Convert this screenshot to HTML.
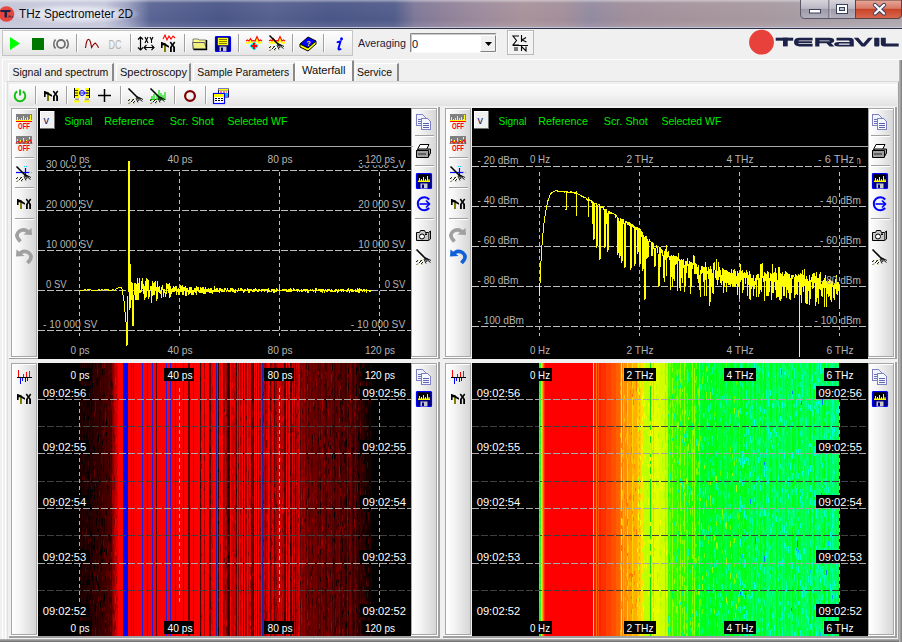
<!DOCTYPE html><html><head><meta charset="utf-8"><style>
*{margin:0;padding:0;box-sizing:border-box}
body{width:902px;height:642px;overflow:hidden;background:#f0f0f0;font-family:"Liberation Sans",sans-serif;position:relative}
.a{position:absolute}
.tcol{background:linear-gradient(90deg,#ffffff 0%,#f4f4f4 35%,#d6d6d6 100%);border:1px solid #a6a6a6;box-shadow:inset 1px 1px 0 #fff}
svg text{font-family:"Liberation Sans",sans-serif}
</style></head><body>
<div class="a" style="left:0;top:0;width:902px;height:27px;background:linear-gradient(90deg,#c4c6d8 0px,#c8cadc 60px,#c4c6da 105px,#9aa0c0 128px,#5a6494 150px,#4a5688 220px,#56608f 270px,#4a5688 330px,#525c8a 395px,#7e7898 415px,#8e8098 445px,#9c8a9c 480px,#a8929a 525px,#a28e9a 565px,#928aa0 590px,#a08e9a 630px,#a6949c 700px,#a6989e 760px,#a89ea6 820px,#aca6ae 902px)"></div><div class="a" style="left:0;top:0;width:902px;height:27px;background:linear-gradient(180deg,rgba(255,255,255,0.45) 0px,rgba(255,255,255,0.05) 3px,rgba(255,255,255,0) 20px,rgba(255,255,255,0.1) 27px)"></div><div class="a" style="left:10px;top:4px;width:130px;height:20px;border-radius:10px;background:radial-gradient(ellipse at center,rgba(230,232,242,0.85) 40%,rgba(230,232,242,0) 72%)"></div>
<div class="a" style="left:0;top:27px;width:902px;height:1px;background:#c4c6dc"></div>
<div class="a" style="left:0;top:28px;width:902px;height:1px;background:#2c3042"></div>
<div class="a" style="left:2px;top:59px;width:1px;height:583px;background:#ffffff"></div>
<div class="a" style="left:2px;top:30px;width:351px;height:26px;border:1px solid #c4c4c4;background:linear-gradient(#fdfdfd,#f4f4f4 50%,#e4e4e4)"></div>
<div class="a" style="left:8px;top:63px;width:106px;height:18px;background:linear-gradient(#f2f2f2,#ebebeb);border-left:1px solid #fff;border-top:1px solid #fff;border-right:2px solid #8a8a8a"></div>
<div class="a" style="left:116px;top:63px;width:75px;height:18px;background:linear-gradient(#f2f2f2,#ebebeb);border-left:1px solid #fff;border-top:1px solid #fff;border-right:2px solid #8a8a8a"></div>
<div class="a" style="left:193px;top:63px;width:102px;height:18px;background:linear-gradient(#f2f2f2,#ebebeb);border-left:1px solid #fff;border-top:1px solid #fff;border-right:2px solid #8a8a8a"></div>
<div class="a" style="left:355px;top:63px;width:44px;height:18px;background:linear-gradient(#f2f2f2,#ebebeb);border-left:1px solid #fff;border-top:1px solid #fff;border-right:2px solid #8a8a8a"></div>
<div class="a" style="left:295px;top:60px;width:59px;height:23px;background:linear-gradient(#fdfdfd,#f6f6f6);border-left:1px solid #fff;border-top:1px solid #e8e8e8;border-right:2px solid #8a8a8a"></div>
<div class="a" style="left:5px;top:81px;width:895px;height:561px;border-left:1px solid #fff;border-top:1px solid #d8d8d8;border-right:2px solid #a0a0a0;background:#f0f0f0"></div>
<div class="a" style="left:7px;top:82px;width:891px;height:560px;background:#f0f0f0;border-left:1px solid #e0e0e0"></div>
<div class="a" style="left:9px;top:84px;width:888px;height:22px;background:linear-gradient(#fcfcfc,#f3f3f3 50%,#e2e2e2)"></div>
<div class="a" style="left:9px;top:107px;width:431px;height:252px;background:#f0f0f0;border-right:2px solid #a0a0a0;border-bottom:1px solid #a0a0a0;box-shadow:inset -1px -1px 0 #fff"></div>
<div class="a" style="left:443px;top:107px;width:454px;height:252px;background:#f0f0f0;border-right:2px solid #a0a0a0;border-bottom:1px solid #a0a0a0;box-shadow:inset -1px -1px 0 #fff"></div>
<div class="a" style="left:9px;top:362px;width:431px;height:276px;background:#f0f0f0;border-right:2px solid #a0a0a0;border-bottom:2px solid #a0a0a0;box-shadow:inset -1px -1px 0 #fff"></div>
<div class="a" style="left:443px;top:362px;width:454px;height:276px;background:#f0f0f0;border-right:2px solid #a0a0a0;border-bottom:2px solid #a0a0a0;box-shadow:inset -1px -1px 0 #fff"></div>
<div class="a tcol" style="left:11px;top:108px;width:26px;height:249px"></div>
<div class="a" style="left:38px;top:108px;width:373px;height:251px;background:#000"></div>
<div class="a tcol" style="left:411px;top:108px;width:26px;height:249px"></div>
<div class="a tcol" style="left:445px;top:108px;width:26px;height:249px"></div>
<div class="a" style="left:472px;top:108px;width:396px;height:251px;background:#000"></div>
<div class="a tcol" style="left:868px;top:108px;width:26px;height:249px"></div>
<div class="a tcol" style="left:11px;top:363px;width:26px;height:272px"></div>
<div class="a" style="left:38px;top:363px;width:373px;height:273px;background:#000"></div>
<div class="a tcol" style="left:411px;top:363px;width:26px;height:272px"></div>
<div class="a tcol" style="left:445px;top:363px;width:26px;height:272px"></div>
<div class="a" style="left:472px;top:363px;width:396px;height:273px;background:#000"></div>
<div class="a tcol" style="left:868px;top:363px;width:26px;height:272px"></div>
<div class="a" style="left:0;top:639px;width:902px;height:3px;background:linear-gradient(#b8b8b8,#6a6a6a)"></div>
<div class="a" style="left:899px;top:60px;width:3px;height:582px;background:linear-gradient(90deg,#c0c0c0,#7a7a7a)"></div>
<div class="a" style="left:2px;top:59px;width:900px;height:1px;background:#fcfcfc"></div>
<svg class="a" style="left:0;top:0" width="902" height="642" viewBox="0 0 902 642">
<text x="12.4" y="76" font-size="11" fill="#101010" text-anchor="start" font-weight="normal" textLength="96" lengthAdjust="spacingAndGlyphs" >Signal and spectrum</text>
<text x="120" y="76" font-size="11" fill="#101010" text-anchor="start" font-weight="normal" textLength="67" lengthAdjust="spacingAndGlyphs" >Spectroscopy</text>
<text x="197.3" y="76" font-size="11" fill="#101010" text-anchor="start" font-weight="normal" textLength="92" lengthAdjust="spacingAndGlyphs" >Sample Parameters</text>
<text x="301.9" y="74" font-size="11" fill="#101010" text-anchor="start" font-weight="normal" textLength="43.6" lengthAdjust="spacingAndGlyphs" >Waterfall</text>
<text x="357" y="76" font-size="11" fill="#101010" text-anchor="start" font-weight="normal" textLength="35" lengthAdjust="spacingAndGlyphs" >Service</text>
<text x="19" y="18" font-size="12" fill="#0a0a14" text-anchor="start" font-weight="normal" textLength="114" lengthAdjust="spacingAndGlyphs" >THz Spectrometer 2D</text>
<text x="358" y="47" font-size="11" fill="#1c1c3c" text-anchor="start" font-weight="normal" textLength="48" lengthAdjust="spacingAndGlyphs" >Averaging</text>
<rect x="38" y="146" width="375" height="1" fill="#a8a8a8"/><rect x="40" y="111" width="15" height="18" fill="#f0f0f0" stroke="#ffffff" stroke-width="0"/><rect x="40" y="111" width="15" height="1" fill="#fff"/><rect x="40" y="111" width="1" height="18" fill="#fff"/><rect x="40" y="128" width="15" height="1" fill="#707070"/><rect x="54" y="111" width="1" height="18" fill="#707070"/><text x="43.5" y="124" font-size="11" fill="#202060" text-anchor="start" font-weight="normal" >v</text><text x="64.5" y="125" font-size="11" fill="#00ec00" text-anchor="start" font-weight="normal" textLength="28" lengthAdjust="spacingAndGlyphs" >Signal</text><text x="104.3" y="125" font-size="11" fill="#00ec00" text-anchor="start" font-weight="normal" textLength="49.6" lengthAdjust="spacingAndGlyphs" >Reference</text><text x="169.7" y="125" font-size="11" fill="#00ec00" text-anchor="start" font-weight="normal" textLength="44" lengthAdjust="spacingAndGlyphs" >Scr. Shot</text><text x="227.4" y="125" font-size="11" fill="#00ec00" text-anchor="start" font-weight="normal" textLength="60" lengthAdjust="spacingAndGlyphs" >Selected WF</text>
<rect x="472" y="146" width="396" height="1" fill="#a8a8a8"/><rect x="474" y="111" width="15" height="18" fill="#f0f0f0" stroke="#ffffff" stroke-width="0"/><rect x="474" y="111" width="15" height="1" fill="#fff"/><rect x="474" y="111" width="1" height="18" fill="#fff"/><rect x="474" y="128" width="15" height="1" fill="#707070"/><rect x="488" y="111" width="1" height="18" fill="#707070"/><text x="477.5" y="124" font-size="11" fill="#202060" text-anchor="start" font-weight="normal" >v</text><text x="498.5" y="125" font-size="11" fill="#00ec00" text-anchor="start" font-weight="normal" textLength="28" lengthAdjust="spacingAndGlyphs" >Signal</text><text x="538.3" y="125" font-size="11" fill="#00ec00" text-anchor="start" font-weight="normal" textLength="49.6" lengthAdjust="spacingAndGlyphs" >Reference</text><text x="603.7" y="125" font-size="11" fill="#00ec00" text-anchor="start" font-weight="normal" textLength="44" lengthAdjust="spacingAndGlyphs" >Scr. Shot</text><text x="661.4" y="125" font-size="11" fill="#00ec00" text-anchor="start" font-weight="normal" textLength="60" lengthAdjust="spacingAndGlyphs" >Selected WF</text>
<line x1="38" y1="170.5" x2="411" y2="170.5" stroke="#bdbdbd" stroke-width="1" stroke-dasharray="7 2" stroke-dashoffset="0"/>
<line x1="38" y1="210.5" x2="411" y2="210.5" stroke="#bdbdbd" stroke-width="1" stroke-dasharray="7 2" stroke-dashoffset="0"/>
<line x1="38" y1="250.5" x2="411" y2="250.5" stroke="#bdbdbd" stroke-width="1" stroke-dasharray="7 2" stroke-dashoffset="0"/>
<line x1="38" y1="290.5" x2="411" y2="290.5" stroke="#bdbdbd" stroke-width="1" stroke-dasharray="7 2" stroke-dashoffset="0"/>
<line x1="38" y1="330.5" x2="411" y2="330.5" stroke="#bdbdbd" stroke-width="1" stroke-dasharray="7 2" stroke-dashoffset="0"/>
<line x1="79.5" y1="172" x2="79.5" y2="336" stroke="#bdbdbd" stroke-width="1" stroke-dasharray="4 3" stroke-dashoffset="0"/>
<line x1="179.5" y1="172" x2="179.5" y2="336" stroke="#bdbdbd" stroke-width="1" stroke-dasharray="4 3" stroke-dashoffset="0"/>
<line x1="279.5" y1="172" x2="279.5" y2="336" stroke="#bdbdbd" stroke-width="1" stroke-dasharray="4 3" stroke-dashoffset="0"/>
<line x1="379.5" y1="172" x2="379.5" y2="336" stroke="#bdbdbd" stroke-width="1" stroke-dasharray="4 3" stroke-dashoffset="0"/>
<line x1="472" y1="166.5" x2="866" y2="166.5" stroke="#bdbdbd" stroke-width="1" stroke-dasharray="7 2" stroke-dashoffset="0"/>
<line x1="472" y1="206.5" x2="866" y2="206.5" stroke="#bdbdbd" stroke-width="1" stroke-dasharray="7 2" stroke-dashoffset="0"/>
<line x1="472" y1="246.5" x2="866" y2="246.5" stroke="#bdbdbd" stroke-width="1" stroke-dasharray="7 2" stroke-dashoffset="0"/>
<line x1="472" y1="286.5" x2="866" y2="286.5" stroke="#bdbdbd" stroke-width="1" stroke-dasharray="7 2" stroke-dashoffset="0"/>
<line x1="472" y1="326.5" x2="866" y2="326.5" stroke="#bdbdbd" stroke-width="1" stroke-dasharray="7 2" stroke-dashoffset="0"/>
<line x1="539.5" y1="172" x2="539.5" y2="336" stroke="#bdbdbd" stroke-width="1" stroke-dasharray="4 3" stroke-dashoffset="0"/>
<line x1="639.5" y1="172" x2="639.5" y2="336" stroke="#bdbdbd" stroke-width="1" stroke-dasharray="4 3" stroke-dashoffset="0"/>
<line x1="739.5" y1="172" x2="739.5" y2="336" stroke="#bdbdbd" stroke-width="1" stroke-dasharray="4 3" stroke-dashoffset="0"/>
<line x1="839.5" y1="172" x2="839.5" y2="336" stroke="#bdbdbd" stroke-width="1" stroke-dasharray="4 3" stroke-dashoffset="0"/>
<text x="46" y="168" font-size="11" fill="#b4b4b4" text-anchor="start" font-weight="normal" textLength="47" lengthAdjust="spacingAndGlyphs" >30 000 SV</text>
<text x="405.3" y="168" font-size="11" fill="#b4b4b4" text-anchor="end" font-weight="normal" textLength="47" lengthAdjust="spacingAndGlyphs" >30 000 SV</text>
<text x="477.5" y="164" font-size="11" fill="#b4b4b4" text-anchor="start" font-weight="normal" textLength="41" lengthAdjust="spacingAndGlyphs" >- 20 dBm</text>
<text x="861" y="164" font-size="11" fill="#b4b4b4" text-anchor="end" font-weight="normal" textLength="41" lengthAdjust="spacingAndGlyphs" >- 20 dBm</text>
<rect x="68" y="152" width="25" height="13" fill="#000"/><text x="80" y="163" font-size="11" fill="#b4b4b4" text-anchor="middle" font-weight="normal" textLength="19" lengthAdjust="spacingAndGlyphs" >0 ps</text>
<text x="80" y="354" font-size="11" fill="#b4b4b4" text-anchor="middle" font-weight="normal" textLength="19" lengthAdjust="spacingAndGlyphs" >0 ps</text>
<rect x="164" y="152" width="31" height="13" fill="#000"/><text x="180" y="163" font-size="11" fill="#b4b4b4" text-anchor="middle" font-weight="normal" textLength="25" lengthAdjust="spacingAndGlyphs" >40 ps</text>
<text x="180" y="354" font-size="11" fill="#b4b4b4" text-anchor="middle" font-weight="normal" textLength="25" lengthAdjust="spacingAndGlyphs" >40 ps</text>
<rect x="264" y="152" width="31" height="13" fill="#000"/><text x="280" y="163" font-size="11" fill="#b4b4b4" text-anchor="middle" font-weight="normal" textLength="25" lengthAdjust="spacingAndGlyphs" >80 ps</text>
<text x="280" y="354" font-size="11" fill="#b4b4b4" text-anchor="middle" font-weight="normal" textLength="25" lengthAdjust="spacingAndGlyphs" >80 ps</text>
<rect x="362" y="152" width="36" height="13" fill="#000"/><text x="380" y="163" font-size="11" fill="#b4b4b4" text-anchor="middle" font-weight="normal" textLength="30" lengthAdjust="spacingAndGlyphs" >120 ps</text>
<text x="380" y="354" font-size="11" fill="#b4b4b4" text-anchor="middle" font-weight="normal" textLength="30" lengthAdjust="spacingAndGlyphs" >120 ps</text>
<rect x="527" y="152" width="26" height="13" fill="#000"/><text x="540" y="163" font-size="11" fill="#b4b4b4" text-anchor="middle" font-weight="normal" textLength="20" lengthAdjust="spacingAndGlyphs" >0 Hz</text>
<text x="540" y="354" font-size="11" fill="#b4b4b4" text-anchor="middle" font-weight="normal" textLength="20" lengthAdjust="spacingAndGlyphs" >0 Hz</text>
<rect x="624" y="152" width="33" height="13" fill="#000"/><text x="640" y="163" font-size="11" fill="#b4b4b4" text-anchor="middle" font-weight="normal" textLength="27" lengthAdjust="spacingAndGlyphs" >2 THz</text>
<text x="640" y="354" font-size="11" fill="#b4b4b4" text-anchor="middle" font-weight="normal" textLength="27" lengthAdjust="spacingAndGlyphs" >2 THz</text>
<rect x="724" y="152" width="33" height="13" fill="#000"/><text x="740" y="163" font-size="11" fill="#b4b4b4" text-anchor="middle" font-weight="normal" textLength="27" lengthAdjust="spacingAndGlyphs" >4 THz</text>
<text x="740" y="354" font-size="11" fill="#b4b4b4" text-anchor="middle" font-weight="normal" textLength="27" lengthAdjust="spacingAndGlyphs" >4 THz</text>
<rect x="815" y="152" width="42" height="13" fill="#000"/><text x="836" y="163" font-size="11" fill="#b4b4b4" text-anchor="middle" font-weight="normal" textLength="36" lengthAdjust="spacingAndGlyphs" >- 6 THz</text>
<text x="840" y="354" font-size="11" fill="#b4b4b4" text-anchor="middle" font-weight="normal" textLength="27" lengthAdjust="spacingAndGlyphs" >6 THz</text>
<polyline fill="none" stroke="#ffff00" stroke-width="1" shape-rendering="crispEdges" points="80.00,290.0 81.00,290.0 82.00,290.5 83.00,290.0 84.00,290.0 85.00,289.5 86.00,290.0 87.00,290.0 88.00,289.5 89.00,290.0 90.00,289.5 91.00,290.0 92.00,290.0 93.00,290.0 94.00,290.5 95.00,290.5 96.00,290.0 97.00,290.0 98.00,290.0 99.00,289.5 100.00,290.5 101.00,290.0 102.00,289.5 103.00,290.0 104.00,290.0 105.00,289.5 106.00,290.0 107.00,289.5 108.00,289.5 109.00,290.5 110.00,290.0 111.00,290.0 112.00,290.0 113.00,289.5 114.00,290.0 115.00,290.0 116.00,289.0 118.00,288.0 120.00,287.0 121.00,287.5 122.00,289.0 123.00,295.0 124.00,301.0 125.00,312.0 126.00,322.0 127.00,345.5 128.00,300.0 128.50,161.0 129.50,161.0 130.00,310.0 130.50,264.0 131.00,300.0 132.00,282.0 133.00,326.0 134.00,295.0 135.00,282.7 135.33,288.5 135.67,296.9 136.00,300.1 136.33,295.2 136.67,285.3 137.00,285.8 137.33,277.6 137.67,293.3 138.00,300.4 138.33,294.7 138.67,292.9 139.00,283.3 139.33,278.2 139.67,279.4 140.00,292.8 140.33,292.6 140.67,290.0 141.00,292.5 141.33,286.2 141.67,291.1 142.00,280.7 142.33,288.7 142.67,277.7 143.00,283.9 143.33,287.0 143.67,294.0 144.00,287.6 144.33,286.2 144.67,299.8 145.00,287.0 145.33,295.3 145.67,280.7 146.00,298.1 146.33,287.8 146.67,286.9 147.00,278.0 147.33,290.7 147.67,279.8 148.00,279.1 148.33,298.8 148.67,280.7 149.00,292.2 149.33,296.4 149.67,296.4 150.00,290.2 150.33,286.0 150.67,288.3 151.00,285.9 151.33,286.5 151.67,302.9 152.00,291.0 152.33,281.4 152.67,281.6 153.00,295.5 153.33,283.5 153.67,288.9 154.00,295.3 154.33,289.1 154.67,282.4 155.00,287.4 155.33,281.4 155.67,290.9 156.00,289.0 156.33,301.2 156.67,286.6 157.00,295.4 157.33,299.1 157.67,281.4 158.00,287.6 158.33,289.0 158.67,292.4 159.00,287.6 159.33,287.1 159.67,291.3 160.00,292.7 160.33,291.6 160.67,294.0 161.00,291.4 161.33,298.1 161.67,287.1 162.00,290.0 162.33,287.7 162.67,285.4 163.00,288.7 163.33,293.4 163.67,296.9 164.00,290.6 164.33,291.2 164.67,289.3 165.00,292.3 165.33,296.1 165.67,296.3 166.00,293.9 166.33,290.5 166.67,282.7 167.00,284.3 167.33,289.4 167.67,287.8 168.00,288.2 168.33,292.3 168.67,283.7 169.00,293.2 169.33,284.1 169.67,283.3 170.00,297.8 170.33,285.9 170.67,290.7 171.00,288.4 171.33,294.2 171.67,292.0 172.00,291.6 172.33,287.9 172.67,291.4 173.00,291.5 173.33,291.0 173.67,287.4 174.00,286.5 174.33,291.1 174.67,291.1 175.00,286.7 175.33,290.9 175.67,286.5 176.00,286.8 176.33,295.0 176.67,286.2 177.00,291.3 177.33,291.0 177.67,292.1 178.00,288.9 178.33,290.4 178.67,294.7 179.00,288.5 179.33,294.9 179.67,289.1 180.00,291.6 180.33,290.9 180.67,285.4 181.00,292.1 181.33,289.5 181.67,286.3 182.00,291.6 182.33,285.4 182.67,285.9 183.00,295.4 183.33,288.9 183.67,291.6 184.00,286.8 184.33,287.8 184.67,291.2 185.00,289.2 185.33,285.6 185.67,295.7 186.00,287.2 186.33,294.7 186.67,295.2 187.00,292.0 187.33,288.4 187.67,288.5 188.00,290.0 188.33,290.0 188.67,295.4 189.00,292.9 189.33,287.4 189.67,293.4 190.00,293.5 190.33,288.0 190.67,287.4 191.00,292.2 191.33,286.6 191.67,291.7 192.00,295.2 192.33,290.3 192.67,291.0 193.00,292.1 193.33,294.7 193.67,290.8 194.00,290.6 194.33,289.4 194.67,290.4 195.00,289.3 195.33,288.8 195.67,291.7 196.00,293.1 196.33,294.7 196.67,290.3 197.00,286.5 197.33,290.6 197.67,290.3 198.00,290.1 198.33,290.7 198.67,286.9 199.00,290.4 199.33,291.3 199.67,292.4 200.00,290.7 200.33,291.7 200.67,286.9 201.00,292.8 201.33,290.4 201.67,288.0 202.00,290.5 202.33,287.2 202.67,287.5 203.00,292.7 203.33,293.6 203.67,287.0 204.00,292.0 204.33,292.7 204.67,290.7 205.00,288.6 205.33,293.5 205.67,287.3 206.00,289.2 206.33,290.4 206.67,292.2 207.00,289.4 207.33,292.3 207.67,290.7 208.00,292.1 208.33,288.6 208.67,290.0 209.00,289.6 209.33,288.7 209.67,291.4 210.00,292.6 210.33,292.8 210.67,291.6 211.00,288.0 211.33,288.5 211.67,290.8 212.00,293.4 212.33,293.2 212.67,290.7 213.00,290.1 213.33,292.1 213.67,291.0 214.00,291.8 214.33,290.0 214.67,288.2 215.00,289.2 215.33,291.1 215.67,290.9 216.00,290.2 216.33,291.6 216.67,289.7 217.00,288.3 217.33,292.1 217.67,290.2 218.00,291.5 218.33,290.5 218.67,290.9 219.00,290.7 219.33,292.5 219.67,290.0 220.00,288.5 220.33,289.9 220.67,290.1 221.00,290.8 221.33,289.2 221.67,291.4 222.00,291.1 222.33,291.1 222.67,288.7 223.00,291.8 223.33,291.8 223.67,291.9 224.00,290.7 224.33,290.2 224.67,290.9 225.00,288.3 225.33,289.9 225.67,288.0 226.00,289.9 226.33,291.9 226.67,292.0 227.00,290.8 227.33,289.9 227.67,288.1 228.00,290.3 228.33,291.6 228.67,291.8 229.00,290.0 229.33,290.3 229.67,292.1 230.00,290.0 230.33,292.4 230.67,289.8 231.00,288.5 231.33,288.7 231.67,289.6 232.00,290.2 232.33,289.6 232.67,291.9 233.00,290.9 233.33,289.5 233.67,291.7 234.00,291.6 234.33,290.5 234.67,292.7 235.00,290.0 235.33,289.7 235.67,291.4 236.00,290.7 236.33,290.2 236.67,290.0 237.00,289.9 237.33,290.9 237.67,290.4 238.00,291.2 238.33,288.6 238.67,288.4 239.00,289.7 239.33,290.4 239.67,290.6 240.00,290.9 240.33,288.5 240.67,291.4 241.00,288.6 241.33,289.2 241.67,289.2 242.00,288.7 242.33,289.9 242.67,289.9 243.00,291.0 243.33,290.9 243.67,291.8 244.00,291.4 244.33,290.5 244.67,291.9 245.00,290.5 245.33,291.4 245.67,289.0 246.00,290.9 246.33,290.7 246.67,290.9 247.00,290.7 247.33,289.4 247.67,290.5 248.00,290.4 248.33,292.5 248.67,289.0 249.00,292.4 249.33,292.0 249.67,292.5 250.00,288.9 250.33,290.5 250.67,289.0 251.00,289.0 251.33,290.6 251.67,289.4 252.00,289.6 252.33,291.9 252.67,291.0 253.00,290.7 253.33,289.3 253.67,290.7 254.00,290.0 254.33,290.6 254.67,291.2 255.00,289.4 255.33,289.2 255.67,290.4 256.00,290.5 256.33,289.9 256.67,290.6 257.00,290.2 257.33,292.0 257.67,290.0 258.00,291.4 258.33,290.5 258.67,291.4 259.00,289.4 259.33,289.4 259.67,289.1 260.00,290.7 260.33,290.7 260.67,290.4 261.00,291.0 261.33,290.3 261.67,291.0 262.00,288.9 262.33,289.0 262.67,289.1 263.00,290.8 263.33,289.2 263.67,289.2 264.00,288.9 264.33,290.4 264.67,292.2 265.00,290.2 265.33,289.9 265.67,290.1 266.00,289.3 266.33,289.8 266.67,289.3 267.00,289.5 267.33,290.6 267.67,291.7 268.00,290.8 268.33,289.3 268.67,290.4 269.00,291.8 269.33,290.6 269.67,291.6 270.00,291.6 270.33,291.7 270.67,291.5 271.00,292.2 271.33,291.4 271.67,291.5 272.00,289.5 272.33,291.0 272.67,289.6 273.00,290.9 273.33,291.7 273.67,290.8 274.00,289.2 274.33,290.2 274.67,291.4 275.00,290.8 275.33,291.2 275.67,291.3 276.00,290.5 276.33,291.0 276.67,289.0 277.00,289.1 277.33,290.6 277.67,290.7 278.00,290.0 278.33,290.6 278.67,290.6 279.00,289.7 279.33,291.0 279.67,289.3 280.00,290.2 280.33,290.8 280.67,290.4 281.00,290.6 281.33,290.4 281.67,290.6 282.00,290.2 282.33,290.1 282.67,290.2 283.00,289.6 283.33,290.6 283.67,290.5 284.00,289.6 284.33,290.2 284.67,289.4 285.00,290.0 285.33,289.5 285.67,289.6 286.00,289.4 286.33,290.7 286.67,289.6 287.00,291.6 287.33,290.8 287.67,290.4 288.00,290.3 288.33,291.1 288.67,290.0 289.00,290.3 289.33,290.3 289.67,291.6 290.00,289.5 290.33,289.1 290.67,290.8 291.00,292.0 291.33,290.2 291.67,289.9 292.00,289.6 292.33,290.8 292.67,290.4 293.00,290.8 293.33,290.2 293.67,289.1 294.00,290.5 294.33,289.8 294.67,289.9 295.00,290.4 295.33,290.6 295.67,290.7 296.00,290.0 296.33,289.7 296.67,290.2 297.00,289.3 297.33,291.2 297.67,290.5 298.00,289.4 298.33,290.4 298.67,289.7 299.00,290.3 299.33,291.3 299.67,290.4 300.00,290.2 300.33,290.5 300.67,290.9 301.00,290.2 301.33,290.6 301.67,290.0 302.00,291.5 302.33,291.5 302.67,290.1 303.00,291.4 303.33,290.6 303.67,290.1 304.00,289.3 304.33,290.0 304.67,290.7 305.00,290.5 305.33,291.1 305.67,290.2 306.00,290.8 306.33,289.6 306.67,289.6 307.00,290.9 307.33,290.4 307.67,291.4 308.00,290.3 308.33,290.4 308.67,291.4 309.00,289.8 309.33,290.4 309.67,290.6 310.00,290.6 310.33,290.5 310.67,289.9 311.00,290.4 311.33,290.8 311.67,290.8 312.00,289.8 312.33,290.4 312.67,289.7 313.00,290.0 313.33,291.8 313.67,291.3 314.00,290.8 314.33,290.0 314.67,290.2 315.00,290.5 315.33,289.8 315.67,291.3 316.00,290.5 316.33,289.5 316.67,290.6 317.00,290.9 317.33,290.2 317.67,290.1 318.00,291.1 318.33,290.7 318.67,290.0 319.00,290.6 319.33,290.7 319.67,290.4 320.00,289.3 320.33,291.6 320.67,289.3 321.00,290.8 321.33,289.5 321.67,290.4 322.00,291.5 322.33,291.8 322.67,289.9 323.00,289.5 323.33,289.3 323.67,290.6 324.00,290.7 324.33,291.4 324.67,289.9 325.00,291.1 325.33,290.8 325.67,290.1 326.00,290.6 326.33,290.5 326.67,291.8 327.00,290.1 327.33,290.9 327.67,289.8 328.00,289.5 328.33,289.3 328.67,290.7 329.00,290.5 329.33,289.8 329.67,289.4 330.00,290.8 330.33,291.5 330.67,291.0 331.00,290.0 331.33,290.5 331.67,289.3 332.00,290.8 332.33,291.1 332.67,290.9 333.00,291.0 333.33,291.0 333.67,291.3 334.00,291.3 334.33,291.2 334.67,290.7 335.00,290.1 335.33,291.6 335.67,290.2 336.00,289.6 336.33,289.6 336.67,289.6 337.00,290.8 337.33,291.4 337.67,290.0 338.00,291.6 338.33,289.7 338.67,289.5 339.00,291.0 339.33,290.4 339.67,290.3 340.00,290.4 340.33,290.5 340.67,290.7 341.00,289.3 341.33,290.6 341.67,289.7 342.00,289.4 342.33,290.5 342.67,290.1 343.00,290.4 343.33,290.9 343.67,289.4 344.00,290.7 344.33,290.4 344.67,290.4 345.00,290.4 345.33,290.8 345.67,290.2 346.00,289.9 346.33,291.2 346.67,290.6 347.00,290.3 347.33,291.6 347.67,290.1 348.00,290.3 348.33,289.4 348.67,290.3 349.00,290.7 349.33,291.7 349.67,290.8 350.00,291.2 350.33,289.7 350.67,291.2 351.00,289.4 351.33,291.7 351.67,291.0 352.00,289.5 352.33,290.7 352.67,291.1 353.00,291.6 353.33,289.8 353.67,291.6 354.00,290.0 354.33,290.2 354.67,290.0 355.00,289.8 355.33,290.5 355.67,289.7 356.00,291.5 356.33,290.7 356.67,291.3 357.00,290.9 357.33,291.1 357.67,289.5 358.00,290.1 358.33,289.8 358.67,291.2 359.00,290.5 359.33,289.8 359.67,291.5 360.00,290.6 360.33,290.8 360.67,290.6 361.00,289.5 361.33,290.9 361.67,290.5 362.00,290.1 362.33,291.4 362.67,290.4 363.00,290.0 363.33,291.3 363.67,289.9 364.00,290.1 364.33,290.1 364.67,289.8 365.00,291.5 365.33,290.2 365.67,290.3 366.00,290.6 366.33,289.5 366.67,291.5 367.00,290.6 367.33,290.3 367.67,290.6 368.00,290.1 368.33,290.1 368.67,290.0 369.00,290.6 369.33,291.1 369.67,290.3 370.00,290.1 370.33,290.2 370.67,290.9 371.00,290.4 371.33,290.4 371.67,289.8"/>
<polyline fill="none" stroke="#ffff00" stroke-width="1" shape-rendering="crispEdges" points="539.50,296.0 540.50,270.7 541.50,251.5 542.50,238.5 543.50,227.8 544.50,219.2 545.50,212.5 546.50,207.5 547.50,202.5 548.50,198.8 549.50,196.5 550.50,194.2 551.50,192.8 552.50,192.2 553.50,191.8 554.50,191.2 555.50,190.8 556.50,190.7 557.00,190.7 557.50,191.1 558.00,190.9 558.50,191.4 559.00,191.0 559.50,191.2 560.00,191.5 560.50,191.1 561.00,191.2 561.50,191.4 562.00,191.2 562.50,191.6 563.00,191.5 563.50,191.3 564.00,191.4 564.50,192.2 565.00,191.5 565.50,191.4 566.00,191.3 566.00,210.0 566.50,192.1 567.00,191.5 567.50,192.0 568.00,193.0 568.50,192.6 569.00,192.2 569.50,192.4 570.00,191.9 570.50,191.8 571.00,192.4 571.50,191.8 572.00,192.0 572.50,192.3 573.00,192.6 573.50,192.1 574.00,192.1 574.50,192.9 575.00,192.5 575.50,193.0 576.00,192.5 576.00,216.0 576.50,194.1 577.00,193.2 577.50,193.5 578.00,194.0 578.50,194.3 579.00,194.8 579.50,194.4 580.00,195.0 580.50,195.3 581.00,196.0 581.50,196.0 582.00,195.7 582.50,196.6 583.00,196.4 583.50,197.4 584.00,196.8 584.50,197.3 585.00,197.8 585.50,197.7 586.00,198.0 586.50,199.1 587.00,198.7 587.50,199.8 588.00,198.9 588.00,217.0 588.50,199.8 589.00,199.9 589.50,199.7 590.00,200.6 590.50,200.6 591.00,200.8 591.50,201.0 592.00,202.4 592.50,201.7 593.00,224.2 593.50,202.5 594.00,240.0 594.50,204.7 595.00,202.7 595.50,203.4 596.00,203.0 596.50,205.6 597.00,248.0 597.50,206.3 598.00,205.3 598.50,204.7 599.00,204.8 599.50,205.0 600.00,260.0 600.50,206.9 601.00,206.2 601.50,207.2 602.00,208.0 602.50,206.9 603.00,207.0 603.50,208.2 604.00,209.5 604.50,210.7 605.00,248.2 605.50,210.5 606.00,209.4 606.50,212.2 607.00,223.8 607.50,212.9 608.00,252.0 608.50,212.0 609.00,210.7 609.50,212.6 610.00,213.5 610.50,212.4 611.00,212.2 611.50,212.8 612.00,214.1 612.50,213.6 613.00,213.0 613.50,213.2 614.00,214.3 614.50,214.8 615.00,214.4 615.50,216.9 616.00,216.4 616.50,215.8 617.00,217.4 617.50,218.4 618.00,255.0 618.50,218.3 619.00,220.5 619.50,231.7 620.00,257.5 620.50,219.0 621.00,219.1 621.50,222.1 622.00,263.0 622.50,219.7 623.00,219.2 623.50,221.8 624.00,223.9 624.50,223.7 625.00,268.0 625.50,220.8 626.00,223.3 626.50,221.9 627.00,223.0 627.50,222.6 628.00,225.1 628.50,223.6 629.00,222.5 629.50,224.7 630.00,223.3 630.50,223.6 631.00,270.0 631.50,225.9 632.00,224.4 632.50,226.1 633.00,225.3 633.50,227.4 634.00,227.0 634.50,225.8 635.00,266.0 635.50,226.9 636.00,230.0 636.50,229.8 637.00,227.5 637.50,230.0 638.00,253.7 638.50,228.4 639.00,228.8 639.50,228.9 640.00,265.0 640.50,230.2 641.00,231.0 641.50,231.0 642.00,237.2 642.50,232.4 643.00,270.5 643.50,235.0 644.00,237.0 644.50,238.4 645.00,300.0 645.50,241.7 646.00,235.9 646.50,238.7 647.00,259.1 647.50,238.7 648.00,257.9 648.50,242.5 649.00,240.7 649.50,239.7 650.00,241.6 650.50,241.8 651.00,241.8 651.50,244.4 652.00,256.3 652.50,241.7 653.00,248.9 653.50,242.9 654.00,247.9 654.50,249.3 655.00,266.8 655.50,250.7 656.00,248.4 656.50,246.4 657.00,247.5 657.50,249.1 658.00,253.3 658.50,276.1 659.00,287.4 659.50,252.5 660.00,247.0 660.34,249.5 660.68,266.9 661.02,249.2 661.36,252.8 661.70,249.7 662.04,250.8 662.38,250.5 662.72,251.4 663.06,256.9 663.40,254.9 663.74,262.3 664.08,281.7 664.42,253.2 664.76,251.4 665.10,260.0 665.44,251.7 665.78,250.5 666.12,247.8 666.46,275.7 666.80,244.8 667.14,258.4 667.48,253.6 667.82,252.5 668.16,252.2 668.50,254.2 668.84,254.0 669.18,259.9 669.52,255.6 669.86,257.2 670.20,258.0 670.54,255.7 670.88,290.0 671.22,256.6 671.56,257.4 671.90,255.2 672.24,258.3 672.58,261.2 672.92,287.4 673.26,259.6 673.60,254.7 673.94,258.0 674.28,256.0 674.62,281.1 674.96,257.9 675.30,258.4 675.64,264.9 675.98,255.8 676.32,256.5 676.66,257.9 677.00,263.6 677.34,257.4 677.68,290.8 678.02,260.0 678.36,261.2 678.70,253.5 679.04,259.5 679.38,260.8 679.72,259.5 680.06,291.0 680.40,266.2 680.74,264.5 681.08,259.1 681.42,264.5 681.76,266.5 682.10,282.5 682.44,271.3 682.78,259.9 683.12,267.9 683.46,259.0 683.80,260.8 684.14,267.4 684.48,280.1 684.82,291.5 685.16,282.4 685.50,260.6 685.84,270.7 686.18,260.9 686.52,273.0 686.86,263.4 687.20,260.7 687.54,258.4 687.88,264.5 688.22,267.7 688.56,278.1 688.90,265.0 689.24,261.2 689.58,264.5 689.92,271.0 690.26,294.2 690.60,268.9 690.94,262.5 691.28,262.4 691.62,286.5 691.96,266.2 692.30,269.0 692.64,266.7 692.98,262.6 693.32,263.7 693.66,265.1 694.00,255.5 694.34,265.3 694.68,268.1 695.02,273.7 695.36,269.9 695.70,263.5 696.04,265.0 696.38,264.0 696.72,274.3 697.06,266.6 697.40,269.5 697.74,269.5 698.08,281.2 698.42,278.8 698.76,265.1 699.10,289.1 699.44,280.6 699.78,275.5 700.12,296.7 700.46,270.8 700.80,276.8 701.14,266.0 701.48,266.6 701.82,274.4 702.16,272.5 702.50,266.3 702.84,270.9 703.18,269.2 703.52,268.5 703.86,270.6 704.20,295.9 704.54,266.6 704.88,268.7 705.22,267.2 705.56,262.4 705.90,279.8 706.24,266.7 706.58,296.4 706.92,270.8 707.26,272.9 707.60,272.0 707.94,274.0 708.28,272.1 708.62,278.5 708.96,268.7 709.30,269.3 709.64,279.6 709.98,305.9 710.32,271.0 710.66,266.5 711.00,268.2 711.34,287.0 711.68,272.4 712.02,286.9 712.36,273.4 712.70,276.5 713.04,294.3 713.38,276.1 713.72,272.4 714.06,262.1 714.40,267.2 714.74,267.4 715.08,270.6 715.42,270.4 715.76,272.3 716.10,280.2 716.44,259.3 716.78,269.4 717.12,272.4 717.46,278.8 717.80,285.3 718.14,276.7 718.48,275.9 718.82,262.0 719.16,271.8 719.50,276.0 719.84,276.2 720.18,269.8 720.52,282.7 720.86,274.2 721.20,275.9 721.54,284.7 721.88,278.8 722.22,269.2 722.56,280.6 722.90,267.9 723.24,270.5 723.58,272.6 723.92,292.5 724.26,273.5 724.60,270.4 724.94,276.5 725.28,269.7 725.62,271.5 725.96,280.5 726.30,291.3 726.64,291.4 726.98,269.9 727.32,282.5 727.66,277.5 728.00,273.7 728.34,282.8 728.68,285.4 729.02,271.6 729.36,277.5 729.70,277.9 730.04,285.9 730.38,273.2 730.72,274.6 731.06,284.1 731.40,275.6 731.74,269.4 732.08,274.4 732.42,276.4 732.76,286.9 733.10,269.7 733.44,278.4 733.78,286.3 734.12,280.5 734.46,286.8 734.80,269.5 735.14,287.2 735.48,272.0 735.82,271.3 736.16,283.6 736.50,275.6 736.84,283.8 737.18,271.4 737.52,294.5 737.86,275.1 738.20,272.9 738.54,281.8 738.88,286.6 739.22,271.6 739.56,298.1 739.90,273.5 740.24,274.1 740.58,264.5 740.92,281.8 741.26,276.3 741.60,275.5 741.94,271.2 742.28,270.5 742.62,270.3 742.96,292.9 743.30,273.3 743.64,280.6 743.98,276.1 744.32,276.7 744.66,272.4 745.00,272.2 745.34,284.0 745.68,276.8 746.02,278.4 746.36,270.4 746.70,276.3 747.04,271.7 747.38,296.4 747.72,280.2 748.06,276.8 748.40,279.8 748.74,284.7 749.08,272.2 749.42,271.2 749.76,298.7 750.10,299.1 750.44,274.8 750.78,273.9 751.12,289.2 751.46,279.5 751.80,277.7 752.14,279.7 752.48,278.9 752.82,279.3 753.16,290.5 753.50,275.3 753.84,296.0 754.18,282.6 754.52,281.3 754.86,289.4 755.20,280.5 755.54,281.6 755.88,278.4 756.22,280.0 756.56,296.6 756.90,275.1 757.24,278.1 757.58,278.8 757.92,273.7 758.26,274.7 758.60,277.8 758.94,297.2 759.28,280.9 759.62,278.1 759.96,279.9 760.30,290.1 760.64,272.5 760.98,263.7 761.32,271.9 761.66,292.3 762.00,279.5 762.34,263.5 762.68,274.9 763.02,277.1 763.36,276.2 763.70,276.3 764.04,282.0 764.38,272.4 764.72,300.5 765.06,278.1 765.40,272.9 765.74,274.5 766.08,275.5 766.42,274.0 766.76,295.5 767.10,296.3 767.44,276.2 767.78,271.6 768.12,272.0 768.46,295.7 768.80,277.7 769.14,278.5 769.48,281.5 769.82,292.3 770.16,273.0 770.50,274.6 770.84,274.9 771.18,273.8 771.52,293.4 771.86,299.9 772.20,269.8 772.54,263.9 772.88,292.8 773.22,273.5 773.56,293.2 773.90,279.1 774.24,271.8 774.58,277.1 774.92,282.1 775.26,282.2 775.60,268.3 775.94,290.4 776.28,272.6 776.62,274.6 776.96,297.8 777.30,292.2 777.64,291.8 777.98,280.2 778.32,279.1 778.66,297.4 779.00,266.6 779.34,277.5 779.68,274.7 780.02,300.7 780.36,275.4 780.70,273.0 781.04,298.9 781.38,278.2 781.72,289.5 782.06,272.1 782.40,280.3 782.74,272.4 783.08,289.8 783.42,296.4 783.76,283.8 784.10,273.7 784.44,278.2 784.78,296.0 785.12,275.6 785.46,287.2 785.80,272.5 786.14,273.0 786.48,272.6 786.82,297.9 787.16,283.2 787.50,272.7 787.84,279.8 788.18,273.9 788.52,280.6 788.86,292.9 789.20,274.3 789.54,299.4 789.88,276.8 790.22,280.2 790.56,278.5 790.90,300.4 791.24,279.0 791.58,275.0 791.92,276.1 792.26,277.4 792.60,278.9 792.94,275.5 793.28,276.1 793.62,276.3 793.96,275.6 794.30,286.1 794.64,282.3 794.98,297.5 795.32,273.7 795.66,279.4 796.00,274.0 796.34,285.9 796.68,277.5 797.02,294.9 797.36,282.6 797.70,280.9 798.04,275.6 798.38,281.8 798.72,275.2 799.06,275.4 799.25,357.0 799.40,292.9 799.50,290.0 799.74,279.3 800.08,274.7 800.42,273.6 800.76,276.1 801.10,301.8 801.44,303.1 801.78,275.2 802.12,274.2 802.46,270.0 802.80,276.9 803.14,291.8 803.48,282.0 803.82,283.1 804.16,269.5 804.50,277.4 804.84,268.9 805.18,302.7 805.52,279.9 805.86,278.8 806.20,304.2 806.54,276.2 806.88,292.7 807.22,303.5 807.56,281.4 807.90,278.9 808.24,290.8 808.58,281.8 808.92,282.1 809.26,305.0 809.60,276.7 809.94,275.4 810.28,299.2 810.62,284.7 810.96,282.3 811.30,279.6 811.64,277.0 811.98,280.4 812.32,273.9 812.66,281.5 813.00,289.0 813.34,279.3 813.68,282.0 814.02,272.8 814.36,276.9 814.70,280.8 815.04,283.0 815.38,296.6 815.72,306.4 816.06,271.6 816.40,283.8 816.74,301.9 817.08,279.0 817.42,297.7 817.76,278.5 818.10,303.7 818.44,278.0 818.78,292.4 819.12,288.0 819.46,273.8 819.80,277.8 820.14,289.7 820.48,271.7 820.82,285.5 821.16,284.8 821.50,285.2 821.84,295.2 822.18,296.9 822.52,283.1 822.86,281.5 823.20,281.1 823.54,280.0 823.88,287.5 824.22,280.7 824.56,307.3 824.90,279.1 825.24,275.2 825.58,287.8 825.92,280.5 826.26,281.7 826.60,307.3 826.94,283.5 827.28,282.2 827.62,294.0 827.96,282.4 828.30,280.8 828.64,297.3 828.98,295.6 829.32,294.8 829.66,286.6 830.00,279.9 830.34,290.1 830.68,299.1 831.02,299.1 831.36,280.6 831.70,301.9 832.04,281.4 832.38,283.8 832.72,287.4 833.06,284.7 833.40,292.0 833.74,289.0 834.08,299.7 834.42,283.2 834.76,286.5 835.10,281.5 835.44,289.4 835.78,282.0 836.12,277.6 836.46,275.4 836.80,290.9 837.14,295.3 837.48,291.3 837.82,283.0 838.16,281.8 838.50,290.6 838.84,284.6 839.18,286.5 839.52,290.8 839.86,308.9"/>
<text x="46" y="208" font-size="11" fill="#b4b4b4" text-anchor="start" font-weight="normal" textLength="47" lengthAdjust="spacingAndGlyphs" >20 000 SV</text>
<text x="405.3" y="208" font-size="11" fill="#b4b4b4" text-anchor="end" font-weight="normal" textLength="47" lengthAdjust="spacingAndGlyphs" >20 000 SV</text>
<text x="46" y="248" font-size="11" fill="#b4b4b4" text-anchor="start" font-weight="normal" textLength="47" lengthAdjust="spacingAndGlyphs" >10 000 SV</text>
<text x="405.3" y="248" font-size="11" fill="#b4b4b4" text-anchor="end" font-weight="normal" textLength="47" lengthAdjust="spacingAndGlyphs" >10 000 SV</text>
<text x="46" y="288" font-size="11" fill="#b4b4b4" text-anchor="start" font-weight="normal" textLength="20.6" lengthAdjust="spacingAndGlyphs" >0 SV</text>
<text x="405.3" y="288" font-size="11" fill="#b4b4b4" text-anchor="end" font-weight="normal" textLength="20.6" lengthAdjust="spacingAndGlyphs" >0 SV</text>
<text x="42.9" y="328" font-size="11" fill="#b4b4b4" text-anchor="start" font-weight="normal" textLength="54.5" lengthAdjust="spacingAndGlyphs" >- 10 000 SV</text>
<text x="405.3" y="328" font-size="11" fill="#b4b4b4" text-anchor="end" font-weight="normal" textLength="54.5" lengthAdjust="spacingAndGlyphs" >- 10 000 SV</text>
<text x="477.5" y="204" font-size="11" fill="#b4b4b4" text-anchor="start" font-weight="normal" textLength="41" lengthAdjust="spacingAndGlyphs" >- 40 dBm</text>
<text x="861" y="204" font-size="11" fill="#b4b4b4" text-anchor="end" font-weight="normal" textLength="41" lengthAdjust="spacingAndGlyphs" >- 40 dBm</text>
<text x="477.5" y="244" font-size="11" fill="#b4b4b4" text-anchor="start" font-weight="normal" textLength="41" lengthAdjust="spacingAndGlyphs" >- 60 dBm</text>
<text x="861" y="244" font-size="11" fill="#b4b4b4" text-anchor="end" font-weight="normal" textLength="41" lengthAdjust="spacingAndGlyphs" >- 60 dBm</text>
<text x="477.5" y="284" font-size="11" fill="#b4b4b4" text-anchor="start" font-weight="normal" textLength="41" lengthAdjust="spacingAndGlyphs" >- 80 dBm</text>
<text x="861" y="284" font-size="11" fill="#b4b4b4" text-anchor="end" font-weight="normal" textLength="41" lengthAdjust="spacingAndGlyphs" >- 80 dBm</text>
<text x="477.5" y="324" font-size="11" fill="#b4b4b4" text-anchor="start" font-weight="normal" textLength="46.5" lengthAdjust="spacingAndGlyphs" >- 100 dBm</text>
<text x="861" y="324" font-size="11" fill="#b4b4b4" text-anchor="end" font-weight="normal" textLength="46.5" lengthAdjust="spacingAndGlyphs" >- 100 dBm</text>
<path fill="#200000" d="M80 363h1v273h-1zM82 363h1v273h-1zM84 363h3v273h-3zM88 363h1v273h-1zM90 363h3v273h-3zM359 363h1v273h-1zM361 363h1v273h-1zM364 363h2v273h-2z"/><path fill="#100000" d="M81 363h1v273h-1zM83 363h1v273h-1zM87 363h1v273h-1zM89 363h1v273h-1zM366 363h6v273h-6z"/><path fill="#300000" d="M93 363h9v273h-9zM103 363h1v273h-1zM228 363h2v273h-2zM243 363h1v273h-1zM251 363h1v273h-1zM253 363h1v273h-1zM257 363h1v273h-1zM295 363h1v273h-1zM345 363h1v273h-1zM353 363h1v273h-1zM358 363h1v273h-1zM362 363h2v273h-2z"/><path fill="#400000" d="M102 363h1v273h-1zM104 363h4v273h-4zM109 363h1v273h-1zM111 363h1v273h-1zM200 363h1v273h-1zM218 363h1v273h-1zM285 363h1v273h-1zM287 363h1v273h-1zM293 363h1v273h-1zM325 363h2v273h-2zM334 363h1v273h-1zM340 363h2v273h-2zM346 363h1v273h-1zM348 363h1v273h-1zM352 363h1v273h-1zM356 363h2v273h-2zM360 363h1v273h-1z"/><path fill="#500000" d="M108 363h1v273h-1zM110 363h1v273h-1zM209 363h1v273h-1zM236 363h1v273h-1zM317 363h2v273h-2zM320 363h1v273h-1zM323 363h1v273h-1zM332 363h1v273h-1zM335 363h1v273h-1zM337 363h1v273h-1zM342 363h3v273h-3zM354 363h1v273h-1z"/><path fill="#800000" d="M112 363h1v273h-1zM302 363h1v273h-1zM307 363h1v273h-1z"/><path fill="#900000" d="M113 363h1v273h-1zM301 363h1v273h-1zM304 363h1v273h-1z"/><path fill="#b00000" d="M114 363h1v273h-1zM204 363h1v273h-1zM231 363h1v273h-1zM235 363h1v273h-1zM260 363h1v273h-1zM263 363h1v273h-1zM267 363h1v273h-1zM271 363h1v273h-1zM282 363h2v273h-2zM296 363h1v273h-1z"/><path fill="#c00000" d="M115 363h1v273h-1zM225 363h1v273h-1zM232 363h2v273h-2zM240 363h1v273h-1zM264 363h1v273h-1zM266 363h1v273h-1zM277 363h1v273h-1zM280 363h1v273h-1zM294 363h1v273h-1z"/><path fill="#d00000" d="M116 363h1v273h-1zM234 363h1v273h-1zM241 363h1v273h-1zM248 363h1v273h-1zM273 363h1v273h-1zM278 363h2v273h-2zM281 363h1v273h-1zM298 363h2v273h-2z"/><path fill="#e00000" d="M117 363h1v273h-1zM201 363h1v273h-1zM211 363h2v273h-2zM220 363h1v273h-1zM249 363h2v273h-2zM269 363h1v273h-1zM272 363h1v273h-1zM288 363h1v273h-1zM292 363h1v273h-1z"/><path fill="#ff0000" d="M118 363h5v273h-5zM128 363h3v273h-3zM132 363h1v273h-1zM134 363h8v273h-8zM143 363h4v273h-4zM148 363h4v273h-4zM153 363h3v273h-3zM157 363h9v273h-9zM167 363h3v273h-3zM171 363h4v273h-4zM176 363h7v273h-7zM184 363h4v273h-4zM190 363h3v273h-3zM194 363h6v273h-6zM202 363h2v273h-2zM205 363h4v273h-4zM213 363h3v273h-3zM217 363h1v273h-1zM219 363h1v273h-1zM221 363h2v273h-2zM230 363h1v273h-1zM237 363h1v273h-1zM239 363h1v273h-1zM242 363h1v273h-1zM244 363h1v273h-1zM247 363h1v273h-1zM254 363h1v273h-1zM256 363h1v273h-1zM258 363h1v273h-1zM261 363h1v273h-1zM268 363h1v273h-1zM286 363h1v273h-1zM289 363h1v273h-1zM545 363h48v273h-48z"/><path fill="#0000ff" d="M123 363h5v273h-5z"/><path fill="#2020e0" d="M131 363h1v273h-1zM133 363h1v273h-1zM142 363h1v273h-1zM147 363h1v273h-1zM152 363h1v273h-1zM166 363h1v273h-1zM170 363h1v273h-1zM175 363h1v273h-1zM183 363h1v273h-1zM193 363h1v273h-1z"/><path fill="#600000" d="M156 363h1v273h-1zM188 363h2v273h-2zM210 363h1v273h-1zM223 363h1v273h-1zM227 363h1v273h-1zM252 363h1v273h-1zM265 363h1v273h-1zM274 363h1v273h-1zM284 363h1v273h-1zM290 363h2v273h-2zM300 363h1v273h-1zM305 363h2v273h-2zM308 363h2v273h-2zM311 363h2v273h-2zM315 363h1v273h-1zM319 363h1v273h-1zM324 363h1v273h-1zM327 363h1v273h-1zM329 363h2v273h-2zM333 363h1v273h-1zM336 363h1v273h-1zM338 363h1v273h-1zM349 363h1v273h-1zM351 363h1v273h-1zM355 363h1v273h-1z"/><path fill="#2020a0" d="M216 363h1v273h-1zM262 363h1v273h-1z"/><path fill="#a00000" d="M224 363h1v273h-1zM226 363h1v273h-1zM238 363h1v273h-1zM246 363h1v273h-1zM255 363h1v273h-1zM275 363h2v273h-2zM297 363h1v273h-1z"/><path fill="#700000" d="M245 363h1v273h-1zM259 363h1v273h-1zM270 363h1v273h-1zM303 363h1v273h-1zM310 363h1v273h-1zM313 363h2v273h-2zM316 363h1v273h-1zM321 363h2v273h-2zM328 363h1v273h-1zM331 363h1v273h-1zM339 363h1v273h-1zM347 363h1v273h-1zM350 363h1v273h-1z"/><path fill="#10e8b0" d="M539 363h1v273h-1z"/><path fill="#20ff20" d="M540 363h1v273h-1z"/><path fill="#f0ff00" d="M541 363h1v273h-1zM652 363h1v273h-1z"/><path fill="#ffb000" d="M542 363h1v273h-1zM633 363h4v273h-4z"/><path fill="#ff6000" d="M543 363h1v273h-1zM616 363h4v273h-4z"/><path fill="#ff2800" d="M544 363h1v273h-1z"/><path fill="#ffd800" d="M593 363h1v273h-1z"/><path fill="#ff2000" d="M594 363h2v273h-2zM597 363h1v273h-1zM599 363h2v273h-2z"/><path fill="#ff7000" d="M596 363h1v273h-1z"/><path fill="#ff5000" d="M598 363h1v273h-1zM611 363h5v273h-5z"/><path fill="#ff3000" d="M601 363h5v273h-5z"/><path fill="#ff4000" d="M606 363h5v273h-5z"/><path fill="#ff8000" d="M620 363h1v273h-1zM622 363h1v273h-1z"/><path fill="#c8ff20" d="M621 363h1v273h-1z"/><path fill="#80f000" d="M623 363h1v273h-1z"/><path fill="#ff9000" d="M624 363h3v273h-3z"/><path fill="#ffd000" d="M627 363h1v273h-1zM632 363h1v273h-1zM638 363h3v273h-3z"/><path fill="#ffa000" d="M628 363h4v273h-4z"/><path fill="#ffc000" d="M637 363h1v273h-1z"/><path fill="#ffe000" d="M641 363h3v273h-3z"/><path fill="#c0ff00" d="M644 363h6v273h-6zM666 363h2v273h-2z"/><path fill="#10e010" d="M650 363h1v273h-1z"/><path fill="#90ff00" d="M651 363h1v273h-1zM653 363h1v273h-1zM665 363h1v273h-1zM669 363h1v273h-1zM672 363h1v273h-1zM677 363h1v273h-1zM680 363h1v273h-1zM684 363h1v273h-1zM687 363h1v273h-1zM692 363h1v273h-1zM694 363h1v273h-1zM699 363h1v273h-1z"/><path fill="#e0ff00" d="M654 363h5v273h-5z"/><path fill="#d0ff00" d="M659 363h6v273h-6z"/><path fill="#40ff00" d="M668 363h1v273h-1zM670 363h1v273h-1z"/><path fill="#30ff00" d="M671 363h1v273h-1zM673 363h4v273h-4zM678 363h1v273h-1z"/><path fill="#20ff00" d="M679 363h1v273h-1z"/><path fill="#20ff10" d="M681 363h3v273h-3zM685 363h2v273h-2z"/><path fill="#10ff10" d="M688 363h4v273h-4zM693 363h1v273h-1zM695 363h1v273h-1z"/><path fill="#00ff10" d="M696 363h3v273h-3zM701 363h1v273h-1zM704 363h2v273h-2zM709 363h2v273h-2zM712 363h2v273h-2zM722 363h2v273h-2zM727 363h1v273h-1zM730 363h3v273h-3zM738 363h1v273h-1zM741 363h1v273h-1zM744 363h2v273h-2zM754 363h2v273h-2zM763 363h3v273h-3zM770 363h2v273h-2zM776 363h1v273h-1zM779 363h1v273h-1zM785 363h1v273h-1zM792 363h1v273h-1zM798 363h1v273h-1zM809 363h2v273h-2zM814 363h1v273h-1zM819 363h1v273h-1zM824 363h1v273h-1zM835 363h1v273h-1z"/><path fill="#00ff30" d="M700 363h1v273h-1zM706 363h1v273h-1zM708 363h1v273h-1zM714 363h1v273h-1zM718 363h3v273h-3zM724 363h2v273h-2zM735 363h1v273h-1zM737 363h1v273h-1zM739 363h1v273h-1zM748 363h1v273h-1zM750 363h2v273h-2zM753 363h1v273h-1zM757 363h2v273h-2zM786 363h1v273h-1zM794 363h1v273h-1zM807 363h1v273h-1zM822 363h1v273h-1zM831 363h1v273h-1zM838 363h1v273h-1z"/><path fill="#00ff20" d="M702 363h2v273h-2zM707 363h1v273h-1zM711 363h1v273h-1zM715 363h1v273h-1zM728 363h1v273h-1zM740 363h1v273h-1zM742 363h1v273h-1zM746 363h1v273h-1zM760 363h2v273h-2zM780 363h1v273h-1zM783 363h1v273h-1zM787 363h1v273h-1zM789 363h1v273h-1zM793 363h1v273h-1zM795 363h1v273h-1zM813 363h1v273h-1zM828 363h1v273h-1z"/><path fill="#00ff00" d="M716 363h1v273h-1z"/><path fill="#00ff40" d="M717 363h1v273h-1zM721 363h1v273h-1zM729 363h1v273h-1zM736 363h1v273h-1zM743 363h1v273h-1zM747 363h1v273h-1zM772 363h1v273h-1zM777 363h1v273h-1zM788 363h1v273h-1zM797 363h1v273h-1zM799 363h2v273h-2zM804 363h1v273h-1zM823 363h1v273h-1zM829 363h1v273h-1z"/><path fill="#00ff50" d="M726 363h1v273h-1zM733 363h2v273h-2zM749 363h1v273h-1zM762 363h1v273h-1zM767 363h1v273h-1zM769 363h1v273h-1zM773 363h1v273h-1zM781 363h1v273h-1zM790 363h1v273h-1zM802 363h2v273h-2zM808 363h1v273h-1zM827 363h1v273h-1z"/><path fill="#00ff60" d="M752 363h1v273h-1zM756 363h1v273h-1zM759 363h1v273h-1zM766 363h1v273h-1zM774 363h2v273h-2zM778 363h1v273h-1zM784 363h1v273h-1zM796 363h1v273h-1zM801 363h1v273h-1zM811 363h1v273h-1zM817 363h1v273h-1zM820 363h1v273h-1zM825 363h1v273h-1zM834 363h1v273h-1zM836 363h1v273h-1z"/><path fill="#00ff70" d="M768 363h1v273h-1zM782 363h1v273h-1zM805 363h2v273h-2zM812 363h1v273h-1zM816 363h1v273h-1zM818 363h1v273h-1zM821 363h1v273h-1zM830 363h1v273h-1zM833 363h1v273h-1z"/><path fill="#00ff80" d="M791 363h1v273h-1zM815 363h1v273h-1zM837 363h1v273h-1z"/><path fill="#00ff90" d="M826 363h1v273h-1z"/><path fill="#00ffa0" d="M832 363h1v273h-1z"/><path fill="#300000" d="M80 369h1v3h-1zM81 379h1v6h-1zM81 403h1v4h-1zM81 438h1v4h-1zM81 464h1v6h-1zM81 538h1v6h-1zM81 544h1v4h-1zM81 579h1v5h-1zM81 597h1v5h-1zM82 380h1v8h-1zM82 414h1v4h-1zM82 432h1v3h-1zM82 439h1v5h-1zM82 514h1v6h-1zM82 572h1v3h-1zM83 407h1v4h-1zM83 455h1v8h-1zM83 527h1v3h-1zM84 367h1v3h-1zM84 596h1v4h-1zM85 590h1v5h-1zM86 564h1v3h-1zM86 571h1v5h-1zM86 625h1v6h-1zM87 479h1v5h-1zM87 484h1v5h-1zM87 496h1v3h-1zM87 516h1v8h-1zM87 535h1v4h-1zM87 569h1v3h-1zM87 588h1v5h-1zM88 434h1v4h-1zM88 585h1v5h-1zM89 440h1v4h-1zM89 511h1v5h-1zM89 586h1v8h-1zM90 521h1v5h-1zM90 547h1v6h-1zM90 574h1v6h-1zM90 604h1v4h-1zM90 628h1v3h-1zM91 449h1v3h-1zM91 497h1v8h-1zM91 510h1v3h-1zM91 581h1v6h-1zM92 413h1v5h-1zM92 564h1v8h-1zM92 606h1v6h-1zM93 550h1v3h-1zM94 369h1v8h-1zM94 523h1v4h-1zM95 434h1v8h-1zM95 504h1v5h-1zM95 509h1v5h-1zM95 594h1v3h-1zM96 526h1v8h-1zM97 386h1v3h-1zM97 389h1v8h-1zM97 521h1v3h-1zM99 381h1v4h-1zM99 393h1v5h-1zM99 398h1v4h-1zM99 522h1v6h-1zM99 536h1v4h-1zM100 400h1v5h-1zM100 461h1v3h-1zM100 488h1v8h-1zM101 482h1v8h-1zM101 516h1v8h-1zM101 543h1v3h-1zM102 395h1v3h-1zM102 404h1v3h-1zM102 422h1v4h-1zM102 486h1v3h-1zM102 534h1v4h-1zM102 563h1v3h-1zM102 589h1v5h-1zM102 594h1v3h-1zM102 600h1v8h-1zM103 413h1v5h-1zM103 493h1v3h-1zM103 513h1v6h-1zM104 368h1v6h-1zM104 403h1v8h-1zM104 531h1v5h-1zM104 601h1v6h-1zM104 635h1v1h-1zM105 507h1v8h-1zM105 525h1v5h-1zM106 439h1v3h-1zM106 592h1v3h-1zM107 368h1v4h-1zM107 468h1v6h-1zM107 506h1v4h-1zM108 456h1v3h-1zM108 476h1v5h-1zM108 486h1v8h-1zM108 535h1v4h-1zM108 539h1v3h-1zM108 577h1v3h-1zM109 481h1v8h-1zM109 599h1v4h-1zM110 381h1v6h-1zM110 395h1v6h-1zM110 536h1v8h-1zM110 597h1v6h-1zM111 455h1v6h-1zM111 549h1v3h-1zM111 564h1v6h-1zM111 570h1v3h-1zM111 602h1v5h-1zM111 621h1v8h-1zM200 385h1v8h-1zM200 393h1v6h-1zM200 455h1v6h-1zM200 474h1v6h-1zM200 502h1v4h-1zM200 597h1v3h-1zM209 443h1v8h-1zM209 519h1v8h-1zM210 405h1v5h-1zM210 429h1v3h-1zM210 446h1v6h-1zM210 473h1v6h-1zM210 490h1v5h-1zM210 499h1v5h-1zM210 577h1v3h-1zM210 601h1v8h-1zM218 412h1v8h-1zM218 420h1v6h-1zM218 431h1v3h-1zM223 490h1v3h-1zM223 609h1v4h-1zM223 626h1v3h-1zM227 363h1v3h-1zM227 389h1v8h-1zM227 493h1v4h-1zM227 514h1v5h-1zM227 579h1v6h-1zM228 363h1v3h-1zM228 422h1v8h-1zM228 450h1v3h-1zM228 604h1v5h-1zM228 631h1v5h-1zM229 435h1v5h-1zM229 542h1v4h-1zM229 546h1v4h-1zM229 550h1v4h-1zM236 363h1v6h-1zM236 402h1v8h-1zM236 549h1v8h-1zM245 427h1v4h-1zM245 451h1v8h-1zM251 390h1v4h-1zM251 504h1v8h-1zM251 567h1v4h-1zM251 580h1v3h-1zM251 627h1v4h-1zM252 400h1v3h-1zM253 554h1v3h-1zM253 573h1v5h-1zM257 372h1v5h-1zM257 434h1v3h-1zM257 437h1v5h-1zM257 536h1v3h-1zM257 562h1v5h-1zM259 431h1v5h-1zM259 475h1v8h-1zM259 540h1v6h-1zM259 552h1v5h-1zM265 409h1v6h-1zM265 465h1v4h-1zM265 490h1v8h-1zM265 509h1v5h-1zM265 584h1v5h-1zM265 602h1v6h-1zM270 377h1v8h-1zM270 537h1v3h-1zM270 552h1v8h-1zM274 396h1v8h-1zM274 484h1v3h-1zM274 493h1v4h-1zM274 510h1v4h-1zM284 363h1v6h-1zM284 612h1v8h-1zM285 456h1v6h-1zM285 567h1v5h-1zM285 606h1v3h-1zM287 363h1v3h-1zM287 370h1v6h-1zM287 610h1v8h-1zM287 626h1v8h-1zM290 363h1v3h-1zM290 387h1v4h-1zM290 471h1v5h-1zM290 548h1v8h-1zM290 577h1v4h-1zM291 381h1v5h-1zM291 389h1v3h-1zM291 448h1v6h-1zM291 625h1v6h-1zM293 559h1v4h-1zM293 613h1v5h-1zM295 445h1v3h-1zM295 560h1v8h-1zM295 585h1v3h-1zM300 426h1v3h-1zM300 440h1v5h-1zM300 524h1v8h-1zM300 581h1v6h-1zM300 603h1v5h-1zM305 437h1v6h-1zM305 561h1v4h-1zM305 611h1v6h-1zM306 363h1v6h-1zM306 500h1v5h-1zM306 547h1v4h-1zM306 594h1v4h-1zM308 366h1v5h-1zM308 408h1v6h-1zM308 422h1v5h-1zM308 457h1v3h-1zM308 488h1v6h-1zM308 494h1v4h-1zM308 589h1v5h-1zM309 514h1v6h-1zM309 626h1v3h-1zM311 391h1v5h-1zM311 448h1v3h-1zM311 459h1v8h-1zM311 568h1v8h-1zM312 439h1v5h-1zM312 482h1v3h-1zM312 545h1v5h-1zM312 550h1v4h-1zM312 566h1v4h-1zM312 598h1v8h-1zM313 635h1v1h-1zM314 404h1v3h-1zM314 407h1v3h-1zM315 514h1v5h-1zM315 630h1v4h-1zM317 496h1v3h-1zM318 408h1v3h-1zM318 442h1v3h-1zM318 484h1v3h-1zM318 588h1v4h-1zM319 447h1v6h-1zM319 559h1v6h-1zM319 629h1v3h-1zM320 434h1v6h-1zM320 478h1v5h-1zM321 404h1v5h-1zM321 474h1v3h-1zM321 607h1v3h-1zM323 408h1v8h-1zM323 531h1v4h-1zM323 567h1v8h-1zM323 632h1v4h-1zM324 384h1v3h-1zM324 410h1v3h-1zM324 444h1v6h-1zM324 616h1v3h-1zM325 520h1v3h-1zM326 515h1v8h-1zM326 523h1v3h-1zM327 491h1v6h-1zM327 578h1v5h-1zM327 583h1v5h-1zM328 441h1v6h-1zM328 458h1v6h-1zM328 469h1v5h-1zM328 524h1v4h-1zM329 395h1v8h-1zM329 438h1v4h-1zM329 502h1v6h-1zM329 514h1v4h-1zM329 564h1v3h-1zM330 426h1v8h-1zM330 434h1v3h-1zM330 569h1v8h-1zM331 390h1v4h-1zM332 388h1v8h-1zM332 537h1v8h-1zM332 582h1v8h-1zM332 595h1v8h-1zM333 425h1v8h-1zM333 538h1v3h-1zM333 562h1v8h-1zM333 570h1v3h-1zM334 390h1v6h-1zM334 396h1v3h-1zM334 422h1v4h-1zM334 438h1v5h-1zM334 452h1v3h-1zM334 550h1v4h-1zM334 607h1v4h-1zM336 407h1v6h-1zM336 432h1v6h-1zM337 377h1v3h-1zM337 413h1v5h-1zM337 488h1v5h-1zM337 573h1v5h-1zM337 617h1v6h-1zM338 375h1v5h-1zM338 395h1v3h-1zM338 480h1v4h-1zM338 524h1v3h-1zM339 440h1v8h-1zM340 375h1v4h-1zM340 390h1v3h-1zM340 442h1v8h-1zM340 633h1v3h-1zM341 475h1v3h-1zM341 504h1v8h-1zM341 607h1v3h-1zM342 410h1v4h-1zM342 440h1v3h-1zM342 521h1v6h-1zM342 622h1v3h-1zM343 450h1v5h-1zM343 466h1v5h-1zM343 517h1v4h-1zM343 609h1v4h-1zM344 441h1v6h-1zM344 451h1v8h-1zM344 500h1v5h-1zM344 555h1v8h-1zM344 563h1v6h-1zM344 602h1v5h-1zM345 374h1v4h-1zM345 418h1v4h-1zM345 468h1v6h-1zM345 495h1v6h-1zM345 506h1v8h-1zM345 524h1v6h-1zM346 380h1v8h-1zM348 485h1v8h-1zM348 497h1v4h-1zM348 634h1v2h-1zM349 492h1v5h-1zM349 510h1v8h-1zM349 572h1v3h-1zM350 506h1v3h-1zM350 571h1v4h-1zM351 386h1v4h-1zM351 423h1v6h-1zM351 447h1v8h-1zM352 363h1v5h-1zM352 405h1v4h-1zM352 475h1v6h-1zM352 590h1v5h-1zM352 595h1v4h-1zM353 369h1v8h-1zM353 471h1v8h-1zM353 615h1v4h-1zM354 453h1v5h-1zM354 469h1v3h-1zM354 531h1v4h-1zM354 621h1v8h-1zM355 477h1v3h-1zM355 600h1v3h-1zM356 420h1v5h-1zM356 485h1v5h-1zM356 490h1v3h-1zM356 539h1v6h-1zM357 610h1v5h-1zM358 411h1v6h-1zM358 495h1v4h-1zM358 518h1v8h-1zM359 423h1v5h-1zM359 508h1v3h-1zM359 539h1v6h-1zM360 527h1v3h-1zM361 539h1v3h-1zM361 550h1v6h-1zM363 468h1v5h-1zM363 533h1v5h-1zM363 544h1v4h-1zM364 464h1v6h-1zM364 470h1v8h-1zM364 512h1v6h-1zM364 518h1v4h-1zM364 534h1v8h-1zM365 506h1v8h-1zM365 584h1v3h-1zM365 593h1v5h-1zM365 622h1v8h-1zM365 634h1v2h-1zM366 481h1v5h-1zM366 524h1v6h-1zM367 511h1v6h-1zM367 634h1v2h-1zM368 391h1v4h-1zM368 400h1v4h-1zM368 493h1v8h-1zM368 520h1v5h-1zM368 579h1v4h-1zM368 613h1v3h-1zM368 616h1v6h-1zM369 380h1v4h-1zM369 486h1v3h-1zM369 512h1v4h-1zM369 516h1v8h-1zM369 545h1v8h-1zM370 395h1v8h-1zM370 431h1v6h-1zM370 535h1v5h-1zM370 540h1v5h-1zM370 545h1v5h-1zM371 367h1v8h-1zM371 383h1v5h-1zM371 388h1v3h-1zM371 395h1v5h-1zM371 579h1v4h-1zM371 630h1v6h-1z"/><path fill="#000000" d="M80 384h1v6h-1zM80 488h1v8h-1zM80 564h1v5h-1zM80 580h1v5h-1zM80 599h1v6h-1zM81 457h1v3h-1zM81 499h1v3h-1zM81 515h1v4h-1zM81 535h1v3h-1zM81 561h1v6h-1zM81 602h1v3h-1zM81 605h1v8h-1zM82 461h1v3h-1zM82 548h1v8h-1zM82 630h1v6h-1zM83 369h1v8h-1zM83 377h1v8h-1zM83 423h1v5h-1zM83 467h1v3h-1zM84 392h1v6h-1zM84 414h1v6h-1zM84 434h1v5h-1zM85 363h1v8h-1zM85 456h1v3h-1zM85 609h1v5h-1zM86 371h1v5h-1zM86 394h1v6h-1zM86 435h1v4h-1zM86 582h1v3h-1zM86 596h1v8h-1zM87 374h1v3h-1zM87 394h1v4h-1zM87 401h1v8h-1zM87 445h1v6h-1zM87 459h1v3h-1zM87 468h1v5h-1zM87 505h1v5h-1zM87 577h1v8h-1zM87 593h1v8h-1zM87 624h1v6h-1zM88 376h1v4h-1zM88 390h1v4h-1zM88 402h1v5h-1zM88 416h1v4h-1zM88 450h1v4h-1zM88 454h1v3h-1zM88 471h1v3h-1zM88 474h1v5h-1zM88 488h1v6h-1zM88 504h1v3h-1zM88 580h1v5h-1zM88 621h1v8h-1zM89 397h1v4h-1zM89 426h1v5h-1zM89 459h1v6h-1zM89 465h1v3h-1zM89 476h1v3h-1zM89 502h1v6h-1zM89 520h1v6h-1zM89 558h1v8h-1zM89 597h1v6h-1zM90 386h1v3h-1zM90 490h1v8h-1zM90 504h1v3h-1zM90 507h1v4h-1zM90 531h1v3h-1zM91 369h1v4h-1zM91 373h1v5h-1zM91 400h1v5h-1zM91 405h1v8h-1zM91 440h1v3h-1zM91 531h1v6h-1zM91 543h1v5h-1zM91 548h1v8h-1zM91 616h1v6h-1zM92 363h1v5h-1zM92 383h1v5h-1zM92 479h1v5h-1zM92 489h1v3h-1zM92 572h1v6h-1zM92 578h1v3h-1zM93 394h1v5h-1zM93 446h1v3h-1zM93 466h1v4h-1zM93 545h1v5h-1zM93 583h1v8h-1zM94 447h1v6h-1zM94 486h1v6h-1zM94 495h1v4h-1zM94 537h1v5h-1zM94 545h1v4h-1zM94 563h1v6h-1zM95 605h1v8h-1zM95 616h1v8h-1zM96 518h1v8h-1zM96 577h1v4h-1zM97 377h1v5h-1zM97 382h1v4h-1zM97 439h1v8h-1zM97 470h1v6h-1zM97 490h1v8h-1zM97 502h1v3h-1zM97 512h1v4h-1zM97 528h1v3h-1zM97 546h1v6h-1zM97 563h1v6h-1zM97 581h1v6h-1zM97 621h1v4h-1zM98 434h1v8h-1zM98 529h1v3h-1zM98 583h1v6h-1zM99 376h1v5h-1zM99 514h1v3h-1zM100 550h1v5h-1zM100 601h1v6h-1zM101 447h1v6h-1zM101 464h1v6h-1zM101 546h1v3h-1zM101 549h1v5h-1zM101 554h1v6h-1zM101 560h1v6h-1zM101 566h1v6h-1zM102 369h1v6h-1zM102 441h1v4h-1zM102 518h1v8h-1zM102 559h1v4h-1zM103 464h1v8h-1zM103 598h1v4h-1zM104 549h1v3h-1zM104 593h1v8h-1zM105 623h1v5h-1zM106 419h1v8h-1zM106 432h1v4h-1zM107 461h1v3h-1zM107 483h1v6h-1zM109 456h1v5h-1zM109 461h1v8h-1zM109 477h1v4h-1zM109 534h1v6h-1zM109 560h1v4h-1zM111 487h1v8h-1zM111 573h1v4h-1zM218 469h1v3h-1zM218 521h1v3h-1zM228 484h1v4h-1zM228 519h1v3h-1zM228 555h1v3h-1zM229 452h1v8h-1zM229 468h1v3h-1zM243 383h1v5h-1zM243 430h1v5h-1zM243 498h1v3h-1zM243 571h1v5h-1zM251 457h1v4h-1zM251 479h1v8h-1zM251 522h1v8h-1zM251 571h1v6h-1zM251 595h1v5h-1zM253 587h1v3h-1zM253 613h1v8h-1zM257 615h1v3h-1zM287 366h1v4h-1zM287 419h1v3h-1zM287 445h1v3h-1zM287 539h1v5h-1zM287 551h1v4h-1zM287 597h1v5h-1zM293 542h1v5h-1zM295 469h1v3h-1zM295 501h1v8h-1zM332 453h1v6h-1zM334 455h1v4h-1zM334 512h1v6h-1zM334 539h1v3h-1zM341 528h1v6h-1zM341 574h1v6h-1zM346 439h1v8h-1zM346 480h1v4h-1zM346 499h1v8h-1zM346 623h1v5h-1zM348 611h1v4h-1zM353 441h1v4h-1zM353 445h1v6h-1zM353 508h1v5h-1zM353 517h1v8h-1zM356 367h1v8h-1zM356 390h1v6h-1zM356 502h1v6h-1zM357 514h1v6h-1zM358 436h1v5h-1zM358 452h1v8h-1zM358 473h1v4h-1zM358 483h1v8h-1zM358 535h1v4h-1zM359 385h1v3h-1zM359 536h1v3h-1zM359 550h1v6h-1zM360 363h1v8h-1zM360 454h1v3h-1zM361 363h1v3h-1zM361 386h1v3h-1zM361 435h1v8h-1zM361 458h1v3h-1zM361 483h1v8h-1zM361 504h1v8h-1zM361 512h1v6h-1zM361 580h1v5h-1zM361 628h1v5h-1zM362 499h1v3h-1zM363 390h1v5h-1zM363 525h1v8h-1zM363 554h1v3h-1zM363 620h1v6h-1zM363 626h1v4h-1zM364 460h1v4h-1zM364 507h1v5h-1zM365 363h1v6h-1zM365 375h1v8h-1zM365 391h1v4h-1zM365 400h1v4h-1zM365 404h1v4h-1zM365 434h1v6h-1zM365 453h1v8h-1zM365 566h1v6h-1zM365 578h1v6h-1zM366 373h1v5h-1zM366 513h1v6h-1zM366 538h1v6h-1zM366 606h1v8h-1zM367 400h1v5h-1zM367 429h1v3h-1zM367 446h1v4h-1zM367 606h1v6h-1zM368 363h1v6h-1zM368 409h1v6h-1zM368 415h1v6h-1zM368 504h1v8h-1zM368 555h1v6h-1zM368 573h1v3h-1zM368 630h1v3h-1zM368 633h1v3h-1zM369 369h1v5h-1zM369 405h1v4h-1zM369 431h1v6h-1zM369 489h1v8h-1zM369 530h1v4h-1zM369 571h1v3h-1zM370 363h1v4h-1zM370 493h1v5h-1zM370 515h1v3h-1zM370 582h1v3h-1zM370 596h1v3h-1zM371 391h1v4h-1zM371 406h1v6h-1zM371 412h1v5h-1zM371 417h1v4h-1zM371 446h1v5h-1zM371 451h1v5h-1zM371 497h1v6h-1zM371 527h1v6h-1zM371 545h1v8h-1zM371 611h1v6h-1zM371 617h1v5h-1z"/><path fill="#480000" d="M80 425h1v3h-1zM80 551h1v5h-1zM80 577h1v3h-1zM80 609h1v3h-1zM80 615h1v6h-1zM82 371h1v3h-1zM82 476h1v4h-1zM82 531h1v6h-1zM82 556h1v8h-1zM83 396h1v5h-1zM83 558h1v6h-1zM84 388h1v4h-1zM84 477h1v3h-1zM85 383h1v8h-1zM85 416h1v3h-1zM85 532h1v8h-1zM85 567h1v6h-1zM86 388h1v6h-1zM86 444h1v3h-1zM86 519h1v3h-1zM86 529h1v6h-1zM86 621h1v4h-1zM87 442h1v3h-1zM88 372h1v4h-1zM88 461h1v5h-1zM88 538h1v6h-1zM89 378h1v3h-1zM89 393h1v4h-1zM89 420h1v6h-1zM90 474h1v8h-1zM90 537h1v5h-1zM90 571h1v3h-1zM90 600h1v4h-1zM91 484h1v5h-1zM91 513h1v3h-1zM92 589h1v5h-1zM92 628h1v8h-1zM93 379h1v4h-1zM93 600h1v6h-1zM94 461h1v5h-1zM95 462h1v3h-1zM95 484h1v3h-1zM95 591h1v3h-1zM96 608h1v3h-1zM96 611h1v6h-1zM97 363h1v6h-1zM97 414h1v3h-1zM97 433h1v3h-1zM97 505h1v3h-1zM97 536h1v5h-1zM97 587h1v6h-1zM98 369h1v3h-1zM98 560h1v6h-1zM98 570h1v5h-1zM99 437h1v6h-1zM99 543h1v8h-1zM99 564h1v8h-1zM99 605h1v6h-1zM99 629h1v5h-1zM99 634h1v2h-1zM100 380h1v8h-1zM100 388h1v4h-1zM100 485h1v3h-1zM100 525h1v3h-1zM100 589h1v4h-1zM100 593h1v8h-1zM100 635h1v1h-1zM101 406h1v5h-1zM101 431h1v4h-1zM101 459h1v5h-1zM101 539h1v4h-1zM101 572h1v3h-1zM102 453h1v4h-1zM102 460h1v5h-1zM103 399h1v8h-1zM103 442h1v6h-1zM103 562h1v3h-1zM104 440h1v6h-1zM105 379h1v6h-1zM105 521h1v4h-1zM105 551h1v3h-1zM106 400h1v4h-1zM106 436h1v3h-1zM106 516h1v3h-1zM107 394h1v4h-1zM107 552h1v3h-1zM107 570h1v4h-1zM108 389h1v4h-1zM108 427h1v5h-1zM108 471h1v5h-1zM108 527h1v8h-1zM108 562h1v3h-1zM108 580h1v6h-1zM108 609h1v6h-1zM108 624h1v6h-1zM109 518h1v6h-1zM109 589h1v4h-1zM109 610h1v6h-1zM110 363h1v8h-1zM110 424h1v5h-1zM110 460h1v5h-1zM110 544h1v8h-1zM111 392h1v8h-1zM111 447h1v8h-1zM112 382h1v8h-1zM112 395h1v6h-1zM200 416h1v3h-1zM200 467h1v3h-1zM200 489h1v6h-1zM200 539h1v3h-1zM200 568h1v3h-1zM209 460h1v3h-1zM209 485h1v8h-1zM209 499h1v4h-1zM209 527h1v6h-1zM209 574h1v6h-1zM209 589h1v5h-1zM210 432h1v8h-1zM210 457h1v8h-1zM210 634h1v2h-1zM223 367h1v4h-1zM223 382h1v6h-1zM223 428h1v4h-1zM223 541h1v3h-1zM223 577h1v3h-1zM227 372h1v3h-1zM227 375h1v4h-1zM227 432h1v5h-1zM227 441h1v3h-1zM227 444h1v8h-1zM227 468h1v6h-1zM227 490h1v3h-1zM227 625h1v5h-1zM228 400h1v6h-1zM228 566h1v8h-1zM229 430h1v5h-1zM229 603h1v8h-1zM236 419h1v3h-1zM236 422h1v6h-1zM236 585h1v4h-1zM243 388h1v5h-1zM243 401h1v8h-1zM243 435h1v4h-1zM243 490h1v8h-1zM245 400h1v6h-1zM245 471h1v8h-1zM245 496h1v5h-1zM245 550h1v6h-1zM251 408h1v6h-1zM251 448h1v3h-1zM251 492h1v6h-1zM252 421h1v5h-1zM252 524h1v4h-1zM252 580h1v6h-1zM253 521h1v4h-1zM253 578h1v3h-1zM257 396h1v8h-1zM257 451h1v4h-1zM257 463h1v5h-1zM257 567h1v8h-1zM259 386h1v4h-1zM259 402h1v8h-1zM259 466h1v4h-1zM259 519h1v5h-1zM259 532h1v4h-1zM259 572h1v6h-1zM265 374h1v6h-1zM265 616h1v5h-1zM270 397h1v4h-1zM270 405h1v6h-1zM270 629h1v4h-1zM274 385h1v5h-1zM274 390h1v6h-1zM274 418h1v8h-1zM284 369h1v8h-1zM284 389h1v8h-1zM284 407h1v5h-1zM284 421h1v6h-1zM284 488h1v5h-1zM285 374h1v8h-1zM285 382h1v3h-1zM285 503h1v3h-1zM285 512h1v6h-1zM287 380h1v5h-1zM287 385h1v8h-1zM287 555h1v3h-1zM290 429h1v4h-1zM290 483h1v4h-1zM290 495h1v8h-1zM290 609h1v6h-1zM290 631h1v5h-1zM291 515h1v8h-1zM291 580h1v4h-1zM291 604h1v8h-1zM293 547h1v3h-1zM293 574h1v8h-1zM295 367h1v3h-1zM295 405h1v5h-1zM295 568h1v6h-1zM295 633h1v3h-1zM300 418h1v8h-1zM300 463h1v8h-1zM301 369h1v8h-1zM302 409h1v5h-1zM303 388h1v4h-1zM304 519h1v3h-1zM305 422h1v3h-1zM305 464h1v8h-1zM305 516h1v5h-1zM305 521h1v6h-1zM305 539h1v5h-1zM305 577h1v5h-1zM306 446h1v5h-1zM306 509h1v8h-1zM307 376h1v8h-1zM307 453h1v6h-1zM307 620h1v3h-1zM307 630h1v5h-1zM308 460h1v4h-1zM308 480h1v4h-1zM308 559h1v8h-1zM308 597h1v8h-1zM309 493h1v4h-1zM309 545h1v3h-1zM309 602h1v8h-1zM310 509h1v5h-1zM310 571h1v6h-1zM311 382h1v4h-1zM311 405h1v5h-1zM311 467h1v8h-1zM311 540h1v5h-1zM311 592h1v5h-1zM311 635h1v1h-1zM312 388h1v3h-1zM312 444h1v8h-1zM312 460h1v8h-1zM312 534h1v5h-1zM312 587h1v8h-1zM313 372h1v8h-1zM313 407h1v5h-1zM313 447h1v6h-1zM313 554h1v5h-1zM314 414h1v4h-1zM314 433h1v4h-1zM315 367h1v6h-1zM315 438h1v8h-1zM315 493h1v3h-1zM315 501h1v5h-1zM315 519h1v4h-1zM315 580h1v3h-1zM315 608h1v6h-1zM316 598h1v8h-1zM317 399h1v6h-1zM317 445h1v8h-1zM318 363h1v8h-1zM318 503h1v5h-1zM318 630h1v4h-1zM319 479h1v8h-1zM319 522h1v6h-1zM319 573h1v6h-1zM319 635h1v1h-1zM320 528h1v5h-1zM321 379h1v6h-1zM322 587h1v8h-1zM323 375h1v8h-1zM323 386h1v5h-1zM323 398h1v5h-1zM323 581h1v4h-1zM324 430h1v6h-1zM325 391h1v4h-1zM325 416h1v8h-1zM325 512h1v8h-1zM325 572h1v4h-1zM326 419h1v8h-1zM326 438h1v4h-1zM326 477h1v3h-1zM326 492h1v8h-1zM326 592h1v5h-1zM326 622h1v5h-1zM327 602h1v4h-1zM327 610h1v5h-1zM327 627h1v3h-1zM328 387h1v4h-1zM328 396h1v5h-1zM328 567h1v5h-1zM329 470h1v5h-1zM329 561h1v3h-1zM329 595h1v8h-1zM330 514h1v8h-1zM330 534h1v4h-1zM330 594h1v8h-1zM330 628h1v4h-1zM331 370h1v4h-1zM331 478h1v6h-1zM332 425h1v4h-1zM332 495h1v5h-1zM332 510h1v4h-1zM332 559h1v4h-1zM332 603h1v4h-1zM332 622h1v5h-1zM333 414h1v6h-1zM333 477h1v4h-1zM334 407h1v4h-1zM334 459h1v8h-1zM334 528h1v3h-1zM334 554h1v4h-1zM335 371h1v5h-1zM335 444h1v5h-1zM335 458h1v3h-1zM335 573h1v8h-1zM336 519h1v4h-1zM336 523h1v3h-1zM336 526h1v4h-1zM336 620h1v8h-1zM337 447h1v6h-1zM337 466h1v4h-1zM337 478h1v5h-1zM337 499h1v5h-1zM337 601h1v8h-1zM337 635h1v1h-1zM338 428h1v4h-1zM338 514h1v6h-1zM338 616h1v8h-1zM339 374h1v8h-1zM339 482h1v3h-1zM339 511h1v3h-1zM339 566h1v8h-1zM339 593h1v4h-1zM340 379h1v6h-1zM340 421h1v6h-1zM340 438h1v4h-1zM340 593h1v8h-1zM341 422h1v8h-1zM341 619h1v8h-1zM341 632h1v3h-1zM342 499h1v8h-1zM342 608h1v3h-1zM343 387h1v5h-1zM343 444h1v6h-1zM343 507h1v4h-1zM343 545h1v3h-1zM343 560h1v3h-1zM344 386h1v8h-1zM344 528h1v8h-1zM344 544h1v8h-1zM344 597h1v5h-1zM344 619h1v5h-1zM345 474h1v5h-1zM345 487h1v8h-1zM345 544h1v8h-1zM346 402h1v6h-1zM346 453h1v8h-1zM346 507h1v6h-1zM346 530h1v8h-1zM346 594h1v5h-1zM347 415h1v8h-1zM347 546h1v6h-1zM347 621h1v6h-1zM349 420h1v8h-1zM349 489h1v3h-1zM349 497h1v4h-1zM349 575h1v6h-1zM350 403h1v4h-1zM350 427h1v8h-1zM350 633h1v3h-1zM351 398h1v3h-1zM351 433h1v8h-1zM351 546h1v4h-1zM351 584h1v6h-1zM352 526h1v4h-1zM353 394h1v4h-1zM353 427h1v5h-1zM353 432h1v3h-1zM353 525h1v4h-1zM353 572h1v8h-1zM353 605h1v6h-1zM354 385h1v4h-1zM354 447h1v6h-1zM354 511h1v8h-1zM354 592h1v8h-1zM355 383h1v6h-1zM355 465h1v6h-1zM355 471h1v3h-1zM355 517h1v8h-1zM355 570h1v8h-1zM356 446h1v5h-1zM356 508h1v3h-1zM356 511h1v5h-1zM356 554h1v4h-1zM356 630h1v3h-1zM357 430h1v6h-1zM357 602h1v8h-1zM359 366h1v8h-1zM359 522h1v3h-1zM359 609h1v3h-1zM360 386h1v3h-1zM360 400h1v3h-1zM360 589h1v4h-1zM360 600h1v6h-1zM361 454h1v4h-1zM361 526h1v4h-1zM361 574h1v6h-1zM361 633h1v3h-1zM362 464h1v8h-1zM362 599h1v6h-1zM363 447h1v8h-1zM363 491h1v5h-1zM363 496h1v5h-1zM363 521h1v4h-1zM363 560h1v4h-1zM363 564h1v6h-1zM363 586h1v3h-1zM364 548h1v3h-1zM364 572h1v4h-1zM364 597h1v8h-1zM365 490h1v8h-1zM366 378h1v8h-1zM366 407h1v6h-1zM366 426h1v4h-1zM366 578h1v8h-1zM366 601h1v5h-1zM367 432h1v4h-1zM367 462h1v6h-1zM367 582h1v5h-1zM367 592h1v6h-1zM368 369h1v8h-1zM368 512h1v8h-1zM368 538h1v6h-1zM368 550h1v5h-1zM368 567h1v6h-1zM368 583h1v3h-1zM369 553h1v8h-1zM370 602h1v3h-1zM370 634h1v2h-1zM371 503h1v8h-1z"/><path fill="#180000" d="M80 485h1v3h-1zM80 532h1v4h-1zM81 523h1v5h-1zM81 551h1v6h-1zM81 567h1v8h-1zM82 411h1v3h-1zM82 488h1v6h-1zM82 580h1v4h-1zM82 584h1v8h-1zM83 564h1v5h-1zM83 577h1v6h-1zM83 588h1v4h-1zM84 560h1v5h-1zM85 391h1v5h-1zM85 400h1v8h-1zM85 459h1v8h-1zM85 472h1v8h-1zM85 499h1v5h-1zM85 573h1v8h-1zM86 418h1v3h-1zM86 511h1v4h-1zM86 550h1v5h-1zM87 510h1v6h-1zM88 516h1v8h-1zM88 544h1v8h-1zM88 560h1v4h-1zM88 576h1v4h-1zM89 411h1v4h-1zM89 539h1v6h-1zM91 489h1v8h-1zM91 592h1v3h-1zM92 424h1v5h-1zM92 495h1v3h-1zM92 541h1v8h-1zM92 552h1v4h-1zM93 399h1v8h-1zM93 415h1v4h-1zM93 430h1v8h-1zM93 533h1v4h-1zM94 542h1v3h-1zM94 549h1v4h-1zM94 603h1v8h-1zM95 363h1v6h-1zM95 499h1v5h-1zM96 379h1v6h-1zM96 482h1v6h-1zM96 506h1v8h-1zM97 447h1v4h-1zM97 541h1v5h-1zM97 600h1v3h-1zM97 616h1v5h-1zM98 448h1v4h-1zM98 477h1v8h-1zM99 410h1v3h-1zM99 413h1v8h-1zM99 421h1v4h-1zM99 473h1v3h-1zM99 517h1v5h-1zM100 363h1v3h-1zM100 411h1v3h-1zM101 387h1v3h-1zM101 503h1v8h-1zM102 538h1v8h-1zM102 546h1v8h-1zM102 612h1v6h-1zM103 384h1v5h-1zM103 394h1v5h-1zM103 418h1v8h-1zM104 393h1v4h-1zM104 519h1v8h-1zM104 527h1v4h-1zM105 576h1v6h-1zM105 596h1v3h-1zM106 404h1v3h-1zM106 451h1v3h-1zM106 474h1v3h-1zM106 477h1v3h-1zM106 510h1v6h-1zM106 548h1v8h-1zM109 419h1v3h-1zM109 568h1v3h-1zM111 379h1v8h-1zM111 417h1v8h-1zM111 444h1v3h-1zM111 507h1v5h-1zM111 529h1v5h-1zM111 577h1v4h-1zM200 377h1v4h-1zM200 403h1v8h-1zM200 485h1v4h-1zM200 495h1v3h-1zM200 536h1v3h-1zM200 632h1v3h-1zM200 635h1v1h-1zM209 399h1v8h-1zM209 616h1v5h-1zM218 507h1v4h-1zM218 590h1v3h-1zM218 627h1v6h-1zM228 430h1v8h-1zM229 476h1v3h-1zM229 588h1v6h-1zM236 372h1v4h-1zM236 474h1v6h-1zM236 489h1v4h-1zM236 509h1v3h-1zM243 459h1v3h-1zM243 466h1v8h-1zM243 565h1v6h-1zM243 576h1v8h-1zM243 584h1v5h-1zM243 632h1v4h-1zM251 451h1v6h-1zM251 517h1v5h-1zM253 363h1v6h-1zM253 376h1v5h-1zM253 414h1v5h-1zM253 469h1v3h-1zM253 472h1v6h-1zM257 367h1v5h-1zM257 476h1v8h-1zM257 510h1v4h-1zM257 635h1v1h-1zM265 380h1v5h-1zM285 420h1v5h-1zM285 524h1v4h-1zM285 533h1v8h-1zM285 633h1v3h-1zM287 508h1v8h-1zM287 531h1v8h-1zM287 569h1v5h-1zM290 525h1v4h-1zM290 543h1v5h-1zM295 394h1v3h-1zM295 598h1v8h-1zM295 624h1v4h-1zM312 435h1v4h-1zM315 381h1v8h-1zM315 483h1v3h-1zM315 523h1v4h-1zM317 595h1v3h-1zM317 634h1v2h-1zM318 438h1v4h-1zM318 511h1v3h-1zM319 369h1v8h-1zM320 483h1v3h-1zM320 486h1v4h-1zM320 502h1v6h-1zM320 508h1v6h-1zM320 549h1v6h-1zM320 577h1v5h-1zM323 487h1v8h-1zM323 612h1v8h-1zM325 363h1v8h-1zM325 429h1v8h-1zM325 589h1v6h-1zM325 623h1v5h-1zM326 399h1v6h-1zM326 405h1v3h-1zM326 457h1v3h-1zM326 576h1v4h-1zM330 445h1v4h-1zM332 363h1v8h-1zM332 506h1v4h-1zM333 557h1v5h-1zM334 467h1v3h-1zM334 488h1v3h-1zM335 455h1v3h-1zM335 471h1v6h-1zM335 594h1v4h-1zM335 628h1v4h-1zM336 580h1v6h-1zM337 387h1v8h-1zM337 458h1v8h-1zM337 470h1v8h-1zM338 579h1v4h-1zM340 401h1v3h-1zM340 404h1v4h-1zM340 466h1v8h-1zM340 584h1v4h-1zM341 383h1v5h-1zM341 409h1v5h-1zM341 534h1v8h-1zM341 555h1v6h-1zM341 627h1v5h-1zM342 401h1v4h-1zM342 417h1v5h-1zM342 432h1v4h-1zM342 538h1v6h-1zM342 544h1v8h-1zM342 611h1v6h-1zM344 459h1v4h-1zM345 564h1v5h-1zM345 587h1v6h-1zM346 495h1v4h-1zM346 565h1v8h-1zM346 576h1v8h-1zM348 368h1v6h-1zM348 383h1v8h-1zM348 412h1v6h-1zM348 520h1v3h-1zM348 556h1v6h-1zM352 447h1v5h-1zM352 538h1v3h-1zM353 551h1v4h-1zM353 599h1v6h-1zM353 626h1v6h-1zM356 384h1v6h-1zM356 531h1v3h-1zM356 608h1v4h-1zM357 363h1v8h-1zM357 402h1v3h-1zM357 405h1v3h-1zM357 465h1v5h-1zM357 470h1v4h-1zM357 554h1v4h-1zM357 558h1v6h-1zM357 633h1v3h-1zM358 431h1v5h-1zM359 428h1v8h-1zM359 528h1v8h-1zM359 582h1v8h-1zM359 598h1v3h-1zM359 612h1v3h-1zM360 376h1v6h-1zM360 585h1v4h-1zM362 530h1v8h-1zM362 608h1v4h-1zM363 488h1v3h-1zM363 575h1v5h-1zM363 580h1v6h-1zM364 363h1v4h-1zM364 367h1v5h-1zM364 486h1v8h-1zM364 561h1v6h-1zM364 609h1v5h-1zM366 418h1v8h-1zM366 433h1v5h-1zM367 408h1v8h-1zM367 497h1v4h-1zM367 555h1v5h-1zM368 383h1v8h-1zM369 453h1v6h-1zM369 574h1v8h-1zM369 591h1v3h-1zM370 474h1v8h-1zM370 525h1v3h-1zM370 528h1v3h-1zM370 627h1v3h-1z"/><path fill="#600000" d="M85 444h1v4h-1zM94 412h1v5h-1zM94 469h1v8h-1zM94 572h1v4h-1zM95 401h1v8h-1zM95 409h1v4h-1zM95 560h1v5h-1zM95 628h1v4h-1zM95 632h1v4h-1zM96 550h1v3h-1zM96 585h1v4h-1zM97 369h1v8h-1zM97 575h1v6h-1zM97 603h1v3h-1zM98 597h1v5h-1zM99 490h1v6h-1zM100 506h1v4h-1zM101 453h1v6h-1zM102 363h1v6h-1zM102 495h1v6h-1zM102 577h1v3h-1zM102 608h1v4h-1zM103 430h1v8h-1zM103 540h1v6h-1zM104 426h1v8h-1zM104 451h1v4h-1zM104 552h1v6h-1zM104 607h1v3h-1zM105 408h1v5h-1zM105 515h1v3h-1zM105 628h1v5h-1zM106 396h1v4h-1zM106 480h1v5h-1zM106 556h1v6h-1zM106 570h1v8h-1zM106 614h1v3h-1zM107 535h1v3h-1zM107 546h1v6h-1zM107 585h1v6h-1zM108 418h1v5h-1zM108 542h1v4h-1zM108 546h1v4h-1zM108 571h1v6h-1zM108 615h1v6h-1zM109 370h1v4h-1zM109 382h1v8h-1zM110 457h1v3h-1zM110 474h1v4h-1zM110 486h1v8h-1zM110 585h1v4h-1zM110 603h1v5h-1zM111 369h1v4h-1zM111 406h1v3h-1zM111 474h1v5h-1zM111 512h1v3h-1zM112 605h1v8h-1zM113 431h1v6h-1zM113 508h1v8h-1zM113 574h1v5h-1zM113 609h1v5h-1zM200 443h1v4h-1zM200 461h1v6h-1zM200 498h1v4h-1zM209 386h1v5h-1zM209 412h1v3h-1zM209 580h1v3h-1zM209 634h1v2h-1zM210 524h1v3h-1zM218 434h1v4h-1zM218 499h1v8h-1zM218 517h1v4h-1zM218 579h1v3h-1zM218 598h1v3h-1zM223 464h1v3h-1zM223 485h1v5h-1zM223 509h1v8h-1zM223 548h1v6h-1zM223 613h1v8h-1zM224 409h1v3h-1zM224 558h1v4h-1zM227 416h1v3h-1zM227 452h1v8h-1zM227 540h1v8h-1zM227 607h1v4h-1zM228 545h1v6h-1zM229 382h1v6h-1zM229 471h1v5h-1zM229 534h1v4h-1zM236 376h1v5h-1zM236 436h1v4h-1zM236 535h1v8h-1zM238 463h1v6h-1zM245 369h1v3h-1zM245 391h1v5h-1zM245 406h1v6h-1zM245 440h1v3h-1zM245 463h1v8h-1zM245 569h1v3h-1zM245 588h1v4h-1zM245 631h1v3h-1zM246 416h1v4h-1zM251 375h1v3h-1zM251 552h1v3h-1zM252 374h1v8h-1zM252 454h1v8h-1zM252 586h1v5h-1zM252 591h1v5h-1zM252 610h1v3h-1zM253 444h1v6h-1zM253 450h1v3h-1zM253 453h1v8h-1zM253 478h1v3h-1zM253 489h1v6h-1zM253 635h1v1h-1zM255 388h1v3h-1zM255 583h1v4h-1zM257 363h1v4h-1zM257 412h1v4h-1zM259 372h1v5h-1zM259 436h1v5h-1zM265 454h1v5h-1zM265 560h1v6h-1zM270 401h1v4h-1zM270 449h1v4h-1zM270 570h1v4h-1zM270 591h1v8h-1zM274 478h1v6h-1zM275 366h1v4h-1zM275 411h1v4h-1zM276 423h1v4h-1zM276 466h1v5h-1zM276 504h1v6h-1zM284 442h1v6h-1zM284 512h1v8h-1zM284 573h1v6h-1zM285 363h1v6h-1zM285 563h1v4h-1zM287 427h1v6h-1zM287 464h1v6h-1zM290 511h1v3h-1zM290 574h1v3h-1zM290 623h1v4h-1zM293 481h1v8h-1zM293 493h1v8h-1zM295 414h1v6h-1zM295 534h1v4h-1zM297 631h1v4h-1zM300 435h1v5h-1zM300 492h1v8h-1zM300 556h1v6h-1zM300 600h1v3h-1zM300 613h1v4h-1zM300 623h1v5h-1zM300 634h1v2h-1zM301 382h1v6h-1zM302 420h1v3h-1zM302 489h1v8h-1zM302 542h1v4h-1zM302 573h1v4h-1zM302 581h1v3h-1zM303 464h1v4h-1zM303 485h1v3h-1zM303 557h1v6h-1zM303 630h1v3h-1zM305 394h1v5h-1zM305 451h1v8h-1zM305 572h1v5h-1zM305 582h1v8h-1zM306 385h1v3h-1zM306 396h1v3h-1zM306 491h1v4h-1zM306 542h1v5h-1zM306 565h1v5h-1zM307 363h1v3h-1zM307 494h1v6h-1zM307 604h1v5h-1zM308 567h1v3h-1zM309 416h1v5h-1zM309 453h1v3h-1zM309 540h1v5h-1zM310 592h1v3h-1zM310 635h1v1h-1zM311 363h1v5h-1zM311 479h1v6h-1zM311 563h1v5h-1zM311 583h1v3h-1zM312 401h1v4h-1zM312 412h1v6h-1zM312 570h1v6h-1zM312 611h1v5h-1zM312 624h1v3h-1zM312 632h1v4h-1zM313 431h1v3h-1zM313 582h1v4h-1zM314 369h1v8h-1zM314 385h1v8h-1zM314 410h1v4h-1zM314 437h1v3h-1zM315 389h1v6h-1zM315 457h1v3h-1zM315 466h1v5h-1zM315 634h1v2h-1zM316 417h1v6h-1zM316 449h1v8h-1zM316 514h1v5h-1zM316 522h1v5h-1zM316 570h1v6h-1zM316 606h1v6h-1zM317 383h1v8h-1zM317 416h1v4h-1zM317 428h1v6h-1zM317 526h1v5h-1zM318 393h1v3h-1zM318 472h1v4h-1zM319 396h1v4h-1zM319 427h1v4h-1zM319 453h1v8h-1zM319 466h1v5h-1zM320 471h1v4h-1zM321 368h1v6h-1zM321 519h1v5h-1zM321 576h1v6h-1zM322 366h1v6h-1zM322 568h1v4h-1zM322 598h1v5h-1zM323 563h1v4h-1zM324 402h1v8h-1zM324 499h1v8h-1zM324 510h1v5h-1zM324 619h1v3h-1zM324 622h1v4h-1zM326 371h1v8h-1zM326 442h1v6h-1zM326 460h1v5h-1zM326 540h1v4h-1zM327 399h1v8h-1zM327 448h1v4h-1zM327 452h1v3h-1zM327 588h1v6h-1zM328 591h1v6h-1zM328 602h1v6h-1zM329 419h1v5h-1zM330 386h1v3h-1zM330 613h1v6h-1zM331 504h1v5h-1zM331 599h1v3h-1zM332 410h1v3h-1zM332 437h1v5h-1zM333 369h1v3h-1zM333 469h1v3h-1zM333 504h1v6h-1zM333 524h1v4h-1zM334 494h1v6h-1zM334 590h1v3h-1zM335 376h1v6h-1zM335 402h1v5h-1zM335 461h1v4h-1zM335 493h1v5h-1zM336 413h1v5h-1zM336 460h1v3h-1zM336 471h1v6h-1zM336 555h1v3h-1zM337 395h1v6h-1zM337 516h1v5h-1zM337 562h1v5h-1zM337 609h1v8h-1zM338 406h1v6h-1zM338 417h1v8h-1zM338 468h1v4h-1zM338 504h1v4h-1zM338 535h1v5h-1zM338 583h1v5h-1zM339 368h1v6h-1zM339 491h1v5h-1zM340 474h1v8h-1zM340 537h1v3h-1zM340 544h1v4h-1zM340 630h1v3h-1zM341 379h1v4h-1zM341 520h1v8h-1zM341 586h1v4h-1zM342 405h1v5h-1zM342 426h1v6h-1zM342 493h1v6h-1zM342 592h1v8h-1zM344 480h1v3h-1zM344 483h1v6h-1zM344 508h1v8h-1zM344 607h1v8h-1zM345 422h1v5h-1zM345 479h1v8h-1zM345 530h1v8h-1zM345 612h1v8h-1zM347 404h1v5h-1zM347 409h1v6h-1zM347 437h1v8h-1zM347 479h1v4h-1zM347 504h1v3h-1zM347 543h1v3h-1zM347 576h1v8h-1zM348 480h1v5h-1zM349 366h1v4h-1zM349 381h1v8h-1zM349 436h1v8h-1zM349 472h1v8h-1zM349 549h1v6h-1zM349 584h1v8h-1zM349 603h1v6h-1zM350 463h1v5h-1zM350 515h1v5h-1zM350 546h1v6h-1zM351 507h1v6h-1zM351 518h1v6h-1zM351 550h1v3h-1zM351 553h1v6h-1zM352 428h1v5h-1zM352 444h1v3h-1zM353 404h1v8h-1zM354 417h1v6h-1zM354 548h1v5h-1zM354 603h1v4h-1zM355 525h1v5h-1zM355 608h1v3h-1zM356 396h1v6h-1zM356 468h1v3h-1zM356 584h1v5h-1zM357 394h1v4h-1zM357 414h1v6h-1zM357 482h1v4h-1zM357 629h1v4h-1zM358 405h1v6h-1zM359 388h1v6h-1zM359 620h1v3h-1zM360 382h1v4h-1zM360 421h1v8h-1zM360 429h1v4h-1zM360 488h1v6h-1zM360 549h1v8h-1zM363 501h1v4h-1z"/><path fill="#780000" d="M104 363h1v5h-1zM105 413h1v8h-1zM105 620h1v3h-1zM108 407h1v3h-1zM110 572h1v8h-1zM110 626h1v5h-1zM111 400h1v6h-1zM111 552h1v6h-1zM112 539h1v4h-1zM112 625h1v6h-1zM113 427h1v4h-1zM113 560h1v8h-1zM114 434h1v8h-1zM114 476h1v4h-1zM114 480h1v6h-1zM114 486h1v4h-1zM114 519h1v6h-1zM114 564h1v6h-1zM114 625h1v6h-1zM115 621h1v8h-1zM204 456h1v5h-1zM204 486h1v5h-1zM204 571h1v3h-1zM209 426h1v4h-1zM209 456h1v4h-1zM209 569h1v5h-1zM209 625h1v5h-1zM218 568h1v5h-1zM223 451h1v5h-1zM223 479h1v3h-1zM223 498h1v3h-1zM223 634h1v2h-1zM224 590h1v4h-1zM225 585h1v3h-1zM226 414h1v3h-1zM226 457h1v4h-1zM226 506h1v6h-1zM226 512h1v3h-1zM226 562h1v6h-1zM226 626h1v8h-1zM227 525h1v5h-1zM227 558h1v4h-1zM231 380h1v3h-1zM231 469h1v6h-1zM231 589h1v8h-1zM233 562h1v4h-1zM235 378h1v4h-1zM235 503h1v5h-1zM236 557h1v6h-1zM236 574h1v6h-1zM236 580h1v5h-1zM238 442h1v6h-1zM238 567h1v3h-1zM238 570h1v8h-1zM238 586h1v6h-1zM245 545h1v5h-1zM245 562h1v3h-1zM245 603h1v5h-1zM246 397h1v3h-1zM246 466h1v6h-1zM246 506h1v8h-1zM246 519h1v5h-1zM252 504h1v6h-1zM252 536h1v5h-1zM255 372h1v5h-1zM255 395h1v5h-1zM255 500h1v6h-1zM255 608h1v3h-1zM255 616h1v3h-1zM255 625h1v8h-1zM259 414h1v3h-1zM259 509h1v5h-1zM259 557h1v3h-1zM260 418h1v8h-1zM260 486h1v3h-1zM260 537h1v4h-1zM260 575h1v5h-1zM263 392h1v4h-1zM263 415h1v8h-1zM263 500h1v4h-1zM263 539h1v3h-1zM266 440h1v8h-1zM266 509h1v4h-1zM270 393h1v4h-1zM270 441h1v8h-1zM270 494h1v4h-1zM270 519h1v6h-1zM271 528h1v3h-1zM271 539h1v8h-1zM271 621h1v8h-1zM274 363h1v8h-1zM274 371h1v6h-1zM274 426h1v5h-1zM274 434h1v5h-1zM274 502h1v8h-1zM274 589h1v8h-1zM275 499h1v8h-1zM275 554h1v6h-1zM275 618h1v5h-1zM276 367h1v4h-1zM276 384h1v3h-1zM276 412h1v3h-1zM276 433h1v4h-1zM276 577h1v8h-1zM276 602h1v4h-1zM277 607h1v5h-1zM282 449h1v3h-1zM282 528h1v4h-1zM282 547h1v6h-1zM282 575h1v5h-1zM282 624h1v8h-1zM283 531h1v5h-1zM284 380h1v4h-1zM284 547h1v5h-1zM290 433h1v3h-1zM290 442h1v4h-1zM290 476h1v4h-1zM290 562h1v4h-1zM291 392h1v8h-1zM291 400h1v5h-1zM291 471h1v5h-1zM291 501h1v6h-1zM291 533h1v4h-1zM291 576h1v4h-1zM296 414h1v4h-1zM296 433h1v6h-1zM296 609h1v3h-1zM297 481h1v6h-1zM297 513h1v3h-1zM300 368h1v4h-1zM300 593h1v4h-1zM301 525h1v5h-1zM301 594h1v4h-1zM302 363h1v3h-1zM302 399h1v3h-1zM302 504h1v8h-1zM302 600h1v8h-1zM303 366h1v8h-1zM303 406h1v6h-1zM303 583h1v4h-1zM303 587h1v3h-1zM303 627h1v3h-1zM304 402h1v4h-1zM304 422h1v8h-1zM304 430h1v4h-1zM304 566h1v4h-1zM304 570h1v6h-1zM305 389h1v5h-1zM305 399h1v3h-1zM305 443h1v8h-1zM305 494h1v6h-1zM305 555h1v6h-1zM305 607h1v4h-1zM306 369h1v3h-1zM306 486h1v5h-1zM306 538h1v4h-1zM306 635h1v1h-1zM307 434h1v5h-1zM307 450h1v3h-1zM307 531h1v6h-1zM307 537h1v4h-1zM307 565h1v6h-1zM307 585h1v8h-1zM308 439h1v6h-1zM308 451h1v3h-1zM309 371h1v3h-1zM309 459h1v3h-1zM309 465h1v6h-1zM309 471h1v5h-1zM309 566h1v3h-1zM309 590h1v4h-1zM310 389h1v4h-1zM310 493h1v5h-1zM310 612h1v6h-1zM311 424h1v4h-1zM311 605h1v5h-1zM312 492h1v4h-1zM312 496h1v5h-1zM313 559h1v5h-1zM314 490h1v8h-1zM314 532h1v3h-1zM314 567h1v3h-1zM315 398h1v5h-1zM315 435h1v3h-1zM315 535h1v8h-1zM316 465h1v4h-1zM316 580h1v8h-1zM317 420h1v8h-1zM317 453h1v8h-1zM317 531h1v5h-1zM318 559h1v4h-1zM318 592h1v3h-1zM318 598h1v4h-1zM319 436h1v8h-1zM319 534h1v8h-1zM319 542h1v6h-1zM319 587h1v6h-1zM319 608h1v6h-1zM320 401h1v8h-1zM320 440h1v6h-1zM320 455h1v4h-1zM320 546h1v3h-1zM321 414h1v5h-1zM321 477h1v6h-1zM321 563h1v8h-1zM322 363h1v3h-1zM322 477h1v4h-1zM322 631h1v4h-1zM323 363h1v4h-1zM323 416h1v4h-1zM323 606h1v6h-1zM324 421h1v5h-1zM324 436h1v8h-1zM324 545h1v8h-1zM324 631h1v5h-1zM325 371h1v4h-1zM325 506h1v6h-1zM325 536h1v8h-1zM326 486h1v6h-1zM326 631h1v5h-1zM327 380h1v8h-1zM327 478h1v8h-1zM327 549h1v8h-1zM327 562h1v4h-1zM327 570h1v8h-1zM328 391h1v5h-1zM329 442h1v4h-1zM329 556h1v5h-1zM329 617h1v3h-1zM330 389h1v4h-1zM330 437h1v4h-1zM330 475h1v5h-1zM330 549h1v3h-1zM331 423h1v4h-1zM331 509h1v4h-1zM332 371h1v6h-1zM332 446h1v3h-1zM332 590h1v5h-1zM333 619h1v4h-1zM335 544h1v6h-1zM335 608h1v6h-1zM335 614h1v6h-1zM335 620h1v5h-1zM336 463h1v3h-1zM336 530h1v5h-1zM336 569h1v3h-1zM336 628h1v6h-1zM337 567h1v3h-1zM337 595h1v6h-1zM338 432h1v6h-1zM338 567h1v5h-1zM338 575h1v4h-1zM339 387h1v3h-1zM339 477h1v5h-1zM339 545h1v3h-1zM339 582h1v5h-1zM340 385h1v5h-1zM340 488h1v8h-1zM340 526h1v6h-1zM340 562h1v8h-1zM342 515h1v6h-1zM342 527h1v8h-1zM342 587h1v5h-1zM342 628h1v5h-1zM343 407h1v8h-1zM343 533h1v4h-1zM343 563h1v3h-1zM343 602h1v4h-1zM343 629h1v7h-1zM344 438h1v3h-1zM344 494h1v3h-1zM344 524h1v4h-1zM347 381h1v5h-1zM347 510h1v3h-1zM347 513h1v4h-1zM347 605h1v5h-1zM347 613h1v8h-1zM348 374h1v3h-1zM348 404h1v3h-1zM348 449h1v8h-1zM349 414h1v6h-1zM349 501h1v3h-1zM349 609h1v6h-1zM350 541h1v5h-1zM351 373h1v8h-1zM351 477h1v6h-1zM354 363h1v5h-1zM354 495h1v3h-1zM354 506h1v5h-1zM354 589h1v3h-1zM355 397h1v8h-1zM355 578h1v4h-1zM357 486h1v6h-1zM357 567h1v3h-1zM360 494h1v5h-1z"/><path fill="#a80000" d="M112 475h1v6h-1zM112 490h1v6h-1zM112 496h1v8h-1zM113 504h1v4h-1zM113 614h1v3h-1zM114 619h1v6h-1zM114 634h1v2h-1zM115 491h1v3h-1zM115 569h1v6h-1zM116 394h1v5h-1zM116 468h1v5h-1zM116 515h1v3h-1zM116 555h1v6h-1zM116 576h1v8h-1zM116 597h1v4h-1zM201 464h1v5h-1zM201 553h1v4h-1zM201 614h1v5h-1zM204 482h1v4h-1zM204 599h1v5h-1zM211 454h1v4h-1zM211 607h1v3h-1zM220 544h1v8h-1zM224 438h1v6h-1zM224 452h1v3h-1zM224 474h1v6h-1zM224 510h1v6h-1zM224 568h1v6h-1zM224 630h1v5h-1zM225 449h1v5h-1zM225 627h1v3h-1zM226 405h1v4h-1zM226 492h1v8h-1zM226 500h1v3h-1zM226 515h1v4h-1zM226 634h1v2h-1zM231 507h1v4h-1zM231 542h1v6h-1zM231 602h1v8h-1zM233 373h1v4h-1zM233 434h1v5h-1zM233 449h1v3h-1zM233 452h1v5h-1zM233 536h1v5h-1zM234 422h1v4h-1zM234 523h1v8h-1zM234 554h1v3h-1zM235 375h1v3h-1zM235 438h1v5h-1zM235 575h1v4h-1zM235 606h1v3h-1zM235 627h1v6h-1zM238 408h1v8h-1zM238 469h1v8h-1zM238 558h1v4h-1zM238 607h1v4h-1zM238 611h1v5h-1zM238 624h1v6h-1zM240 450h1v4h-1zM240 557h1v5h-1zM241 503h1v6h-1zM241 558h1v6h-1zM241 585h1v8h-1zM245 580h1v8h-1zM246 411h1v5h-1zM246 477h1v4h-1zM246 492h1v8h-1zM246 555h1v8h-1zM246 579h1v4h-1zM246 625h1v5h-1zM248 479h1v6h-1zM248 511h1v8h-1zM248 585h1v8h-1zM249 602h1v8h-1zM249 615h1v6h-1zM250 503h1v3h-1zM250 567h1v3h-1zM250 570h1v5h-1zM250 580h1v8h-1zM250 602h1v4h-1zM250 626h1v3h-1zM255 363h1v5h-1zM255 411h1v3h-1zM255 521h1v8h-1zM255 562h1v5h-1zM260 435h1v5h-1zM260 541h1v3h-1zM263 522h1v5h-1zM263 605h1v6h-1zM263 611h1v6h-1zM263 625h1v8h-1zM264 363h1v4h-1zM264 373h1v3h-1zM264 389h1v3h-1zM264 433h1v8h-1zM264 467h1v5h-1zM264 520h1v8h-1zM264 596h1v8h-1zM264 632h1v4h-1zM266 494h1v8h-1zM266 502h1v4h-1zM267 431h1v5h-1zM267 525h1v4h-1zM267 557h1v5h-1zM267 570h1v6h-1zM267 617h1v5h-1zM269 607h1v6h-1zM271 376h1v6h-1zM271 557h1v4h-1zM272 542h1v3h-1zM273 410h1v4h-1zM273 453h1v4h-1zM273 520h1v6h-1zM273 577h1v4h-1zM275 479h1v8h-1zM276 599h1v3h-1zM277 593h1v3h-1zM278 494h1v3h-1zM278 511h1v5h-1zM278 516h1v3h-1zM278 596h1v4h-1zM279 427h1v8h-1zM279 443h1v4h-1zM279 547h1v8h-1zM280 428h1v6h-1zM280 437h1v5h-1zM280 492h1v3h-1zM280 559h1v4h-1zM280 592h1v4h-1zM281 367h1v6h-1zM281 383h1v8h-1zM281 448h1v6h-1zM281 593h1v4h-1zM282 377h1v4h-1zM282 559h1v4h-1zM283 433h1v8h-1zM283 603h1v4h-1zM283 607h1v3h-1zM288 366h1v3h-1zM288 428h1v5h-1zM288 512h1v4h-1zM292 379h1v4h-1zM292 424h1v8h-1zM294 559h1v4h-1zM294 619h1v3h-1zM296 442h1v5h-1zM296 485h1v5h-1zM296 542h1v6h-1zM297 382h1v6h-1zM297 516h1v4h-1zM297 563h1v3h-1zM298 409h1v4h-1zM298 443h1v6h-1zM298 574h1v6h-1zM298 605h1v3h-1zM299 368h1v6h-1zM299 392h1v4h-1zM299 508h1v3h-1zM299 596h1v5h-1zM301 410h1v4h-1zM301 508h1v6h-1zM301 598h1v5h-1zM302 470h1v3h-1zM302 477h1v6h-1zM302 518h1v8h-1zM302 560h1v8h-1zM303 492h1v8h-1zM304 388h1v4h-1zM304 461h1v5h-1zM304 489h1v6h-1zM304 501h1v5h-1zM307 384h1v6h-1zM307 500h1v3h-1zM307 503h1v3h-1zM307 557h1v8h-1zM307 579h1v6h-1zM307 612h1v8h-1zM313 402h1v5h-1zM321 430h1v3h-1zM322 399h1v8h-1zM322 407h1v4h-1zM322 526h1v5h-1zM322 539h1v8h-1zM331 374h1v8h-1zM331 531h1v3h-1zM331 622h1v8h-1zM339 418h1v5h-1zM339 466h1v5h-1zM339 471h1v6h-1zM339 587h1v6h-1zM347 467h1v3h-1zM347 597h1v3h-1z"/><path fill="#900000" d="M112 532h1v3h-1zM112 582h1v6h-1zM112 631h1v5h-1zM113 476h1v6h-1zM113 579h1v8h-1zM113 587h1v5h-1zM114 445h1v8h-1zM114 578h1v8h-1zM114 610h1v4h-1zM114 614h1v5h-1zM115 604h1v6h-1zM204 363h1v5h-1zM204 414h1v5h-1zM204 433h1v4h-1zM204 540h1v4h-1zM204 604h1v3h-1zM210 609h1v4h-1zM210 631h1v3h-1zM223 407h1v4h-1zM223 414h1v3h-1zM223 435h1v3h-1zM223 441h1v3h-1zM223 456h1v8h-1zM223 535h1v6h-1zM223 593h1v8h-1zM224 392h1v4h-1zM224 401h1v8h-1zM224 426h1v8h-1zM224 458h1v3h-1zM224 530h1v3h-1zM225 536h1v4h-1zM225 545h1v5h-1zM225 567h1v6h-1zM225 588h1v6h-1zM225 594h1v6h-1zM226 557h1v5h-1zM231 457h1v8h-1zM231 552h1v5h-1zM231 610h1v6h-1zM233 546h1v6h-1zM233 602h1v4h-1zM234 391h1v8h-1zM235 418h1v3h-1zM238 368h1v4h-1zM238 401h1v4h-1zM238 530h1v8h-1zM238 546h1v8h-1zM238 562h1v5h-1zM238 578h1v8h-1zM238 616h1v4h-1zM240 400h1v4h-1zM240 417h1v4h-1zM240 437h1v8h-1zM240 509h1v5h-1zM245 528h1v8h-1zM246 385h1v4h-1zM248 471h1v8h-1zM248 552h1v4h-1zM252 411h1v6h-1zM252 430h1v6h-1zM252 496h1v8h-1zM252 573h1v3h-1zM252 627h1v4h-1zM255 414h1v5h-1zM259 369h1v3h-1zM259 382h1v4h-1zM259 536h1v4h-1zM259 578h1v5h-1zM260 478h1v8h-1zM260 527h1v5h-1zM260 607h1v5h-1zM260 630h1v5h-1zM263 472h1v4h-1zM263 476h1v8h-1zM263 542h1v3h-1zM263 551h1v6h-1zM263 563h1v4h-1zM264 385h1v4h-1zM264 610h1v3h-1zM264 619h1v5h-1zM265 447h1v3h-1zM265 566h1v6h-1zM265 608h1v5h-1zM266 410h1v3h-1zM266 421h1v8h-1zM266 524h1v3h-1zM266 536h1v5h-1zM266 611h1v8h-1zM267 403h1v6h-1zM267 545h1v8h-1zM267 628h1v8h-1zM270 411h1v5h-1zM270 438h1v3h-1zM270 483h1v8h-1zM270 501h1v6h-1zM270 560h1v4h-1zM271 363h1v3h-1zM271 603h1v6h-1zM273 599h1v6h-1zM274 487h1v6h-1zM274 532h1v3h-1zM275 374h1v6h-1zM275 459h1v8h-1zM275 570h1v6h-1zM275 604h1v4h-1zM276 387h1v8h-1zM276 612h1v4h-1zM277 505h1v6h-1zM277 519h1v5h-1zM279 435h1v3h-1zM279 628h1v5h-1zM280 411h1v3h-1zM280 434h1v3h-1zM280 448h1v4h-1zM280 530h1v3h-1zM281 499h1v4h-1zM282 381h1v4h-1zM282 463h1v8h-1zM282 612h1v5h-1zM282 632h1v3h-1zM283 445h1v5h-1zM283 456h1v5h-1zM283 514h1v6h-1zM283 520h1v5h-1zM284 507h1v5h-1zM284 544h1v3h-1zM291 476h1v3h-1zM291 479h1v3h-1zM294 489h1v5h-1zM294 567h1v5h-1zM296 377h1v4h-1zM296 381h1v5h-1zM296 430h1v3h-1zM297 363h1v5h-1zM297 376h1v3h-1zM297 468h1v5h-1zM297 538h1v5h-1zM298 432h1v3h-1zM298 518h1v5h-1zM300 576h1v5h-1zM301 449h1v4h-1zM301 544h1v4h-1zM302 366h1v5h-1zM302 402h1v3h-1zM302 529h1v4h-1zM302 551h1v3h-1zM302 619h1v4h-1zM303 488h1v4h-1zM304 546h1v8h-1zM305 544h1v8h-1zM306 423h1v4h-1zM306 476h1v4h-1zM306 559h1v6h-1zM307 401h1v8h-1zM307 419h1v5h-1zM308 527h1v5h-1zM308 621h1v5h-1zM309 497h1v6h-1zM309 621h1v5h-1zM310 377h1v3h-1zM310 404h1v8h-1zM310 473h1v8h-1zM310 541h1v8h-1zM310 582h1v6h-1zM310 603h1v4h-1zM311 576h1v4h-1zM312 518h1v5h-1zM313 437h1v5h-1zM313 498h1v4h-1zM313 615h1v3h-1zM314 480h1v6h-1zM315 490h1v3h-1zM315 604h1v4h-1zM316 379h1v8h-1zM316 500h1v4h-1zM318 371h1v4h-1zM318 546h1v8h-1zM319 431h1v5h-1zM319 471h1v4h-1zM319 598h1v5h-1zM319 624h1v5h-1zM321 374h1v5h-1zM321 498h1v4h-1zM321 540h1v5h-1zM321 597h1v5h-1zM322 448h1v8h-1zM322 518h1v5h-1zM322 560h1v5h-1zM322 565h1v3h-1zM324 461h1v6h-1zM324 475h1v3h-1zM324 482h1v3h-1zM324 507h1v3h-1zM327 429h1v5h-1zM328 409h1v8h-1zM328 447h1v8h-1zM328 544h1v8h-1zM328 575h1v8h-1zM328 608h1v3h-1zM328 634h1v2h-1zM329 499h1v3h-1zM330 470h1v5h-1zM331 367h1v3h-1zM331 452h1v4h-1zM331 496h1v8h-1zM331 574h1v3h-1zM331 602h1v3h-1zM333 600h1v3h-1zM338 451h1v3h-1zM339 390h1v8h-1zM339 626h1v8h-1zM343 594h1v4h-1zM344 426h1v4h-1zM347 386h1v5h-1zM347 488h1v5h-1zM347 507h1v3h-1zM347 517h1v4h-1zM347 521h1v5h-1zM349 545h1v4h-1zM350 368h1v6h-1zM350 395h1v8h-1zM350 454h1v3h-1zM350 468h1v5h-1zM350 607h1v6h-1zM354 412h1v5h-1zM354 519h1v8h-1zM355 405h1v4h-1zM355 425h1v4h-1zM355 560h1v5h-1z"/><path fill="#c00000" d="M113 540h1v4h-1zM113 617h1v6h-1zM114 414h1v8h-1zM114 528h1v6h-1zM114 594h1v4h-1zM115 397h1v8h-1zM116 371h1v6h-1zM116 492h1v4h-1zM116 567h1v6h-1zM116 601h1v6h-1zM117 530h1v5h-1zM117 596h1v4h-1zM117 606h1v8h-1zM201 437h1v3h-1zM201 454h1v6h-1zM201 482h1v6h-1zM201 505h1v3h-1zM204 465h1v5h-1zM204 527h1v4h-1zM204 535h1v5h-1zM211 536h1v6h-1zM212 386h1v8h-1zM212 500h1v4h-1zM212 541h1v8h-1zM220 371h1v4h-1zM220 472h1v8h-1zM220 552h1v6h-1zM220 558h1v5h-1zM224 412h1v3h-1zM224 527h1v3h-1zM224 550h1v3h-1zM224 574h1v4h-1zM224 619h1v5h-1zM225 426h1v8h-1zM225 555h1v5h-1zM226 417h1v6h-1zM226 539h1v8h-1zM226 551h1v6h-1zM226 571h1v8h-1zM231 565h1v5h-1zM231 580h1v5h-1zM232 367h1v6h-1zM232 426h1v8h-1zM232 486h1v8h-1zM232 543h1v5h-1zM232 564h1v3h-1zM232 567h1v4h-1zM233 406h1v8h-1zM233 507h1v8h-1zM233 515h1v3h-1zM234 435h1v4h-1zM234 453h1v4h-1zM234 607h1v8h-1zM235 369h1v6h-1zM235 388h1v5h-1zM235 432h1v3h-1zM235 435h1v3h-1zM235 454h1v5h-1zM238 390h1v5h-1zM240 392h1v8h-1zM240 411h1v6h-1zM240 498h1v6h-1zM240 535h1v4h-1zM240 574h1v5h-1zM240 587h1v8h-1zM246 372h1v5h-1zM246 406h1v5h-1zM246 481h1v3h-1zM246 514h1v5h-1zM246 536h1v4h-1zM246 571h1v8h-1zM246 597h1v3h-1zM248 432h1v6h-1zM248 526h1v6h-1zM248 556h1v6h-1zM248 562h1v6h-1zM249 430h1v8h-1zM249 497h1v5h-1zM249 621h1v4h-1zM249 625h1v4h-1zM249 629h1v7h-1zM250 455h1v3h-1zM250 499h1v4h-1zM250 506h1v8h-1zM250 588h1v6h-1zM250 616h1v4h-1zM255 532h1v6h-1zM255 571h1v5h-1zM255 622h1v3h-1zM260 544h1v5h-1zM260 587h1v5h-1zM264 547h1v6h-1zM266 392h1v5h-1zM266 486h1v8h-1zM266 506h1v3h-1zM266 517h1v4h-1zM266 587h1v4h-1zM267 417h1v8h-1zM267 442h1v5h-1zM267 481h1v6h-1zM269 393h1v8h-1zM269 405h1v3h-1zM269 427h1v4h-1zM269 501h1v3h-1zM269 552h1v5h-1zM269 565h1v5h-1zM271 491h1v8h-1zM271 634h1v2h-1zM272 363h1v5h-1zM272 519h1v5h-1zM272 556h1v3h-1zM272 576h1v3h-1zM273 414h1v3h-1zM273 562h1v4h-1zM275 487h1v8h-1zM276 535h1v6h-1zM276 561h1v6h-1zM276 596h1v3h-1zM276 630h1v6h-1zM277 368h1v3h-1zM277 470h1v6h-1zM278 388h1v6h-1zM278 484h1v5h-1zM278 508h1v3h-1zM278 540h1v8h-1zM278 548h1v5h-1zM278 613h1v3h-1zM278 616h1v5h-1zM279 497h1v6h-1zM279 542h1v5h-1zM279 561h1v3h-1zM280 488h1v4h-1zM280 498h1v5h-1zM280 600h1v8h-1zM281 377h1v6h-1zM281 439h1v3h-1zM281 442h1v6h-1zM281 541h1v5h-1zM281 567h1v6h-1zM282 393h1v4h-1zM282 433h1v4h-1zM282 471h1v3h-1zM282 635h1v1h-1zM283 482h1v4h-1zM283 585h1v3h-1zM288 394h1v6h-1zM288 537h1v8h-1zM288 561h1v4h-1zM288 565h1v5h-1zM288 601h1v6h-1zM292 375h1v4h-1zM292 474h1v6h-1zM292 615h1v3h-1zM294 429h1v4h-1zM294 449h1v5h-1zM294 522h1v3h-1zM296 439h1v3h-1zM296 559h1v5h-1zM296 589h1v6h-1zM296 595h1v8h-1zM297 604h1v4h-1zM298 473h1v6h-1zM298 479h1v4h-1zM298 494h1v6h-1zM298 619h1v8h-1zM299 468h1v3h-1zM299 494h1v5h-1zM299 542h1v8h-1zM301 494h1v6h-1zM301 603h1v5h-1zM301 608h1v4h-1zM301 615h1v8h-1zM304 398h1v4h-1z"/><path fill="#d80000" d="M114 402h1v4h-1zM115 363h1v4h-1zM115 468h1v5h-1zM115 549h1v3h-1zM115 615h1v6h-1zM116 540h1v3h-1zM116 584h1v5h-1zM116 618h1v8h-1zM117 475h1v5h-1zM117 511h1v5h-1zM117 591h1v5h-1zM201 382h1v4h-1zM201 401h1v6h-1zM201 577h1v8h-1zM201 585h1v3h-1zM201 610h1v4h-1zM204 379h1v3h-1zM204 514h1v6h-1zM211 487h1v8h-1zM211 516h1v8h-1zM212 394h1v4h-1zM212 513h1v5h-1zM212 557h1v5h-1zM212 621h1v3h-1zM212 634h1v2h-1zM220 431h1v5h-1zM220 509h1v6h-1zM220 515h1v4h-1zM225 387h1v5h-1zM225 441h1v8h-1zM225 509h1v3h-1zM226 620h1v6h-1zM231 398h1v5h-1zM231 500h1v3h-1zM231 516h1v3h-1zM231 557h1v8h-1zM231 597h1v5h-1zM232 513h1v5h-1zM232 552h1v8h-1zM233 528h1v8h-1zM234 447h1v6h-1zM234 471h1v5h-1zM234 543h1v6h-1zM234 577h1v4h-1zM235 488h1v6h-1zM235 520h1v4h-1zM235 559h1v5h-1zM235 615h1v6h-1zM240 486h1v4h-1zM240 595h1v5h-1zM240 625h1v6h-1zM241 372h1v8h-1zM241 545h1v5h-1zM241 571h1v3h-1zM241 630h1v5h-1zM248 438h1v3h-1zM249 363h1v6h-1zM249 424h1v6h-1zM249 487h1v6h-1zM249 592h1v4h-1zM250 385h1v5h-1zM250 533h1v3h-1zM260 412h1v6h-1zM260 471h1v4h-1zM263 378h1v4h-1zM263 434h1v3h-1zM264 451h1v8h-1zM264 564h1v8h-1zM266 429h1v6h-1zM266 451h1v8h-1zM266 549h1v8h-1zM266 591h1v3h-1zM266 597h1v8h-1zM266 627h1v8h-1zM267 363h1v5h-1zM267 590h1v4h-1zM269 599h1v5h-1zM271 371h1v5h-1zM271 413h1v8h-1zM272 478h1v8h-1zM272 502h1v8h-1zM272 536h1v3h-1zM272 579h1v8h-1zM273 370h1v3h-1zM273 397h1v8h-1zM273 630h1v6h-1zM275 507h1v5h-1zM275 593h1v3h-1zM277 383h1v5h-1zM277 563h1v3h-1zM278 384h1v4h-1zM278 401h1v8h-1zM278 452h1v3h-1zM278 461h1v5h-1zM278 519h1v4h-1zM278 600h1v5h-1zM278 633h1v3h-1zM279 575h1v4h-1zM280 483h1v5h-1zM280 506h1v8h-1zM280 522h1v4h-1zM280 551h1v8h-1zM281 373h1v4h-1zM281 496h1v3h-1zM282 363h1v6h-1zM282 373h1v4h-1zM282 446h1v3h-1zM282 594h1v3h-1zM283 397h1v4h-1zM283 415h1v8h-1zM283 472h1v3h-1zM283 475h1v3h-1zM283 492h1v8h-1zM283 511h1v3h-1zM283 632h1v4h-1zM288 400h1v3h-1zM288 443h1v5h-1zM288 456h1v3h-1zM288 494h1v5h-1zM292 383h1v8h-1zM292 480h1v4h-1zM292 618h1v5h-1zM294 380h1v4h-1zM294 384h1v4h-1zM294 433h1v3h-1zM294 467h1v4h-1zM294 536h1v3h-1zM294 547h1v3h-1zM296 363h1v6h-1zM296 395h1v3h-1zM296 510h1v4h-1zM297 402h1v5h-1zM298 385h1v6h-1zM298 397h1v4h-1zM298 416h1v5h-1zM298 548h1v8h-1zM298 564h1v6h-1zM299 377h1v8h-1zM299 415h1v6h-1zM299 452h1v8h-1zM299 615h1v3h-1zM299 618h1v8h-1z"/><path fill="#f00000" d="M115 377h1v8h-1zM115 408h1v3h-1zM115 519h1v8h-1zM115 552h1v4h-1zM115 596h1v8h-1zM116 543h1v5h-1zM116 552h1v3h-1zM117 410h1v4h-1zM117 505h1v6h-1zM201 597h1v4h-1zM211 366h1v6h-1zM211 472h1v3h-1zM211 475h1v3h-1zM211 524h1v8h-1zM211 629h1v7h-1zM212 378h1v8h-1zM212 436h1v4h-1zM212 453h1v4h-1zM212 457h1v3h-1zM212 573h1v4h-1zM212 594h1v5h-1zM220 416h1v3h-1zM220 488h1v8h-1zM225 411h1v3h-1zM232 382h1v6h-1zM232 401h1v5h-1zM232 415h1v5h-1zM232 470h1v3h-1zM232 518h1v3h-1zM234 363h1v5h-1zM234 399h1v5h-1zM234 404h1v6h-1zM234 457h1v8h-1zM234 476h1v4h-1zM234 483h1v8h-1zM234 500h1v5h-1zM234 626h1v4h-1zM240 539h1v4h-1zM240 562h1v4h-1zM241 406h1v6h-1zM241 574h1v8h-1zM241 582h1v3h-1zM241 602h1v6h-1zM248 447h1v4h-1zM249 399h1v4h-1zM249 421h1v3h-1zM249 457h1v8h-1zM249 471h1v8h-1zM249 479h1v8h-1zM249 540h1v3h-1zM249 575h1v4h-1zM250 450h1v5h-1zM250 563h1v4h-1zM250 575h1v5h-1zM250 620h1v6h-1zM264 575h1v5h-1zM266 435h1v5h-1zM267 515h1v6h-1zM269 408h1v3h-1zM269 467h1v8h-1zM269 524h1v4h-1zM269 536h1v3h-1zM269 613h1v6h-1zM272 454h1v4h-1zM272 524h1v4h-1zM272 565h1v4h-1zM272 618h1v4h-1zM273 450h1v3h-1zM277 432h1v4h-1zM277 566h1v5h-1zM278 397h1v4h-1zM278 444h1v8h-1zM278 526h1v5h-1zM278 553h1v3h-1zM278 586h1v5h-1zM278 605h1v3h-1zM279 375h1v6h-1zM279 399h1v8h-1zM279 472h1v3h-1zM279 513h1v5h-1zM279 555h1v6h-1zM279 564h1v6h-1zM280 386h1v4h-1zM280 457h1v4h-1zM280 526h1v4h-1zM281 400h1v8h-1zM281 597h1v6h-1zM282 417h1v4h-1zM282 499h1v5h-1zM282 507h1v6h-1zM288 381h1v3h-1zM288 433h1v6h-1zM288 448h1v8h-1zM288 479h1v5h-1zM288 506h1v6h-1zM288 598h1v3h-1zM292 405h1v8h-1zM292 454h1v3h-1zM292 629h1v5h-1zM294 397h1v8h-1zM294 550h1v3h-1zM294 580h1v3h-1zM296 480h1v5h-1zM298 449h1v4h-1zM298 514h1v4h-1zM298 523h1v4h-1zM298 556h1v5h-1zM299 374h1v3h-1zM299 563h1v3h-1zM299 626h1v4h-1z"/><path fill="#ff0000" d="M116 439h1v4h-1zM117 469h1v6h-1zM117 527h1v3h-1zM117 585h1v6h-1zM201 440h1v8h-1zM201 469h1v8h-1zM201 601h1v3h-1zM211 624h1v5h-1zM212 414h1v5h-1zM212 432h1v4h-1zM212 445h1v8h-1zM212 518h1v5h-1zM212 549h1v3h-1zM212 582h1v4h-1zM212 631h1v3h-1zM220 419h1v8h-1zM220 436h1v6h-1zM220 442h1v4h-1zM220 504h1v5h-1zM249 417h1v4h-1zM249 507h1v8h-1zM249 515h1v8h-1zM249 555h1v8h-1zM249 563h1v3h-1zM249 587h1v5h-1zM250 464h1v3h-1zM269 385h1v4h-1zM269 419h1v3h-1zM269 504h1v3h-1zM272 423h1v3h-1zM272 442h1v3h-1zM272 499h1v3h-1zM272 610h1v3h-1zM288 524h1v3h-1zM292 416h1v3h-1zM292 450h1v4h-1zM292 556h1v8h-1zM292 634h1v2h-1zM298 632h1v4h-1z"/><path fill="#ffa800" d="M620 382h1v4h-1zM620 390h1v4h-1zM620 563h1v7h-1zM620 634h1v2h-1zM621 463h1v4h-1zM621 601h1v5h-1zM622 374h1v3h-1zM622 450h1v7h-1zM622 496h1v4h-1zM622 535h1v3h-1zM623 432h1v7h-1zM623 470h1v6h-1zM623 482h1v3h-1zM623 565h1v4h-1zM625 532h1v7h-1zM625 582h1v3h-1zM625 597h1v3h-1zM626 433h1v6h-1zM626 573h1v4h-1zM627 380h1v3h-1zM627 445h1v6h-1zM627 593h1v4h-1zM628 374h1v7h-1zM628 399h1v5h-1zM628 473h1v6h-1zM628 493h1v5h-1zM629 444h1v3h-1zM629 528h1v5h-1zM630 425h1v3h-1zM630 444h1v6h-1zM630 500h1v4h-1zM630 508h1v6h-1zM631 487h1v4h-1zM632 389h1v5h-1zM632 464h1v4h-1zM633 583h1v6h-1zM634 600h1v7h-1zM634 617h1v5h-1zM635 382h1v3h-1zM635 513h1v3h-1zM635 522h1v4h-1zM636 391h1v7h-1zM636 401h1v3h-1zM636 426h1v6h-1zM636 455h1v5h-1zM636 609h1v4h-1z"/><path fill="#ffc000" d="M620 433h1v4h-1zM620 630h1v4h-1zM621 561h1v6h-1zM621 632h1v4h-1zM622 490h1v6h-1zM622 519h1v7h-1zM623 403h1v6h-1zM623 409h1v4h-1zM623 569h1v3h-1zM623 595h1v7h-1zM624 395h1v4h-1zM624 418h1v4h-1zM625 372h1v4h-1zM625 438h1v4h-1zM625 506h1v3h-1zM625 509h1v7h-1zM626 455h1v3h-1zM627 417h1v7h-1zM628 367h1v4h-1zM628 522h1v4h-1zM628 545h1v7h-1zM628 581h1v6h-1zM629 423h1v4h-1zM630 582h1v4h-1zM631 456h1v6h-1zM632 453h1v5h-1zM632 468h1v4h-1zM632 472h1v4h-1zM632 520h1v4h-1zM633 367h1v3h-1zM633 405h1v7h-1zM633 473h1v7h-1zM634 427h1v3h-1zM634 459h1v5h-1zM634 496h1v3h-1zM634 626h1v4h-1zM635 393h1v6h-1zM635 444h1v3h-1zM635 567h1v7h-1zM636 438h1v6h-1zM636 568h1v7h-1z"/><path fill="#ff9000" d="M620 475h1v3h-1zM620 505h1v6h-1zM621 443h1v5h-1zM621 606h1v3h-1zM623 459h1v3h-1zM623 623h1v7h-1zM624 422h1v6h-1zM624 544h1v4h-1zM624 568h1v5h-1zM625 483h1v4h-1zM626 363h1v6h-1zM626 463h1v7h-1zM626 512h1v7h-1zM626 623h1v4h-1zM627 451h1v7h-1zM627 580h1v6h-1zM627 597h1v4h-1zM627 628h1v6h-1zM628 464h1v4h-1zM628 536h1v3h-1zM628 623h1v5h-1zM629 427h1v7h-1zM629 617h1v5h-1zM630 394h1v6h-1zM630 456h1v6h-1zM630 534h1v6h-1zM630 586h1v6h-1zM631 438h1v5h-1zM632 511h1v3h-1zM632 604h1v5h-1zM633 388h1v6h-1zM633 454h1v6h-1zM633 528h1v3h-1zM634 464h1v5h-1zM634 526h1v6h-1zM634 581h1v4h-1zM635 603h1v5h-1zM636 631h1v5h-1z"/><path fill="#ff7800" d="M621 511h1v7h-1zM621 525h1v4h-1zM621 545h1v6h-1zM622 424h1v3h-1zM622 486h1v4h-1zM622 619h1v7h-1zM624 494h1v5h-1zM624 548h1v3h-1zM624 617h1v6h-1zM625 621h1v3h-1zM626 402h1v4h-1zM626 406h1v7h-1zM626 499h1v7h-1zM627 503h1v4h-1zM627 519h1v7h-1zM627 553h1v3h-1zM629 496h1v3h-1zM629 565h1v4h-1zM629 574h1v4h-1zM630 390h1v4h-1zM630 494h1v6h-1zM630 573h1v3h-1zM631 380h1v6h-1zM631 432h1v3h-1zM631 447h1v6h-1zM631 537h1v4h-1zM631 573h1v3h-1zM631 576h1v6h-1zM631 596h1v3h-1zM631 609h1v5h-1zM632 394h1v3h-1zM632 574h1v3h-1zM633 400h1v5h-1zM633 495h1v6h-1zM633 517h1v4h-1zM634 571h1v4h-1zM635 488h1v3h-1zM636 376h1v5h-1zM636 381h1v6h-1zM636 387h1v4h-1zM636 529h1v7h-1zM636 599h1v3h-1z"/><path fill="#a8ff00" d="M637 374h1v3h-1zM639 535h1v5h-1zM641 524h1v5h-1zM642 369h1v5h-1zM643 444h1v4h-1zM643 524h1v7h-1zM644 431h1v3h-1zM645 618h1v4h-1zM646 434h1v5h-1zM647 489h1v7h-1zM647 569h1v3h-1zM648 625h1v6h-1zM649 396h1v4h-1zM649 584h1v3h-1zM650 628h1v5h-1zM651 523h1v3h-1zM652 450h1v5h-1zM653 372h1v4h-1zM653 476h1v7h-1zM653 492h1v7h-1zM654 548h1v3h-1zM656 479h1v6h-1zM657 572h1v7h-1zM658 433h1v5h-1zM659 526h1v7h-1zM659 583h1v3h-1zM660 550h1v5h-1zM660 591h1v6h-1zM660 602h1v4h-1zM661 372h1v3h-1zM661 539h1v5h-1zM661 592h1v5h-1zM662 441h1v7h-1zM662 458h1v7h-1zM664 419h1v6h-1zM664 492h1v6h-1zM664 537h1v5h-1zM665 368h1v4h-1zM665 414h1v4h-1zM665 632h1v4h-1zM666 465h1v6h-1zM707 376h1v6h-1zM725 627h1v4h-1zM726 597h1v6h-1zM735 613h1v5h-1zM736 485h1v7h-1z"/><path fill="#f0ff00" d="M637 377h1v3h-1zM637 548h1v4h-1zM637 583h1v4h-1zM637 604h1v3h-1zM637 628h1v3h-1zM638 489h1v5h-1zM638 502h1v5h-1zM638 513h1v7h-1zM640 456h1v4h-1zM640 520h1v6h-1zM640 632h1v4h-1zM641 614h1v3h-1zM642 395h1v5h-1zM642 417h1v4h-1zM642 445h1v5h-1zM642 461h1v4h-1zM642 477h1v5h-1zM642 502h1v7h-1zM642 566h1v4h-1zM643 369h1v3h-1zM643 392h1v7h-1zM643 404h1v3h-1zM643 605h1v6h-1zM644 399h1v7h-1zM644 455h1v3h-1zM644 542h1v3h-1zM644 561h1v7h-1zM645 379h1v4h-1zM645 476h1v7h-1zM645 622h1v4h-1zM645 626h1v7h-1zM646 564h1v6h-1zM647 461h1v4h-1zM647 483h1v6h-1zM648 403h1v4h-1zM648 464h1v4h-1zM648 498h1v7h-1zM648 540h1v3h-1zM648 589h1v7h-1zM649 392h1v4h-1zM649 435h1v7h-1zM649 457h1v6h-1zM650 380h1v6h-1zM650 457h1v4h-1zM650 522h1v4h-1zM652 373h1v4h-1zM652 439h1v4h-1zM652 491h1v7h-1zM652 548h1v4h-1zM653 557h1v5h-1zM653 608h1v4h-1zM654 421h1v5h-1zM654 456h1v4h-1zM654 481h1v5h-1zM654 544h1v4h-1zM655 525h1v4h-1zM656 425h1v4h-1zM656 435h1v4h-1zM656 506h1v5h-1zM657 444h1v7h-1zM657 460h1v7h-1zM658 408h1v7h-1zM659 417h1v5h-1zM659 448h1v6h-1zM660 486h1v4h-1zM661 393h1v5h-1zM661 457h1v7h-1zM661 571h1v4h-1zM662 483h1v5h-1zM663 391h1v4h-1zM663 444h1v6h-1zM663 463h1v3h-1zM663 562h1v7h-1zM664 547h1v5h-1zM664 589h1v3h-1zM665 385h1v7h-1zM665 470h1v3h-1zM666 550h1v5h-1zM666 591h1v7h-1zM667 443h1v3h-1z"/><path fill="#c0ff00" d="M637 387h1v5h-1zM637 598h1v6h-1zM637 610h1v6h-1zM638 477h1v7h-1zM638 598h1v3h-1zM639 555h1v5h-1zM639 606h1v3h-1zM640 488h1v6h-1zM641 363h1v5h-1zM641 471h1v7h-1zM641 513h1v5h-1zM641 623h1v6h-1zM642 465h1v7h-1zM642 472h1v5h-1zM642 548h1v4h-1zM642 573h1v7h-1zM642 603h1v4h-1zM643 407h1v3h-1zM643 587h1v5h-1zM644 458h1v5h-1zM645 375h1v4h-1zM645 522h1v6h-1zM645 541h1v3h-1zM645 633h1v3h-1zM646 387h1v4h-1zM646 606h1v4h-1zM646 628h1v5h-1zM647 503h1v4h-1zM648 419h1v6h-1zM648 459h1v5h-1zM649 379h1v3h-1zM649 478h1v5h-1zM649 512h1v7h-1zM649 543h1v3h-1zM650 421h1v4h-1zM650 443h1v6h-1zM650 449h1v5h-1zM650 464h1v3h-1zM650 539h1v5h-1zM650 574h1v3h-1zM651 496h1v3h-1zM652 520h1v6h-1zM652 590h1v6h-1zM652 622h1v7h-1zM653 414h1v7h-1zM653 421h1v5h-1zM654 469h1v4h-1zM654 563h1v4h-1zM655 493h1v7h-1zM655 536h1v4h-1zM655 599h1v5h-1zM656 383h1v7h-1zM656 394h1v7h-1zM657 399h1v3h-1zM657 412h1v7h-1zM657 482h1v4h-1zM657 579h1v5h-1zM658 404h1v4h-1zM658 453h1v4h-1zM658 484h1v4h-1zM658 573h1v4h-1zM659 422h1v7h-1zM660 562h1v5h-1zM661 367h1v5h-1zM661 415h1v6h-1zM661 443h1v4h-1zM661 602h1v7h-1zM661 619h1v7h-1zM662 415h1v5h-1zM662 465h1v7h-1zM662 519h1v3h-1zM662 532h1v7h-1zM662 563h1v5h-1zM663 496h1v3h-1zM663 542h1v4h-1zM663 605h1v3h-1zM663 620h1v4h-1zM664 369h1v5h-1zM664 401h1v4h-1zM665 473h1v3h-1zM665 510h1v7h-1zM666 486h1v5h-1zM666 526h1v5h-1zM666 560h1v3h-1zM666 603h1v6h-1zM667 477h1v7h-1z"/><path fill="#d8ff00" d="M637 418h1v5h-1zM637 423h1v4h-1zM637 623h1v5h-1zM637 631h1v3h-1zM638 363h1v5h-1zM638 378h1v5h-1zM638 388h1v6h-1zM638 425h1v7h-1zM638 563h1v7h-1zM639 391h1v6h-1zM640 381h1v7h-1zM640 424h1v6h-1zM640 500h1v7h-1zM641 441h1v6h-1zM641 497h1v7h-1zM641 543h1v7h-1zM642 400h1v6h-1zM642 527h1v3h-1zM642 586h1v4h-1zM643 545h1v6h-1zM643 582h1v5h-1zM644 363h1v6h-1zM645 368h1v3h-1zM645 456h1v7h-1zM645 463h1v4h-1zM645 497h1v7h-1zM645 518h1v4h-1zM646 416h1v4h-1zM646 420h1v5h-1zM646 425h1v5h-1zM646 622h1v6h-1zM647 515h1v4h-1zM647 584h1v5h-1zM648 407h1v7h-1zM648 431h1v5h-1zM649 371h1v4h-1zM649 386h1v3h-1zM649 422h1v3h-1zM649 442h1v3h-1zM649 471h1v4h-1zM649 599h1v3h-1zM650 474h1v5h-1zM650 551h1v4h-1zM651 369h1v6h-1zM651 407h1v3h-1zM651 410h1v7h-1zM651 434h1v3h-1zM651 540h1v6h-1zM652 363h1v6h-1zM652 617h1v5h-1zM653 489h1v3h-1zM653 499h1v5h-1zM653 531h1v6h-1zM654 505h1v5h-1zM654 510h1v3h-1zM655 382h1v4h-1zM655 437h1v7h-1zM655 515h1v6h-1zM655 604h1v7h-1zM656 390h1v4h-1zM656 415h1v4h-1zM656 485h1v4h-1zM656 566h1v3h-1zM657 371h1v5h-1zM657 451h1v5h-1zM657 471h1v5h-1zM657 510h1v7h-1zM657 532h1v4h-1zM657 600h1v5h-1zM658 370h1v5h-1zM658 395h1v5h-1zM658 467h1v5h-1zM658 514h1v7h-1zM658 580h1v5h-1zM658 613h1v6h-1zM659 363h1v7h-1zM659 623h1v3h-1zM659 629h1v4h-1zM660 390h1v3h-1zM660 393h1v5h-1zM660 398h1v3h-1zM660 424h1v4h-1zM660 502h1v4h-1zM661 467h1v7h-1zM661 487h1v5h-1zM661 492h1v3h-1zM661 553h1v3h-1zM661 629h1v7h-1zM662 438h1v3h-1zM662 488h1v3h-1zM662 522h1v4h-1zM663 454h1v4h-1zM663 556h1v6h-1zM663 615h1v5h-1zM664 363h1v6h-1zM665 443h1v7h-1zM666 376h1v5h-1zM666 392h1v4h-1zM666 434h1v6h-1zM666 542h1v5h-1zM666 631h1v5h-1zM667 369h1v4h-1zM667 490h1v5h-1zM667 591h1v6h-1z"/><path fill="#ffff00" d="M642 533h1v5h-1zM644 413h1v6h-1zM647 555h1v7h-1zM650 430h1v6h-1zM651 563h1v3h-1zM658 609h1v4h-1zM660 520h1v4h-1z"/><path fill="#60ff00" d="M668 382h1v6h-1zM668 463h1v4h-1zM670 552h1v7h-1zM671 626h1v5h-1zM672 363h1v5h-1zM672 406h1v7h-1zM672 481h1v6h-1zM673 403h1v7h-1zM673 413h1v6h-1zM673 556h1v5h-1zM674 389h1v4h-1zM674 399h1v3h-1zM674 408h1v5h-1zM674 470h1v3h-1zM675 419h1v6h-1zM675 476h1v7h-1zM675 525h1v7h-1zM675 532h1v4h-1zM675 601h1v5h-1zM676 369h1v6h-1zM676 423h1v5h-1zM676 446h1v3h-1zM676 568h1v4h-1zM677 490h1v4h-1zM678 502h1v6h-1zM678 524h1v7h-1zM678 539h1v3h-1zM679 369h1v4h-1zM679 373h1v7h-1zM679 397h1v7h-1zM679 446h1v7h-1zM679 587h1v6h-1zM680 517h1v7h-1zM680 571h1v3h-1zM682 436h1v3h-1zM683 471h1v5h-1zM686 530h1v4h-1zM686 586h1v4h-1zM687 548h1v6h-1zM687 620h1v5h-1zM687 631h1v3h-1zM688 556h1v4h-1zM689 455h1v7h-1zM689 530h1v5h-1zM690 439h1v5h-1zM691 371h1v6h-1zM692 513h1v4h-1zM692 580h1v5h-1zM692 592h1v4h-1zM692 617h1v5h-1zM692 634h1v2h-1zM693 554h1v7h-1zM694 545h1v3h-1zM695 418h1v4h-1zM695 544h1v4h-1zM696 363h1v6h-1zM696 376h1v5h-1zM696 558h1v5h-1zM696 592h1v3h-1zM697 388h1v3h-1zM697 495h1v5h-1zM698 399h1v6h-1zM698 441h1v3h-1zM699 397h1v5h-1zM699 554h1v7h-1zM699 595h1v5h-1zM699 623h1v3h-1zM700 436h1v5h-1zM700 599h1v7h-1zM702 377h1v7h-1zM702 609h1v5h-1zM703 372h1v5h-1zM703 491h1v5h-1zM704 553h1v5h-1zM706 366h1v6h-1zM706 572h1v4h-1zM707 367h1v4h-1zM708 540h1v4h-1zM710 500h1v6h-1zM711 608h1v4h-1zM713 577h1v7h-1zM715 479h1v4h-1zM715 508h1v5h-1zM720 471h1v5h-1zM727 601h1v4h-1zM730 447h1v5h-1zM730 525h1v5h-1zM732 454h1v5h-1zM734 396h1v7h-1zM734 564h1v3h-1zM735 580h1v3h-1zM736 459h1v3h-1zM737 399h1v4h-1zM737 511h1v7h-1zM739 450h1v6h-1z"/><path fill="#78ff00" d="M668 411h1v3h-1zM668 623h1v4h-1zM669 548h1v6h-1zM669 624h1v3h-1zM670 363h1v4h-1zM670 402h1v6h-1zM670 512h1v3h-1zM670 515h1v7h-1zM671 424h1v6h-1zM671 436h1v7h-1zM671 559h1v5h-1zM672 471h1v7h-1zM672 493h1v7h-1zM672 615h1v5h-1zM673 602h1v5h-1zM676 396h1v7h-1zM676 522h1v4h-1zM677 597h1v5h-1zM677 602h1v4h-1zM678 422h1v7h-1zM679 390h1v7h-1zM679 575h1v5h-1zM680 551h1v7h-1zM681 506h1v6h-1zM681 532h1v4h-1zM682 608h1v6h-1zM683 521h1v5h-1zM683 625h1v4h-1zM684 374h1v6h-1zM685 363h1v4h-1zM685 424h1v6h-1zM685 493h1v3h-1zM685 587h1v5h-1zM686 623h1v6h-1zM687 394h1v4h-1zM689 500h1v6h-1zM690 508h1v7h-1zM691 445h1v7h-1zM691 628h1v3h-1zM692 403h1v4h-1zM692 439h1v4h-1zM692 469h1v5h-1zM692 629h1v5h-1zM693 449h1v4h-1zM693 631h1v3h-1zM694 495h1v5h-1zM694 556h1v5h-1zM694 561h1v3h-1zM695 380h1v3h-1zM695 528h1v3h-1zM695 558h1v3h-1zM696 468h1v7h-1zM697 391h1v4h-1zM697 469h1v5h-1zM698 395h1v4h-1zM698 462h1v6h-1zM698 556h1v5h-1zM698 623h1v4h-1zM703 413h1v5h-1zM703 507h1v7h-1zM704 536h1v4h-1zM706 392h1v7h-1zM706 500h1v7h-1zM714 609h1v5h-1zM715 422h1v4h-1zM716 521h1v5h-1zM717 389h1v3h-1zM717 434h1v7h-1zM717 543h1v7h-1zM727 368h1v6h-1zM731 554h1v5h-1zM731 601h1v7h-1zM734 461h1v5h-1zM734 578h1v6h-1zM736 574h1v4h-1zM737 424h1v3h-1zM738 410h1v7h-1zM738 597h1v6h-1z"/><path fill="#00ff60" d="M668 414h1v3h-1zM668 627h1v7h-1zM669 429h1v5h-1zM671 493h1v4h-1zM671 571h1v6h-1zM673 549h1v3h-1zM673 593h1v6h-1zM674 539h1v3h-1zM674 552h1v3h-1zM675 452h1v7h-1zM676 435h1v4h-1zM677 363h1v7h-1zM677 549h1v4h-1zM678 548h1v7h-1zM682 495h1v6h-1zM682 632h1v4h-1zM687 363h1v6h-1zM687 500h1v7h-1zM689 635h1v1h-1zM690 628h1v7h-1zM691 440h1v5h-1zM691 467h1v5h-1zM695 500h1v4h-1zM696 395h1v5h-1zM696 406h1v4h-1zM697 464h1v5h-1zM700 403h1v6h-1zM700 409h1v6h-1zM700 477h1v5h-1zM701 600h1v6h-1zM702 491h1v7h-1zM703 377h1v7h-1zM703 387h1v4h-1zM703 431h1v3h-1zM703 520h1v7h-1zM703 575h1v5h-1zM704 413h1v5h-1zM704 529h1v7h-1zM704 579h1v4h-1zM705 428h1v4h-1zM705 463h1v5h-1zM706 453h1v6h-1zM706 604h1v5h-1zM707 610h1v7h-1zM708 584h1v3h-1zM709 363h1v4h-1zM709 410h1v4h-1zM709 433h1v5h-1zM709 438h1v4h-1zM709 488h1v5h-1zM709 524h1v6h-1zM711 383h1v6h-1zM712 439h1v7h-1zM713 462h1v3h-1zM713 524h1v7h-1zM715 498h1v4h-1zM715 586h1v7h-1zM715 620h1v7h-1zM716 529h1v6h-1zM716 578h1v6h-1zM717 594h1v3h-1zM718 370h1v3h-1zM718 428h1v3h-1zM719 445h1v7h-1zM720 370h1v7h-1zM720 396h1v7h-1zM720 467h1v4h-1zM720 517h1v3h-1zM721 558h1v5h-1zM721 591h1v3h-1zM722 573h1v4h-1zM722 614h1v6h-1zM723 370h1v7h-1zM723 377h1v3h-1zM723 552h1v7h-1zM723 562h1v5h-1zM723 635h1v1h-1zM724 431h1v5h-1zM724 443h1v3h-1zM724 492h1v6h-1zM724 613h1v3h-1zM725 605h1v5h-1zM726 372h1v6h-1zM726 592h1v5h-1zM727 634h1v2h-1zM728 375h1v5h-1zM728 425h1v6h-1zM729 394h1v3h-1zM730 395h1v7h-1zM730 480h1v3h-1zM730 564h1v5h-1zM730 569h1v4h-1zM731 475h1v6h-1zM732 574h1v5h-1zM732 621h1v7h-1zM733 386h1v3h-1zM733 464h1v7h-1zM733 577h1v5h-1zM734 442h1v7h-1zM734 475h1v4h-1zM735 595h1v5h-1zM735 600h1v7h-1zM736 447h1v3h-1zM737 413h1v5h-1zM738 457h1v6h-1zM739 394h1v7h-1zM739 433h1v5h-1zM739 538h1v6h-1zM739 596h1v5h-1zM739 634h1v2h-1zM741 363h1v3h-1zM741 473h1v4h-1zM742 363h1v3h-1zM742 535h1v4h-1zM742 607h1v3h-1zM743 366h1v5h-1zM743 431h1v3h-1zM743 456h1v3h-1zM743 615h1v3h-1zM744 453h1v7h-1zM746 435h1v7h-1zM747 547h1v3h-1zM748 552h1v4h-1zM749 464h1v5h-1zM749 563h1v5h-1zM750 527h1v3h-1zM751 567h1v5h-1zM752 448h1v6h-1zM752 511h1v4h-1zM752 597h1v3h-1zM752 624h1v6h-1zM753 380h1v7h-1zM753 572h1v5h-1zM753 598h1v7h-1zM753 619h1v4h-1zM753 623h1v7h-1zM754 557h1v5h-1zM755 507h1v4h-1zM755 591h1v6h-1zM755 597h1v3h-1zM756 394h1v6h-1zM756 551h1v7h-1zM758 372h1v7h-1zM758 387h1v6h-1zM758 406h1v3h-1zM759 363h1v5h-1zM760 442h1v5h-1zM760 457h1v4h-1zM760 501h1v7h-1zM760 598h1v6h-1zM760 617h1v6h-1zM763 497h1v6h-1zM764 530h1v6h-1zM765 596h1v4h-1zM765 604h1v4h-1zM766 512h1v3h-1zM767 420h1v5h-1zM768 600h1v7h-1zM768 616h1v4h-1zM768 633h1v3h-1zM769 363h1v4h-1zM769 510h1v6h-1zM769 601h1v4h-1zM770 468h1v4h-1zM770 518h1v3h-1zM770 595h1v7h-1zM771 430h1v7h-1zM772 419h1v5h-1zM772 542h1v4h-1zM773 400h1v4h-1zM773 480h1v7h-1zM773 555h1v7h-1zM774 433h1v3h-1zM774 611h1v4h-1zM775 561h1v4h-1zM777 401h1v4h-1zM777 538h1v4h-1zM778 535h1v6h-1zM779 512h1v6h-1zM779 555h1v3h-1zM780 437h1v5h-1zM780 537h1v3h-1zM781 363h1v6h-1zM782 363h1v3h-1zM782 412h1v7h-1zM783 508h1v4h-1zM783 534h1v4h-1zM783 558h1v7h-1zM784 375h1v4h-1zM784 481h1v3h-1zM784 496h1v6h-1zM785 603h1v7h-1zM786 432h1v4h-1zM786 463h1v3h-1zM786 472h1v4h-1zM786 630h1v6h-1zM787 470h1v6h-1zM787 506h1v7h-1zM787 605h1v5h-1zM788 399h1v3h-1zM788 459h1v4h-1zM788 533h1v5h-1zM788 538h1v4h-1zM789 407h1v6h-1zM789 458h1v6h-1zM789 477h1v3h-1zM790 551h1v7h-1zM790 585h1v5h-1zM790 630h1v6h-1zM791 477h1v6h-1zM791 492h1v4h-1zM791 502h1v3h-1zM791 534h1v7h-1zM792 514h1v5h-1zM792 579h1v7h-1zM793 431h1v4h-1zM793 489h1v3h-1zM794 411h1v7h-1zM794 486h1v6h-1zM794 595h1v3h-1zM796 530h1v3h-1zM796 578h1v4h-1zM796 592h1v6h-1zM797 385h1v6h-1zM798 383h1v4h-1zM798 397h1v4h-1zM798 401h1v5h-1zM799 562h1v4h-1zM799 629h1v5h-1zM800 394h1v3h-1zM800 503h1v6h-1zM801 433h1v4h-1zM801 518h1v4h-1zM801 539h1v4h-1zM801 550h1v6h-1zM801 569h1v7h-1zM802 531h1v7h-1zM803 444h1v7h-1zM803 522h1v4h-1zM804 366h1v5h-1zM804 401h1v6h-1zM804 427h1v6h-1zM804 564h1v5h-1zM805 376h1v5h-1zM805 404h1v7h-1zM805 459h1v6h-1zM805 577h1v6h-1zM805 626h1v6h-1zM806 440h1v5h-1zM806 489h1v7h-1zM806 618h1v3h-1zM807 453h1v3h-1zM807 487h1v6h-1zM807 565h1v4h-1zM810 380h1v4h-1zM811 426h1v3h-1zM811 513h1v6h-1zM812 569h1v6h-1zM813 629h1v4h-1zM814 401h1v5h-1zM814 435h1v7h-1zM814 559h1v4h-1zM815 376h1v5h-1zM815 397h1v6h-1zM816 363h1v4h-1zM816 374h1v4h-1zM816 413h1v7h-1zM816 540h1v6h-1zM817 486h1v5h-1zM818 369h1v5h-1zM819 478h1v3h-1zM819 503h1v5h-1zM820 452h1v6h-1zM820 624h1v3h-1zM822 436h1v6h-1zM822 451h1v6h-1zM822 501h1v4h-1zM823 474h1v4h-1zM823 502h1v3h-1zM823 630h1v6h-1zM824 427h1v6h-1zM824 454h1v7h-1zM824 562h1v7h-1zM826 445h1v6h-1zM826 519h1v4h-1zM826 531h1v3h-1zM827 405h1v3h-1zM827 497h1v7h-1zM827 566h1v7h-1zM828 438h1v4h-1zM828 445h1v4h-1zM828 449h1v3h-1zM828 481h1v6h-1zM829 375h1v3h-1zM830 453h1v3h-1zM830 630h1v6h-1zM831 363h1v3h-1zM831 408h1v7h-1zM832 374h1v6h-1zM832 464h1v5h-1zM832 487h1v3h-1zM832 490h1v3h-1zM832 500h1v7h-1zM832 602h1v3h-1zM834 399h1v6h-1zM835 424h1v4h-1zM835 488h1v6h-1zM835 507h1v5h-1zM835 574h1v7h-1zM836 438h1v7h-1zM836 445h1v4h-1zM837 376h1v7h-1zM837 427h1v4h-1zM837 551h1v3h-1zM838 529h1v3h-1zM838 569h1v3h-1zM838 603h1v3h-1z"/><path fill="#18ff00" d="M668 440h1v4h-1zM668 492h1v6h-1zM668 536h1v3h-1zM668 555h1v3h-1zM669 506h1v4h-1zM669 558h1v5h-1zM671 373h1v3h-1zM671 430h1v3h-1zM673 574h1v7h-1zM674 363h1v3h-1zM674 532h1v7h-1zM675 483h1v5h-1zM676 468h1v3h-1zM677 463h1v4h-1zM677 503h1v4h-1zM678 508h1v6h-1zM678 604h1v7h-1zM679 614h1v6h-1zM681 396h1v7h-1zM681 407h1v5h-1zM681 625h1v4h-1zM682 392h1v7h-1zM685 621h1v4h-1zM686 388h1v5h-1zM686 438h1v7h-1zM687 441h1v6h-1zM688 542h1v7h-1zM690 407h1v5h-1zM690 527h1v7h-1zM690 610h1v4h-1zM692 501h1v5h-1zM692 559h1v6h-1zM693 549h1v5h-1zM694 363h1v5h-1zM695 466h1v3h-1zM695 469h1v3h-1zM695 489h1v3h-1zM695 512h1v3h-1zM696 522h1v4h-1zM697 602h1v3h-1zM698 382h1v4h-1zM698 405h1v6h-1zM698 606h1v5h-1zM699 411h1v3h-1z"/><path fill="#30ff00" d="M668 448h1v4h-1zM668 577h1v6h-1zM669 397h1v5h-1zM669 402h1v3h-1zM669 554h1v4h-1zM670 433h1v7h-1zM670 547h1v5h-1zM670 623h1v4h-1zM671 363h1v6h-1zM671 401h1v6h-1zM671 583h1v6h-1zM671 631h1v3h-1zM672 372h1v6h-1zM673 429h1v7h-1zM673 561h1v3h-1zM673 623h1v4h-1zM674 502h1v6h-1zM674 567h1v6h-1zM676 392h1v4h-1zM676 409h1v4h-1zM677 376h1v3h-1zM677 523h1v4h-1zM678 555h1v7h-1zM678 626h1v4h-1zM679 468h1v3h-1zM680 511h1v6h-1zM681 433h1v6h-1zM681 478h1v5h-1zM682 369h1v6h-1zM682 429h1v7h-1zM682 477h1v4h-1zM683 533h1v3h-1zM683 605h1v6h-1zM684 380h1v7h-1zM684 476h1v3h-1zM684 532h1v5h-1zM684 537h1v3h-1zM684 573h1v4h-1zM684 582h1v3h-1zM684 601h1v6h-1zM685 404h1v6h-1zM685 447h1v4h-1zM685 468h1v7h-1zM685 506h1v6h-1zM685 554h1v7h-1zM685 592h1v5h-1zM686 562h1v3h-1zM686 573h1v6h-1zM687 384h1v6h-1zM687 416h1v4h-1zM687 431h1v3h-1zM688 462h1v4h-1zM689 363h1v3h-1zM689 384h1v6h-1zM689 535h1v4h-1zM689 571h1v7h-1zM690 395h1v5h-1zM691 406h1v5h-1zM691 457h1v6h-1zM691 476h1v4h-1zM691 604h1v4h-1zM691 608h1v4h-1zM692 517h1v5h-1zM694 399h1v7h-1zM695 363h1v3h-1zM695 397h1v3h-1zM695 524h1v4h-1zM695 575h1v5h-1zM695 618h1v5h-1zM695 623h1v5h-1zM696 381h1v4h-1zM696 410h1v3h-1zM696 460h1v5h-1zM697 534h1v7h-1zM697 549h1v3h-1zM697 614h1v4h-1zM698 537h1v3h-1zM698 576h1v6h-1z"/><path fill="#48ff00" d="M668 525h1v6h-1zM670 376h1v5h-1zM670 381h1v3h-1zM670 447h1v5h-1zM670 527h1v4h-1zM670 537h1v6h-1zM671 505h1v6h-1zM672 458h1v6h-1zM672 518h1v5h-1zM673 378h1v4h-1zM674 372h1v4h-1zM674 430h1v6h-1zM674 473h1v6h-1zM674 508h1v4h-1zM674 561h1v6h-1zM674 616h1v3h-1zM675 389h1v3h-1zM675 492h1v3h-1zM675 606h1v7h-1zM677 478h1v6h-1zM677 500h1v3h-1zM677 553h1v7h-1zM678 398h1v6h-1zM678 514h1v5h-1zM678 597h1v7h-1zM679 633h1v3h-1zM680 408h1v7h-1zM680 431h1v4h-1zM680 465h1v5h-1zM680 544h1v7h-1zM681 379h1v7h-1zM681 391h1v5h-1zM681 419h1v5h-1zM682 379h1v6h-1zM683 540h1v5h-1zM684 446h1v4h-1zM684 465h1v7h-1zM684 472h1v4h-1zM684 489h1v3h-1zM685 536h1v3h-1zM685 566h1v3h-1zM686 393h1v4h-1zM686 445h1v6h-1zM686 613h1v7h-1zM687 390h1v4h-1zM688 500h1v3h-1zM690 455h1v3h-1zM692 487h1v4h-1zM692 604h1v5h-1zM693 561h1v7h-1zM694 569h1v5h-1zM694 574h1v4h-1zM695 410h1v4h-1zM695 561h1v4h-1zM696 544h1v3h-1zM697 511h1v7h-1zM697 625h1v6h-1zM698 386h1v3h-1zM698 423h1v7h-1zM698 472h1v3h-1zM698 521h1v4h-1zM698 533h1v4h-1zM699 445h1v6h-1zM699 451h1v3h-1zM699 577h1v6h-1zM701 440h1v7h-1zM705 388h1v3h-1zM708 481h1v4h-1zM708 525h1v6h-1zM709 386h1v6h-1zM713 498h1v7h-1zM714 412h1v5h-1zM722 515h1v5h-1zM722 550h1v3h-1zM723 452h1v5h-1zM725 585h1v5h-1zM726 363h1v4h-1zM730 635h1v1h-1zM733 426h1v5h-1zM733 541h1v3h-1zM733 617h1v4h-1zM735 415h1v6h-1zM736 379h1v6h-1zM737 403h1v4h-1zM738 513h1v7h-1zM739 621h1v6h-1z"/><path fill="#00ff90" d="M668 616h1v7h-1zM669 571h1v3h-1zM670 473h1v7h-1zM674 413h1v7h-1zM678 489h1v4h-1zM680 383h1v5h-1zM681 427h1v6h-1zM681 445h1v7h-1zM681 539h1v6h-1zM682 481h1v7h-1zM682 591h1v5h-1zM685 385h1v5h-1zM686 502h1v3h-1zM687 523h1v7h-1zM688 378h1v4h-1zM688 486h1v3h-1zM689 539h1v7h-1zM690 570h1v3h-1zM690 617h1v4h-1zM695 446h1v6h-1zM700 384h1v3h-1zM700 488h1v6h-1zM700 541h1v6h-1zM701 592h1v5h-1zM701 612h1v5h-1zM701 631h1v5h-1zM702 444h1v6h-1zM702 629h1v4h-1zM705 474h1v3h-1zM707 436h1v6h-1zM708 363h1v5h-1zM708 442h1v3h-1zM708 531h1v6h-1zM709 414h1v4h-1zM709 418h1v4h-1zM710 403h1v7h-1zM711 468h1v4h-1zM711 528h1v7h-1zM712 367h1v7h-1zM712 497h1v7h-1zM713 540h1v5h-1zM713 591h1v3h-1zM714 417h1v3h-1zM714 472h1v3h-1zM715 380h1v6h-1zM715 533h1v7h-1zM715 600h1v6h-1zM716 394h1v3h-1zM716 451h1v6h-1zM716 518h1v3h-1zM716 560h1v7h-1zM717 428h1v6h-1zM717 514h1v3h-1zM719 363h1v5h-1zM719 373h1v6h-1zM719 379h1v3h-1zM719 387h1v7h-1zM719 515h1v7h-1zM719 601h1v4h-1zM719 613h1v4h-1zM719 617h1v3h-1zM720 520h1v4h-1zM721 421h1v5h-1zM721 517h1v4h-1zM721 541h1v3h-1zM721 544h1v3h-1zM722 396h1v4h-1zM722 597h1v4h-1zM723 405h1v6h-1zM724 410h1v3h-1zM724 456h1v3h-1zM724 513h1v6h-1zM724 626h1v4h-1zM725 495h1v7h-1zM725 531h1v7h-1zM726 422h1v3h-1zM726 512h1v4h-1zM728 368h1v7h-1zM728 516h1v5h-1zM728 632h1v3h-1zM729 494h1v4h-1zM730 414h1v6h-1zM730 420h1v4h-1zM730 504h1v5h-1zM730 583h1v6h-1zM731 444h1v3h-1zM731 493h1v4h-1zM731 581h1v4h-1zM732 601h1v5h-1zM733 443h1v6h-1zM733 478h1v3h-1zM734 457h1v4h-1zM734 618h1v6h-1zM735 504h1v6h-1zM736 624h1v5h-1zM738 571h1v7h-1zM738 594h1v3h-1zM738 607h1v4h-1zM739 416h1v6h-1zM740 381h1v5h-1zM740 471h1v4h-1zM740 479h1v3h-1zM740 575h1v4h-1zM741 500h1v7h-1zM741 546h1v4h-1zM741 621h1v5h-1zM742 383h1v6h-1zM743 427h1v4h-1zM743 604h1v5h-1zM744 504h1v7h-1zM744 529h1v4h-1zM744 631h1v5h-1zM745 498h1v3h-1zM747 478h1v7h-1zM747 612h1v3h-1zM748 398h1v6h-1zM748 545h1v4h-1zM748 594h1v5h-1zM749 374h1v7h-1zM749 522h1v6h-1zM749 624h1v6h-1zM749 630h1v6h-1zM750 530h1v5h-1zM751 373h1v3h-1zM751 423h1v3h-1zM751 543h1v3h-1zM751 581h1v7h-1zM752 380h1v7h-1zM752 616h1v3h-1zM752 619h1v5h-1zM753 413h1v6h-1zM753 445h1v5h-1zM754 567h1v3h-1zM755 459h1v6h-1zM756 363h1v7h-1zM756 403h1v4h-1zM756 509h1v5h-1zM756 604h1v5h-1zM757 477h1v4h-1zM757 510h1v4h-1zM757 621h1v7h-1zM757 628h1v5h-1zM759 454h1v5h-1zM760 437h1v5h-1zM760 479h1v6h-1zM761 429h1v6h-1zM761 585h1v3h-1zM761 635h1v1h-1zM762 370h1v4h-1zM762 420h1v4h-1zM762 505h1v5h-1zM762 520h1v4h-1zM762 552h1v5h-1zM763 363h1v4h-1zM763 428h1v4h-1zM763 479h1v7h-1zM764 600h1v6h-1zM765 551h1v7h-1zM767 413h1v7h-1zM767 535h1v3h-1zM767 597h1v5h-1zM768 394h1v5h-1zM768 434h1v6h-1zM768 571h1v3h-1zM769 403h1v4h-1zM769 450h1v3h-1zM770 545h1v5h-1zM770 566h1v4h-1zM771 496h1v3h-1zM772 567h1v4h-1zM772 590h1v7h-1zM773 424h1v7h-1zM773 501h1v4h-1zM773 551h1v4h-1zM773 587h1v6h-1zM774 496h1v7h-1zM775 414h1v5h-1zM775 444h1v5h-1zM775 513h1v7h-1zM775 536h1v3h-1zM778 401h1v6h-1zM779 385h1v7h-1zM779 455h1v5h-1zM779 587h1v4h-1zM779 628h1v6h-1zM780 388h1v3h-1zM780 449h1v4h-1zM780 517h1v4h-1zM780 531h1v6h-1zM780 618h1v3h-1zM781 421h1v5h-1zM781 554h1v4h-1zM782 586h1v4h-1zM784 420h1v3h-1zM785 390h1v4h-1zM785 394h1v3h-1zM785 438h1v6h-1zM785 449h1v6h-1zM786 420h1v5h-1zM786 481h1v3h-1zM786 489h1v4h-1zM786 530h1v7h-1zM786 580h1v5h-1zM787 369h1v7h-1zM787 575h1v3h-1zM787 600h1v5h-1zM788 394h1v5h-1zM788 508h1v5h-1zM788 513h1v7h-1zM789 507h1v7h-1zM789 577h1v5h-1zM790 609h1v6h-1zM791 417h1v5h-1zM791 428h1v3h-1zM791 596h1v7h-1zM792 363h1v7h-1zM792 379h1v5h-1zM792 489h1v6h-1zM792 519h1v7h-1zM792 631h1v5h-1zM793 523h1v7h-1zM794 464h1v7h-1zM795 447h1v5h-1zM795 488h1v4h-1zM795 523h1v5h-1zM796 472h1v6h-1zM796 617h1v5h-1zM797 557h1v7h-1zM798 620h1v7h-1zM799 447h1v3h-1zM800 363h1v5h-1zM800 382h1v5h-1zM800 418h1v7h-1zM800 449h1v7h-1zM801 514h1v4h-1zM801 529h1v5h-1zM802 379h1v6h-1zM802 417h1v4h-1zM802 489h1v3h-1zM802 543h1v3h-1zM803 571h1v3h-1zM803 622h1v6h-1zM804 371h1v5h-1zM804 587h1v6h-1zM804 593h1v4h-1zM806 584h1v5h-1zM807 437h1v3h-1zM808 458h1v3h-1zM809 405h1v3h-1zM809 500h1v4h-1zM809 519h1v7h-1zM811 463h1v6h-1zM811 490h1v5h-1zM811 580h1v3h-1zM811 602h1v5h-1zM811 619h1v4h-1zM812 566h1v3h-1zM812 582h1v3h-1zM813 398h1v4h-1zM813 477h1v5h-1zM813 510h1v3h-1zM813 540h1v4h-1zM814 372h1v3h-1zM814 424h1v3h-1zM815 363h1v3h-1zM815 473h1v6h-1zM815 502h1v4h-1zM815 615h1v7h-1zM815 632h1v4h-1zM816 367h1v7h-1zM816 397h1v5h-1zM816 599h1v5h-1zM817 450h1v6h-1zM817 498h1v5h-1zM817 565h1v6h-1zM818 382h1v4h-1zM818 450h1v5h-1zM818 586h1v6h-1zM819 398h1v7h-1zM819 440h1v6h-1zM819 521h1v6h-1zM819 623h1v5h-1zM820 458h1v6h-1zM820 598h1v6h-1zM821 390h1v3h-1zM821 451h1v3h-1zM821 466h1v4h-1zM821 475h1v5h-1zM822 390h1v5h-1zM822 496h1v5h-1zM822 516h1v7h-1zM823 566h1v5h-1zM824 418h1v3h-1zM824 488h1v5h-1zM824 632h1v4h-1zM825 555h1v5h-1zM825 571h1v7h-1zM826 584h1v6h-1zM826 628h1v5h-1zM827 370h1v3h-1zM827 504h1v5h-1zM828 385h1v3h-1zM828 411h1v3h-1zM829 503h1v4h-1zM830 549h1v7h-1zM830 566h1v5h-1zM831 366h1v3h-1zM831 563h1v5h-1zM831 629h1v3h-1zM832 363h1v7h-1zM832 436h1v3h-1zM833 397h1v7h-1zM834 432h1v4h-1zM834 593h1v4h-1zM834 624h1v7h-1zM835 394h1v3h-1zM835 526h1v7h-1zM835 556h1v6h-1zM836 433h1v5h-1zM836 548h1v7h-1zM836 566h1v6h-1zM837 406h1v3h-1zM837 522h1v3h-1zM838 495h1v4h-1zM838 499h1v7h-1z"/><path fill="#90ff00" d="M669 376h1v4h-1zM669 476h1v7h-1zM669 585h1v6h-1zM670 488h1v5h-1zM672 559h1v7h-1zM674 459h1v4h-1zM674 579h1v5h-1zM675 404h1v4h-1zM675 425h1v7h-1zM676 606h1v7h-1zM677 467h1v7h-1zM677 517h1v6h-1zM679 458h1v7h-1zM679 567h1v3h-1zM679 600h1v7h-1zM680 402h1v6h-1zM680 633h1v3h-1zM681 483h1v3h-1zM682 389h1v3h-1zM682 410h1v5h-1zM682 540h1v4h-1zM682 560h1v7h-1zM682 576h1v4h-1zM682 580h1v6h-1zM683 485h1v7h-1zM685 410h1v4h-1zM686 478h1v6h-1zM686 633h1v3h-1zM687 554h1v6h-1zM687 590h1v6h-1zM688 417h1v3h-1zM688 444h1v7h-1zM689 410h1v6h-1zM689 452h1v3h-1zM689 493h1v7h-1zM690 621h1v4h-1zM691 491h1v4h-1zM692 443h1v3h-1zM692 569h1v6h-1zM692 596h1v4h-1zM693 429h1v6h-1zM694 620h1v7h-1zM698 389h1v6h-1zM698 444h1v7h-1zM698 589h1v6h-1zM700 498h1v3h-1zM701 523h1v7h-1zM702 576h1v4h-1zM702 584h1v6h-1zM704 465h1v4h-1zM705 487h1v7h-1zM707 419h1v7h-1zM710 392h1v7h-1zM710 482h1v3h-1zM710 495h1v5h-1zM711 380h1v3h-1zM711 535h1v6h-1zM712 567h1v6h-1zM713 584h1v3h-1zM714 536h1v5h-1zM715 476h1v3h-1zM715 593h1v7h-1zM716 476h1v7h-1zM716 542h1v7h-1zM717 622h1v5h-1zM722 509h1v6h-1zM725 523h1v5h-1zM725 550h1v5h-1zM725 631h1v5h-1zM726 522h1v7h-1zM726 558h1v7h-1zM727 472h1v7h-1zM730 541h1v6h-1zM730 573h1v6h-1zM731 374h1v7h-1zM732 473h1v3h-1zM734 408h1v6h-1zM734 538h1v5h-1zM736 604h1v5h-1z"/><path fill="#00ffa8" d="M669 614h1v3h-1zM670 452h1v3h-1zM673 389h1v7h-1zM675 577h1v7h-1zM676 556h1v6h-1zM677 527h1v7h-1zM680 478h1v5h-1zM680 602h1v3h-1zM681 457h1v6h-1zM682 439h1v4h-1zM684 434h1v4h-1zM687 404h1v3h-1zM687 420h1v6h-1zM687 426h1v5h-1zM687 495h1v5h-1zM688 549h1v7h-1zM695 404h1v6h-1zM695 482h1v4h-1zM695 571h1v4h-1zM695 612h1v6h-1zM696 439h1v7h-1zM696 611h1v5h-1zM697 439h1v7h-1zM700 387h1v3h-1zM701 384h1v6h-1zM701 557h1v4h-1zM703 484h1v7h-1zM703 527h1v6h-1zM703 594h1v4h-1zM704 437h1v4h-1zM705 373h1v4h-1zM705 384h1v4h-1zM708 406h1v6h-1zM708 496h1v4h-1zM708 537h1v3h-1zM708 571h1v6h-1zM708 587h1v6h-1zM710 459h1v3h-1zM710 526h1v6h-1zM711 557h1v7h-1zM712 388h1v7h-1zM712 436h1v3h-1zM713 600h1v5h-1zM714 549h1v3h-1zM714 563h1v5h-1zM715 399h1v7h-1zM715 552h1v7h-1zM716 483h1v7h-1zM716 613h1v3h-1zM718 610h1v5h-1zM720 403h1v5h-1zM720 418h1v3h-1zM720 480h1v3h-1zM720 593h1v4h-1zM720 603h1v5h-1zM722 584h1v5h-1zM723 391h1v3h-1zM723 443h1v5h-1zM723 514h1v5h-1zM723 530h1v4h-1zM723 534h1v5h-1zM725 507h1v4h-1zM726 383h1v3h-1zM726 399h1v5h-1zM726 569h1v5h-1zM728 563h1v7h-1zM728 610h1v4h-1zM729 419h1v7h-1zM730 514h1v5h-1zM733 471h1v7h-1zM733 621h1v6h-1zM734 449h1v5h-1zM735 363h1v7h-1zM735 396h1v4h-1zM735 444h1v6h-1zM735 534h1v6h-1zM736 410h1v7h-1zM737 377h1v7h-1zM739 443h1v7h-1zM740 363h1v6h-1zM740 496h1v5h-1zM740 606h1v7h-1zM741 366h1v6h-1zM741 522h1v7h-1zM741 550h1v5h-1zM742 465h1v3h-1zM742 581h1v4h-1zM743 401h1v6h-1zM743 446h1v6h-1zM743 521h1v3h-1zM744 434h1v3h-1zM746 394h1v5h-1zM746 425h1v6h-1zM746 431h1v4h-1zM746 447h1v3h-1zM746 515h1v5h-1zM746 532h1v7h-1zM746 615h1v7h-1zM747 577h1v6h-1zM747 597h1v5h-1zM747 619h1v3h-1zM747 634h1v2h-1zM748 458h1v7h-1zM749 391h1v6h-1zM749 589h1v5h-1zM750 407h1v7h-1zM750 414h1v5h-1zM750 517h1v6h-1zM751 363h1v7h-1zM751 370h1v3h-1zM751 415h1v4h-1zM751 440h1v6h-1zM751 483h1v6h-1zM751 503h1v6h-1zM751 562h1v5h-1zM751 616h1v3h-1zM752 519h1v7h-1zM753 473h1v6h-1zM753 548h1v6h-1zM753 605h1v4h-1zM754 497h1v5h-1zM755 562h1v5h-1zM756 504h1v5h-1zM756 545h1v6h-1zM757 423h1v6h-1zM757 545h1v6h-1zM757 583h1v5h-1zM758 366h1v6h-1zM758 573h1v4h-1zM759 411h1v4h-1zM759 418h1v5h-1zM760 417h1v4h-1zM761 461h1v5h-1zM761 507h1v5h-1zM761 523h1v7h-1zM761 539h1v5h-1zM762 628h1v3h-1zM763 370h1v3h-1zM763 486h1v3h-1zM763 611h1v3h-1zM764 454h1v4h-1zM765 417h1v4h-1zM765 510h1v7h-1zM766 423h1v7h-1zM766 475h1v6h-1zM766 496h1v7h-1zM767 459h1v5h-1zM767 515h1v4h-1zM767 570h1v4h-1zM768 479h1v5h-1zM768 512h1v4h-1zM768 586h1v4h-1zM769 388h1v4h-1zM769 468h1v6h-1zM770 527h1v6h-1zM770 574h1v5h-1zM771 467h1v3h-1zM771 552h1v7h-1zM771 559h1v4h-1zM772 514h1v4h-1zM774 487h1v5h-1zM775 419h1v6h-1zM775 480h1v4h-1zM777 443h1v5h-1zM777 493h1v6h-1zM778 443h1v3h-1zM778 509h1v3h-1zM778 562h1v7h-1zM779 392h1v4h-1zM780 374h1v4h-1zM780 464h1v5h-1zM780 497h1v6h-1zM780 561h1v5h-1zM781 408h1v4h-1zM781 466h1v5h-1zM782 627h1v6h-1zM783 429h1v7h-1zM784 404h1v3h-1zM785 487h1v7h-1zM785 624h1v7h-1zM786 522h1v5h-1zM786 547h1v4h-1zM787 431h1v3h-1zM788 483h1v4h-1zM788 601h1v4h-1zM788 613h1v5h-1zM789 520h1v3h-1zM789 523h1v6h-1zM789 615h1v3h-1zM791 438h1v4h-1zM791 523h1v5h-1zM792 422h1v5h-1zM792 473h1v7h-1zM792 614h1v7h-1zM793 404h1v3h-1zM793 472h1v4h-1zM794 404h1v4h-1zM794 574h1v4h-1zM794 578h1v3h-1zM796 567h1v3h-1zM797 408h1v3h-1zM797 440h1v7h-1zM798 473h1v6h-1zM798 517h1v4h-1zM798 529h1v6h-1zM799 391h1v7h-1zM799 491h1v4h-1zM799 600h1v5h-1zM801 481h1v5h-1zM801 615h1v7h-1zM802 385h1v4h-1zM802 440h1v3h-1zM802 634h1v2h-1zM803 605h1v7h-1zM804 460h1v6h-1zM805 583h1v7h-1zM806 401h1v4h-1zM807 363h1v6h-1zM807 456h1v4h-1zM807 616h1v5h-1zM808 508h1v6h-1zM808 621h1v4h-1zM809 395h1v4h-1zM809 587h1v7h-1zM810 540h1v7h-1zM810 573h1v7h-1zM811 434h1v3h-1zM811 444h1v7h-1zM811 530h1v4h-1zM812 434h1v6h-1zM813 384h1v7h-1zM813 410h1v3h-1zM813 413h1v4h-1zM813 598h1v6h-1zM814 446h1v4h-1zM816 390h1v3h-1zM816 409h1v4h-1zM816 476h1v3h-1zM816 626h1v6h-1zM817 467h1v3h-1zM817 479h1v4h-1zM817 491h1v7h-1zM818 363h1v6h-1zM819 488h1v5h-1zM819 493h1v6h-1zM819 595h1v5h-1zM820 604h1v5h-1zM821 379h1v6h-1zM821 513h1v5h-1zM821 539h1v3h-1zM821 608h1v7h-1zM822 369h1v4h-1zM822 383h1v7h-1zM822 485h1v3h-1zM822 569h1v6h-1zM822 575h1v3h-1zM822 594h1v6h-1zM823 399h1v5h-1zM823 602h1v3h-1zM824 391h1v5h-1zM824 479h1v6h-1zM824 581h1v5h-1zM825 542h1v5h-1zM826 402h1v4h-1zM826 618h1v3h-1zM827 549h1v4h-1zM828 429h1v4h-1zM829 363h1v5h-1zM829 387h1v6h-1zM829 622h1v7h-1zM830 389h1v3h-1zM830 443h1v3h-1zM831 421h1v3h-1zM831 441h1v4h-1zM831 588h1v3h-1zM831 591h1v7h-1zM832 370h1v4h-1zM832 439h1v7h-1zM832 618h1v7h-1zM833 450h1v5h-1zM833 485h1v3h-1zM833 520h1v6h-1zM833 593h1v5h-1zM834 550h1v4h-1zM834 606h1v6h-1zM835 443h1v3h-1zM836 409h1v5h-1zM836 517h1v5h-1zM837 474h1v3h-1zM837 481h1v6h-1zM837 525h1v7h-1zM838 409h1v6h-1zM838 428h1v7h-1z"/><path fill="#00ff48" d="M670 627h1v5h-1zM671 407h1v7h-1zM672 394h1v5h-1zM672 593h1v6h-1zM673 552h1v4h-1zM673 569h1v5h-1zM676 375h1v7h-1zM677 415h1v7h-1zM678 375h1v6h-1zM678 386h1v3h-1zM678 531h1v5h-1zM679 428h1v7h-1zM681 463h1v4h-1zM682 488h1v7h-1zM683 372h1v7h-1zM684 634h1v2h-1zM685 475h1v6h-1zM686 509h1v3h-1zM686 604h1v3h-1zM686 620h1v3h-1zM690 539h1v4h-1zM691 463h1v4h-1zM693 423h1v6h-1zM693 453h1v6h-1zM695 496h1v4h-1zM696 576h1v3h-1zM698 493h1v3h-1zM700 372h1v7h-1zM700 557h1v7h-1zM700 592h1v3h-1zM701 379h1v5h-1zM701 433h1v7h-1zM701 480h1v4h-1zM701 597h1v3h-1zM702 395h1v5h-1zM702 567h1v5h-1zM703 443h1v7h-1zM703 604h1v7h-1zM704 384h1v6h-1zM704 462h1v3h-1zM704 493h1v5h-1zM705 424h1v4h-1zM705 565h1v3h-1zM706 423h1v6h-1zM706 484h1v7h-1zM706 612h1v5h-1zM707 571h1v5h-1zM707 576h1v3h-1zM708 383h1v5h-1zM708 485h1v3h-1zM708 488h1v3h-1zM708 491h1v5h-1zM709 578h1v3h-1zM709 584h1v3h-1zM710 372h1v4h-1zM710 428h1v4h-1zM711 582h1v6h-1zM712 456h1v6h-1zM712 584h1v4h-1zM713 512h1v7h-1zM713 545h1v4h-1zM713 608h1v4h-1zM714 484h1v4h-1zM715 414h1v3h-1zM715 426h1v7h-1zM716 526h1v3h-1zM717 550h1v4h-1zM718 615h1v7h-1zM719 554h1v4h-1zM721 572h1v4h-1zM722 369h1v5h-1zM722 411h1v5h-1zM723 436h1v7h-1zM723 559h1v3h-1zM724 466h1v3h-1zM724 475h1v6h-1zM724 527h1v6h-1zM725 368h1v5h-1zM725 538h1v6h-1zM727 438h1v4h-1zM727 536h1v3h-1zM728 400h1v7h-1zM728 504h1v5h-1zM729 530h1v7h-1zM730 369h1v5h-1zM730 402h1v7h-1zM730 437h1v5h-1zM730 457h1v6h-1zM730 483h1v3h-1zM731 370h1v4h-1zM731 429h1v6h-1zM731 463h1v6h-1zM731 566h1v4h-1zM732 441h1v7h-1zM732 512h1v7h-1zM732 529h1v6h-1zM733 412h1v3h-1zM733 517h1v6h-1zM733 537h1v4h-1zM734 380h1v5h-1zM735 385h1v5h-1zM735 431h1v6h-1zM736 421h1v3h-1zM737 614h1v6h-1zM737 624h1v6h-1zM738 508h1v5h-1zM738 561h1v3h-1zM740 391h1v5h-1zM740 570h1v5h-1zM740 586h1v6h-1zM741 633h1v3h-1zM742 389h1v4h-1zM742 393h1v7h-1zM742 558h1v7h-1zM742 614h1v5h-1zM744 497h1v7h-1zM746 415h1v3h-1zM746 474h1v4h-1zM746 546h1v6h-1zM747 463h1v6h-1zM747 485h1v5h-1zM747 544h1v3h-1zM749 599h1v7h-1zM750 455h1v7h-1zM750 511h1v6h-1zM750 546h1v5h-1zM750 556h1v3h-1zM750 626h1v7h-1zM751 412h1v3h-1zM751 472h1v5h-1zM752 476h1v4h-1zM752 495h1v4h-1zM752 552h1v3h-1zM752 565h1v6h-1zM752 600h1v3h-1zM753 370h1v3h-1zM753 429h1v4h-1zM753 537h1v7h-1zM754 374h1v3h-1zM754 400h1v3h-1zM754 511h1v7h-1zM754 607h1v7h-1zM756 380h1v4h-1zM756 432h1v3h-1zM756 442h1v6h-1zM756 564h1v6h-1zM757 391h1v3h-1zM757 463h1v3h-1zM758 382h1v5h-1zM758 445h1v4h-1zM760 390h1v6h-1zM760 404h1v3h-1zM761 628h1v7h-1zM762 477h1v6h-1zM762 487h1v7h-1zM762 591h1v5h-1zM764 443h1v6h-1zM764 574h1v5h-1zM766 507h1v5h-1zM767 432h1v6h-1zM768 377h1v4h-1zM768 410h1v6h-1zM768 448h1v6h-1zM768 536h1v6h-1zM769 474h1v3h-1zM769 491h1v5h-1zM769 542h1v5h-1zM769 593h1v5h-1zM770 451h1v6h-1zM770 521h1v6h-1zM770 579h1v6h-1zM770 602h1v6h-1zM771 483h1v3h-1zM771 533h1v5h-1zM772 373h1v5h-1zM772 518h1v5h-1zM772 546h1v7h-1zM772 618h1v3h-1zM773 388h1v4h-1zM773 523h1v6h-1zM773 570h1v7h-1zM774 413h1v6h-1zM774 522h1v7h-1zM775 399h1v3h-1zM775 520h1v7h-1zM776 387h1v7h-1zM776 422h1v7h-1zM776 452h1v6h-1zM778 581h1v4h-1zM778 591h1v3h-1zM778 610h1v7h-1zM779 481h1v4h-1zM780 544h1v4h-1zM781 632h1v4h-1zM782 532h1v7h-1zM784 392h1v3h-1zM784 573h1v5h-1zM786 411h1v5h-1zM786 601h1v4h-1zM787 396h1v5h-1zM787 476h1v4h-1zM787 561h1v3h-1zM787 632h1v4h-1zM788 370h1v5h-1zM788 503h1v5h-1zM788 631h1v5h-1zM789 388h1v4h-1zM790 410h1v6h-1zM790 470h1v6h-1zM790 567h1v4h-1zM791 483h1v5h-1zM791 548h1v7h-1zM793 581h1v7h-1zM793 620h1v6h-1zM794 399h1v5h-1zM794 452h1v6h-1zM794 492h1v3h-1zM794 548h1v7h-1zM794 585h1v5h-1zM796 485h1v3h-1zM796 517h1v4h-1zM796 610h1v4h-1zM797 369h1v6h-1zM798 372h1v6h-1zM798 483h1v5h-1zM798 616h1v4h-1zM799 363h1v5h-1zM799 512h1v7h-1zM800 425h1v6h-1zM800 591h1v4h-1zM801 376h1v4h-1zM801 445h1v3h-1zM801 500h1v4h-1zM802 408h1v3h-1zM802 558h1v4h-1zM803 501h1v3h-1zM804 539h1v5h-1zM804 616h1v6h-1zM805 381h1v4h-1zM806 368h1v4h-1zM806 411h1v5h-1zM806 531h1v4h-1zM807 475h1v3h-1zM808 430h1v7h-1zM808 489h1v3h-1zM808 514h1v6h-1zM808 592h1v5h-1zM809 450h1v6h-1zM809 487h1v6h-1zM809 504h1v4h-1zM809 526h1v6h-1zM809 539h1v3h-1zM809 549h1v6h-1zM809 604h1v7h-1zM810 398h1v7h-1zM810 530h1v4h-1zM810 534h1v6h-1zM811 363h1v5h-1zM811 451h1v7h-1zM811 534h1v5h-1zM811 563h1v4h-1zM811 583h1v3h-1zM811 590h1v5h-1zM812 440h1v6h-1zM812 483h1v7h-1zM814 525h1v4h-1zM815 467h1v6h-1zM815 479h1v4h-1zM816 519h1v4h-1zM816 593h1v6h-1zM817 616h1v7h-1zM820 464h1v6h-1zM821 618h1v5h-1zM821 633h1v3h-1zM822 379h1v4h-1zM822 426h1v3h-1zM823 594h1v5h-1zM824 381h1v7h-1zM825 412h1v6h-1zM825 437h1v3h-1zM826 406h1v6h-1zM827 408h1v5h-1zM827 452h1v3h-1zM828 370h1v4h-1zM828 399h1v6h-1zM828 465h1v4h-1zM829 442h1v6h-1zM829 560h1v4h-1zM831 604h1v5h-1zM832 446h1v5h-1zM832 562h1v6h-1zM833 560h1v7h-1zM836 507h1v6h-1zM836 529h1v5h-1zM837 422h1v5h-1zM837 440h1v6h-1zM837 516h1v6h-1zM838 549h1v3h-1z"/><path fill="#00ff78" d="M671 589h1v4h-1zM672 438h1v3h-1zM672 590h1v3h-1zM674 386h1v3h-1zM674 521h1v5h-1zM675 414h1v5h-1zM677 560h1v6h-1zM678 461h1v3h-1zM679 415h1v4h-1zM680 421h1v5h-1zM681 491h1v3h-1zM681 629h1v3h-1zM683 545h1v3h-1zM684 442h1v4h-1zM685 451h1v6h-1zM686 431h1v7h-1zM686 607h1v6h-1zM688 372h1v6h-1zM689 399h1v4h-1zM690 488h1v7h-1zM691 363h1v3h-1zM692 423h1v7h-1zM692 614h1v3h-1zM694 564h1v5h-1zM695 479h1v3h-1zM695 531h1v6h-1zM695 585h1v6h-1zM698 585h1v4h-1zM699 573h1v4h-1zM700 459h1v4h-1zM701 390h1v5h-1zM702 363h1v7h-1zM702 529h1v7h-1zM702 541h1v6h-1zM703 391h1v3h-1zM704 502h1v7h-1zM705 408h1v6h-1zM706 530h1v4h-1zM706 569h1v3h-1zM707 554h1v4h-1zM707 596h1v6h-1zM707 602h1v5h-1zM708 423h1v7h-1zM708 471h1v7h-1zM708 478h1v3h-1zM708 619h1v6h-1zM709 367h1v5h-1zM709 478h1v4h-1zM710 414h1v6h-1zM710 517h1v5h-1zM710 563h1v6h-1zM710 597h1v7h-1zM710 608h1v7h-1zM710 635h1v1h-1zM711 433h1v7h-1zM711 475h1v3h-1zM711 503h1v7h-1zM712 462h1v4h-1zM712 469h1v7h-1zM712 588h1v5h-1zM713 468h1v5h-1zM713 473h1v5h-1zM714 363h1v7h-1zM714 552h1v6h-1zM714 635h1v1h-1zM715 546h1v6h-1zM716 514h1v4h-1zM717 383h1v6h-1zM718 488h1v7h-1zM718 593h1v5h-1zM719 572h1v7h-1zM719 625h1v6h-1zM720 460h1v7h-1zM720 491h1v4h-1zM721 403h1v4h-1zM721 430h1v7h-1zM721 446h1v4h-1zM721 594h1v5h-1zM721 603h1v4h-1zM722 620h1v3h-1zM723 399h1v6h-1zM723 429h1v4h-1zM723 491h1v6h-1zM723 603h1v3h-1zM723 606h1v5h-1zM724 394h1v6h-1zM724 481h1v4h-1zM724 519h1v5h-1zM724 524h1v3h-1zM724 549h1v3h-1zM724 557h1v3h-1zM725 484h1v4h-1zM726 395h1v4h-1zM726 621h1v3h-1zM727 393h1v6h-1zM727 404h1v5h-1zM727 424h1v4h-1zM727 435h1v3h-1zM727 628h1v6h-1zM728 492h1v7h-1zM729 474h1v6h-1zM731 388h1v6h-1zM731 411h1v3h-1zM731 459h1v4h-1zM731 570h1v5h-1zM733 379h1v7h-1zM735 516h1v3h-1zM736 442h1v5h-1zM736 456h1v3h-1zM736 465h1v3h-1zM736 468h1v7h-1zM737 572h1v6h-1zM738 422h1v4h-1zM738 524h1v4h-1zM738 617h1v5h-1zM739 479h1v7h-1zM739 589h1v7h-1zM740 451h1v3h-1zM740 475h1v4h-1zM740 558h1v6h-1zM741 453h1v5h-1zM741 488h1v7h-1zM742 366h1v6h-1zM744 444h1v3h-1zM744 477h1v7h-1zM744 537h1v5h-1zM745 456h1v7h-1zM745 583h1v6h-1zM745 589h1v4h-1zM745 605h1v4h-1zM745 629h1v4h-1zM745 633h1v3h-1zM746 378h1v7h-1zM746 630h1v5h-1zM747 531h1v6h-1zM748 363h1v4h-1zM748 488h1v6h-1zM750 599h1v4h-1zM751 489h1v7h-1zM751 576h1v5h-1zM752 377h1v3h-1zM752 392h1v7h-1zM752 612h1v4h-1zM753 391h1v6h-1zM753 397h1v7h-1zM753 456h1v5h-1zM753 554h1v6h-1zM754 450h1v5h-1zM754 466h1v6h-1zM755 600h1v3h-1zM755 628h1v6h-1zM756 384h1v3h-1zM756 463h1v6h-1zM757 588h1v7h-1zM758 439h1v6h-1zM758 538h1v5h-1zM758 550h1v6h-1zM759 423h1v4h-1zM760 368h1v3h-1zM760 508h1v4h-1zM760 608h1v5h-1zM761 536h1v3h-1zM761 561h1v6h-1zM762 363h1v7h-1zM762 411h1v3h-1zM762 557h1v6h-1zM763 510h1v6h-1zM763 596h1v6h-1zM764 579h1v3h-1zM764 587h1v4h-1zM765 441h1v6h-1zM765 591h1v5h-1zM766 541h1v7h-1zM766 625h1v5h-1zM767 452h1v7h-1zM767 526h1v5h-1zM767 538h1v5h-1zM767 555h1v3h-1zM768 363h1v4h-1zM768 546h1v4h-1zM769 377h1v5h-1zM769 477h1v7h-1zM769 535h1v7h-1zM769 559h1v4h-1zM769 631h1v5h-1zM770 422h1v4h-1zM770 438h1v5h-1zM770 533h1v5h-1zM770 590h1v5h-1zM771 377h1v6h-1zM771 486h1v7h-1zM771 580h1v4h-1zM772 454h1v5h-1zM772 489h1v3h-1zM774 373h1v5h-1zM774 392h1v3h-1zM774 509h1v7h-1zM774 529h1v6h-1zM774 607h1v4h-1zM774 631h1v5h-1zM775 464h1v6h-1zM775 533h1v3h-1zM776 400h1v7h-1zM776 491h1v6h-1zM776 509h1v3h-1zM777 378h1v4h-1zM777 410h1v7h-1zM777 563h1v6h-1zM778 556h1v6h-1zM778 588h1v3h-1zM779 418h1v7h-1zM779 449h1v3h-1zM779 571h1v5h-1zM780 394h1v6h-1zM780 574h1v5h-1zM781 548h1v6h-1zM781 593h1v5h-1zM782 373h1v5h-1zM782 510h1v5h-1zM782 515h1v5h-1zM783 363h1v6h-1zM784 590h1v3h-1zM785 397h1v4h-1zM785 481h1v6h-1zM785 555h1v3h-1zM785 594h1v6h-1zM786 369h1v6h-1zM787 389h1v7h-1zM787 412h1v6h-1zM787 452h1v4h-1zM787 488h1v5h-1zM787 499h1v7h-1zM787 529h1v4h-1zM788 463h1v3h-1zM790 497h1v7h-1zM790 519h1v7h-1zM790 547h1v4h-1zM790 602h1v4h-1zM791 577h1v6h-1zM792 384h1v7h-1zM792 507h1v7h-1zM792 624h1v7h-1zM793 467h1v5h-1zM794 508h1v3h-1zM794 511h1v7h-1zM794 603h1v6h-1zM795 411h1v5h-1zM795 628h1v4h-1zM796 561h1v6h-1zM798 508h1v4h-1zM799 398h1v4h-1zM799 574h1v4h-1zM799 615h1v5h-1zM800 456h1v5h-1zM801 496h1v4h-1zM801 511h1v3h-1zM801 556h1v6h-1zM802 368h1v7h-1zM802 430h1v7h-1zM802 576h1v4h-1zM803 581h1v7h-1zM803 617h1v5h-1zM804 602h1v5h-1zM805 510h1v7h-1zM806 470h1v7h-1zM807 466h1v3h-1zM807 591h1v7h-1zM808 375h1v5h-1zM808 444h1v7h-1zM808 475h1v6h-1zM809 390h1v5h-1zM809 626h1v4h-1zM811 544h1v4h-1zM812 390h1v6h-1zM812 420h1v5h-1zM812 428h1v6h-1zM812 609h1v7h-1zM813 452h1v3h-1zM814 576h1v5h-1zM814 587h1v6h-1zM814 623h1v4h-1zM815 389h1v5h-1zM815 403h1v7h-1zM815 531h1v6h-1zM815 561h1v6h-1zM816 479h1v5h-1zM816 534h1v6h-1zM816 584h1v3h-1zM817 416h1v5h-1zM817 551h1v4h-1zM817 558h1v3h-1zM819 527h1v4h-1zM819 613h1v4h-1zM820 573h1v5h-1zM820 627h1v5h-1zM821 393h1v3h-1zM821 598h1v3h-1zM822 510h1v3h-1zM822 548h1v4h-1zM822 566h1v3h-1zM822 629h1v4h-1zM822 633h1v3h-1zM823 524h1v6h-1zM824 620h1v7h-1zM825 374h1v6h-1zM825 484h1v5h-1zM825 520h1v3h-1zM826 415h1v5h-1zM826 534h1v3h-1zM826 537h1v5h-1zM826 580h1v4h-1zM827 435h1v3h-1zM827 586h1v6h-1zM828 374h1v7h-1zM828 522h1v4h-1zM828 581h1v7h-1zM829 448h1v7h-1zM829 510h1v5h-1zM830 513h1v4h-1zM830 517h1v4h-1zM830 621h1v5h-1zM831 568h1v5h-1zM831 623h1v6h-1zM832 469h1v7h-1zM832 578h1v5h-1zM833 438h1v5h-1zM833 610h1v5h-1zM834 493h1v6h-1zM835 459h1v4h-1zM835 494h1v5h-1zM835 627h1v3h-1zM836 382h1v7h-1zM837 568h1v3h-1zM838 558h1v7h-1z"/><path fill="#00ff30" d="M700 415h1v3h-1zM700 508h1v3h-1zM700 568h1v6h-1zM701 472h1v5h-1zM701 542h1v4h-1zM702 626h1v3h-1zM703 611h1v5h-1zM704 481h1v5h-1zM704 486h1v7h-1zM705 418h1v3h-1zM705 484h1v3h-1zM706 440h1v5h-1zM706 527h1v3h-1zM706 541h1v5h-1zM706 582h1v6h-1zM706 630h1v3h-1zM709 392h1v5h-1zM709 533h1v6h-1zM709 568h1v3h-1zM710 540h1v7h-1zM710 621h1v7h-1zM712 381h1v7h-1zM712 413h1v4h-1zM713 563h1v6h-1zM713 597h1v3h-1zM714 624h1v3h-1zM716 363h1v5h-1zM716 397h1v7h-1zM716 573h1v5h-1zM717 481h1v4h-1zM717 507h1v7h-1zM718 438h1v4h-1zM719 487h1v5h-1zM719 498h1v5h-1zM720 567h1v7h-1zM720 577h1v6h-1zM721 521h1v7h-1zM722 406h1v5h-1zM723 394h1v5h-1zM723 476h1v3h-1zM723 539h1v7h-1zM723 625h1v6h-1zM724 380h1v7h-1zM724 425h1v6h-1zM724 485h1v3h-1zM724 630h1v5h-1zM725 544h1v6h-1zM727 553h1v6h-1zM728 363h1v5h-1zM728 454h1v7h-1zM728 536h1v7h-1zM731 400h1v5h-1zM731 435h1v4h-1zM732 380h1v7h-1zM732 387h1v7h-1zM732 476h1v4h-1zM732 545h1v4h-1zM732 579h1v6h-1zM733 415h1v4h-1zM733 488h1v3h-1zM733 491h1v6h-1zM733 559h1v6h-1zM733 573h1v4h-1zM734 493h1v5h-1zM734 519h1v6h-1zM734 561h1v3h-1zM735 540h1v6h-1zM736 434h1v5h-1zM736 495h1v7h-1zM736 557h1v5h-1zM736 562h1v5h-1zM737 532h1v4h-1zM737 604h1v6h-1zM738 417h1v5h-1zM738 481h1v7h-1zM739 388h1v3h-1z"/><path fill="#00ff18" d="M700 511h1v5h-1zM702 503h1v6h-1zM702 560h1v7h-1zM703 559h1v3h-1zM704 592h1v3h-1zM705 609h1v5h-1zM706 609h1v3h-1zM707 413h1v3h-1zM707 509h1v5h-1zM708 430h1v7h-1zM709 372h1v3h-1zM710 492h1v3h-1zM711 523h1v5h-1zM711 573h1v4h-1zM713 594h1v3h-1zM714 614h1v6h-1zM716 387h1v7h-1zM717 615h1v3h-1zM718 373h1v4h-1zM718 522h1v5h-1zM720 383h1v7h-1zM720 548h1v3h-1zM721 396h1v3h-1zM721 477h1v6h-1zM721 483h1v7h-1zM721 563h1v5h-1zM722 400h1v6h-1zM724 579h1v6h-1zM724 592h1v6h-1zM724 598h1v7h-1zM727 421h1v3h-1zM727 463h1v6h-1zM728 573h1v3h-1zM729 368h1v3h-1zM729 562h1v7h-1zM730 434h1v3h-1zM730 547h1v3h-1zM730 597h1v6h-1zM731 559h1v7h-1zM732 480h1v4h-1zM732 491h1v6h-1zM733 403h1v4h-1zM734 614h1v4h-1zM735 375h1v5h-1zM735 472h1v3h-1zM737 506h1v5h-1zM737 610h1v4h-1zM738 375h1v3h-1zM738 587h1v4h-1zM739 462h1v6h-1z"/><path fill="#00ffd8" d="M740 369h1v7h-1zM740 544h1v3h-1zM740 579h1v7h-1zM740 635h1v1h-1zM742 451h1v7h-1zM742 480h1v6h-1zM743 462h1v6h-1zM743 540h1v6h-1zM743 585h1v5h-1zM744 372h1v7h-1zM744 565h1v3h-1zM744 595h1v4h-1zM744 606h1v3h-1zM744 614h1v5h-1zM744 623h1v3h-1zM745 560h1v6h-1zM745 580h1v3h-1zM746 412h1v3h-1zM746 442h1v5h-1zM746 457h1v4h-1zM747 573h1v4h-1zM747 590h1v7h-1zM747 625h1v3h-1zM748 371h1v7h-1zM749 443h1v3h-1zM749 469h1v6h-1zM749 509h1v5h-1zM749 551h1v7h-1zM749 619h1v5h-1zM750 436h1v7h-1zM750 472h1v5h-1zM750 596h1v3h-1zM750 633h1v3h-1zM751 400h1v7h-1zM751 446h1v3h-1zM751 449h1v5h-1zM751 477h1v6h-1zM751 619h1v7h-1zM752 592h1v5h-1zM753 437h1v5h-1zM753 450h1v6h-1zM754 363h1v6h-1zM754 582h1v7h-1zM755 433h1v7h-1zM755 455h1v4h-1zM755 547h1v4h-1zM755 585h1v6h-1zM756 558h1v3h-1zM757 520h1v6h-1zM758 457h1v6h-1zM759 440h1v5h-1zM759 514h1v3h-1zM759 525h1v4h-1zM759 584h1v5h-1zM760 407h1v5h-1zM761 605h1v6h-1zM763 416h1v3h-1zM763 440h1v3h-1zM763 544h1v5h-1zM764 409h1v5h-1zM764 470h1v7h-1zM764 509h1v7h-1zM765 363h1v5h-1zM766 449h1v6h-1zM766 466h1v5h-1zM766 481h1v3h-1zM766 552h1v6h-1zM767 493h1v3h-1zM768 372h1v5h-1zM768 399h1v7h-1zM768 428h1v6h-1zM768 498h1v5h-1zM768 623h1v3h-1zM769 586h1v4h-1zM770 390h1v6h-1zM770 432h1v6h-1zM770 630h1v6h-1zM771 440h1v7h-1zM771 628h1v3h-1zM772 445h1v4h-1zM773 404h1v4h-1zM774 428h1v5h-1zM774 625h1v6h-1zM775 375h1v7h-1zM775 552h1v6h-1zM775 580h1v7h-1zM775 610h1v4h-1zM777 373h1v5h-1zM778 578h1v3h-1zM779 435h1v6h-1zM779 452h1v3h-1zM779 634h1v2h-1zM780 368h1v6h-1zM780 416h1v6h-1zM781 418h1v3h-1zM782 488h1v5h-1zM782 559h1v3h-1zM782 612h1v7h-1zM783 468h1v6h-1zM784 372h1v3h-1zM784 423h1v4h-1zM784 452h1v7h-1zM784 526h1v7h-1zM784 543h1v5h-1zM784 607h1v4h-1zM785 591h1v3h-1zM788 477h1v6h-1zM788 546h1v7h-1zM789 363h1v4h-1zM789 371h1v4h-1zM789 413h1v4h-1zM790 426h1v3h-1zM790 463h1v7h-1zM791 516h1v4h-1zM791 541h1v7h-1zM792 562h1v7h-1zM793 509h1v3h-1zM795 475h1v3h-1zM795 549h1v7h-1zM796 411h1v5h-1zM796 450h1v3h-1zM796 537h1v4h-1zM797 484h1v5h-1zM797 580h1v5h-1zM798 394h1v3h-1zM798 449h1v6h-1zM798 553h1v7h-1zM798 566h1v7h-1zM798 601h1v4h-1zM799 592h1v4h-1zM800 496h1v7h-1zM800 523h1v5h-1zM800 554h1v6h-1zM800 580h1v6h-1zM800 630h1v3h-1zM801 534h1v5h-1zM801 562h1v7h-1zM801 590h1v7h-1zM801 622h1v3h-1zM802 471h1v5h-1zM802 591h1v7h-1zM803 466h1v6h-1zM803 476h1v5h-1zM803 486h1v4h-1zM803 549h1v7h-1zM804 548h1v6h-1zM805 593h1v7h-1zM807 389h1v7h-1zM807 478h1v3h-1zM807 493h1v6h-1zM807 569h1v4h-1zM807 598h1v5h-1zM808 469h1v6h-1zM809 441h1v6h-1zM810 405h1v6h-1zM810 443h1v4h-1zM810 465h1v7h-1zM810 485h1v7h-1zM812 375h1v6h-1zM812 562h1v4h-1zM812 616h1v4h-1zM814 383h1v6h-1zM814 450h1v6h-1zM814 500h1v6h-1zM815 414h1v3h-1zM815 422h1v4h-1zM816 402h1v4h-1zM816 448h1v7h-1zM816 506h1v6h-1zM816 632h1v4h-1zM817 571h1v7h-1zM818 378h1v4h-1zM818 565h1v4h-1zM819 379h1v3h-1zM819 499h1v4h-1zM819 546h1v5h-1zM819 570h1v6h-1zM820 363h1v4h-1zM820 367h1v7h-1zM820 494h1v6h-1zM821 433h1v5h-1zM821 454h1v6h-1zM821 553h1v3h-1zM821 623h1v4h-1zM822 463h1v5h-1zM823 367h1v3h-1zM823 441h1v4h-1zM823 540h1v3h-1zM823 621h1v4h-1zM824 510h1v4h-1zM824 514h1v3h-1zM824 548h1v6h-1zM824 609h1v5h-1zM825 478h1v6h-1zM825 606h1v7h-1zM827 445h1v3h-1zM828 388h1v6h-1zM828 500h1v6h-1zM828 554h1v4h-1zM829 455h1v4h-1zM829 548h1v5h-1zM830 449h1v4h-1zM830 532h1v5h-1zM830 584h1v7h-1zM831 396h1v5h-1zM831 528h1v4h-1zM831 598h1v6h-1zM832 429h1v7h-1zM832 524h1v4h-1zM834 471h1v3h-1zM834 504h1v7h-1zM834 534h1v3h-1zM834 554h1v7h-1zM834 580h1v6h-1zM835 584h1v6h-1zM836 375h1v7h-1zM836 559h1v7h-1zM837 363h1v4h-1zM837 373h1v3h-1zM837 467h1v4h-1zM837 583h1v4h-1zM837 618h1v3h-1zM838 405h1v4h-1zM838 552h1v6h-1z"/><path fill="#00ffc0" d="M740 408h1v6h-1zM740 458h1v7h-1zM740 501h1v7h-1zM740 508h1v4h-1zM741 532h1v4h-1zM741 617h1v4h-1zM742 458h1v7h-1zM742 505h1v3h-1zM743 439h1v7h-1zM743 452h1v4h-1zM743 553h1v3h-1zM744 368h1v4h-1zM744 559h1v6h-1zM744 584h1v4h-1zM745 472h1v6h-1zM746 390h1v4h-1zM746 403h1v5h-1zM746 610h1v5h-1zM746 635h1v1h-1zM747 366h1v4h-1zM748 429h1v6h-1zM749 568h1v3h-1zM750 376h1v5h-1zM751 465h1v7h-1zM751 509h1v6h-1zM751 572h1v4h-1zM751 591h1v7h-1zM751 626h1v6h-1zM752 405h1v4h-1zM753 426h1v3h-1zM754 485h1v5h-1zM755 476h1v3h-1zM755 530h1v7h-1zM755 617h1v5h-1zM756 479h1v6h-1zM756 537h1v4h-1zM757 374h1v5h-1zM757 440h1v5h-1zM757 502h1v4h-1zM757 562h1v5h-1zM757 567h1v7h-1zM758 449h1v3h-1zM758 476h1v4h-1zM758 598h1v5h-1zM758 628h1v4h-1zM759 427h1v7h-1zM760 452h1v5h-1zM760 485h1v6h-1zM760 512h1v5h-1zM760 563h1v7h-1zM761 397h1v5h-1zM762 618h1v3h-1zM763 373h1v7h-1zM763 393h1v5h-1zM763 494h1v3h-1zM763 527h1v6h-1zM764 465h1v5h-1zM764 567h1v7h-1zM766 390h1v5h-1zM766 395h1v5h-1zM767 383h1v4h-1zM767 543h1v5h-1zM767 593h1v4h-1zM767 624h1v6h-1zM769 547h1v7h-1zM771 528h1v5h-1zM771 597h1v7h-1zM772 403h1v5h-1zM772 523h1v4h-1zM772 613h1v5h-1zM773 436h1v6h-1zM773 603h1v5h-1zM773 614h1v6h-1zM775 571h1v4h-1zM776 432h1v5h-1zM776 516h1v6h-1zM778 475h1v7h-1zM779 396h1v4h-1zM779 406h1v7h-1zM779 460h1v3h-1zM779 463h1v5h-1zM779 518h1v5h-1zM779 591h1v5h-1zM779 600h1v6h-1zM780 602h1v3h-1zM782 525h1v7h-1zM782 562h1v4h-1zM782 633h1v3h-1zM785 366h1v6h-1zM785 372h1v6h-1zM785 499h1v5h-1zM785 542h1v6h-1zM786 585h1v7h-1zM787 380h1v4h-1zM787 467h1v3h-1zM788 375h1v3h-1zM790 416h1v4h-1zM792 394h1v6h-1zM793 512h1v7h-1zM793 530h1v3h-1zM793 592h1v5h-1zM794 368h1v5h-1zM794 373h1v6h-1zM794 632h1v4h-1zM795 485h1v3h-1zM795 590h1v4h-1zM795 605h1v3h-1zM795 632h1v4h-1zM796 400h1v7h-1zM796 488h1v7h-1zM796 551h1v7h-1zM797 495h1v4h-1zM797 635h1v1h-1zM799 465h1v5h-1zM800 397h1v6h-1zM800 408h1v3h-1zM800 431h1v5h-1zM800 489h1v3h-1zM800 633h1v3h-1zM801 405h1v5h-1zM802 375h1v4h-1zM802 389h1v5h-1zM802 394h1v3h-1zM802 492h1v4h-1zM802 502h1v7h-1zM802 586h1v5h-1zM802 608h1v6h-1zM806 419h1v7h-1zM806 589h1v4h-1zM806 609h1v3h-1zM806 612h1v6h-1zM807 628h1v3h-1zM808 404h1v5h-1zM808 576h1v7h-1zM808 617h1v4h-1zM809 387h1v3h-1zM809 563h1v7h-1zM809 611h1v3h-1zM810 498h1v7h-1zM810 580h1v6h-1zM810 624h1v6h-1zM811 623h1v7h-1zM812 410h1v6h-1zM812 509h1v3h-1zM812 516h1v7h-1zM812 590h1v3h-1zM813 465h1v4h-1zM813 469h1v3h-1zM813 530h1v3h-1zM814 406h1v3h-1zM814 490h1v7h-1zM814 605h1v5h-1zM815 454h1v5h-1zM815 524h1v7h-1zM815 582h1v3h-1zM816 512h1v7h-1zM816 546h1v4h-1zM816 550h1v7h-1zM816 569h1v4h-1zM817 393h1v3h-1zM818 408h1v5h-1zM818 526h1v4h-1zM818 554h1v7h-1zM818 602h1v7h-1zM819 416h1v4h-1zM819 551h1v6h-1zM820 388h1v6h-1zM820 403h1v4h-1zM820 557h1v5h-1zM820 567h1v6h-1zM821 372h1v3h-1zM821 429h1v4h-1zM821 630h1v3h-1zM823 478h1v6h-1zM823 533h1v7h-1zM823 574h1v3h-1zM823 625h1v5h-1zM824 433h1v6h-1zM824 575h1v3h-1zM824 578h1v3h-1zM825 440h1v3h-1zM825 601h1v5h-1zM825 630h1v3h-1zM826 412h1v3h-1zM826 486h1v3h-1zM826 633h1v3h-1zM827 601h1v4h-1zM827 628h1v5h-1zM828 487h1v6h-1zM829 507h1v3h-1zM829 619h1v3h-1zM830 542h1v7h-1zM831 415h1v6h-1zM831 424h1v5h-1zM831 555h1v3h-1zM832 399h1v7h-1zM832 608h1v3h-1zM832 615h1v3h-1zM832 629h1v6h-1zM833 386h1v5h-1zM833 461h1v3h-1zM833 471h1v5h-1zM833 513h1v7h-1zM834 392h1v7h-1zM834 415h1v7h-1zM835 452h1v7h-1zM835 547h1v4h-1zM836 593h1v6h-1zM836 602h1v4h-1zM837 629h1v3h-1zM838 366h1v3h-1z"/><path fill="#00fff0" d="M740 539h1v5h-1zM742 589h1v7h-1zM744 460h1v4h-1zM744 511h1v7h-1zM749 475h1v5h-1zM751 632h1v3h-1zM754 419h1v7h-1zM761 474h1v7h-1zM782 402h1v6h-1zM785 401h1v5h-1zM788 494h1v5h-1zM792 452h1v7h-1zM818 401h1v3h-1zM820 578h1v5h-1zM826 451h1v4h-1zM827 592h1v5h-1zM830 436h1v3h-1zM832 514h1v3h-1zM834 427h1v5h-1zM837 383h1v7h-1z"/><path fill="#0078ff" d="M740 592h1v3h-1zM764 462h1v3h-1zM764 556h1v6h-1zM791 608h1v3h-1zM792 391h1v3h-1zM797 540h1v7h-1zM801 401h1v4h-1zM821 493h1v7h-1zM822 399h1v6h-1zM826 570h1v5h-1z"/><path fill="#00c0ff" d="M742 554h1v4h-1zM810 570h1v3h-1zM820 632h1v4h-1zM826 612h1v6h-1zM828 541h1v5h-1z"/><path fill="#0090ff" d="M745 593h1v5h-1zM750 499h1v5h-1zM755 537h1v7h-1zM781 369h1v6h-1z"/><path fill="#00a8ff" d="M796 548h1v3h-1zM798 550h1v3h-1zM832 595h1v4h-1z"/>
<line x1="38" y1="399.5" x2="411" y2="399.5" stroke="#a8a8a8" stroke-width="1" stroke-dasharray="7 2" stroke-dashoffset="0"/>
<line x1="38" y1="426.5" x2="411" y2="426.5" stroke="#404040" stroke-width="1" stroke-dasharray="7 2" stroke-dashoffset="0"/>
<line x1="38" y1="453.5" x2="411" y2="453.5" stroke="#a8a8a8" stroke-width="1" stroke-dasharray="7 2" stroke-dashoffset="0"/>
<line x1="38" y1="481.5" x2="411" y2="481.5" stroke="#404040" stroke-width="1" stroke-dasharray="7 2" stroke-dashoffset="0"/>
<line x1="38" y1="508.5" x2="411" y2="508.5" stroke="#a8a8a8" stroke-width="1" stroke-dasharray="7 2" stroke-dashoffset="0"/>
<line x1="38" y1="535.5" x2="411" y2="535.5" stroke="#404040" stroke-width="1" stroke-dasharray="7 2" stroke-dashoffset="0"/>
<line x1="38" y1="563.5" x2="411" y2="563.5" stroke="#a8a8a8" stroke-width="1" stroke-dasharray="7 2" stroke-dashoffset="0"/>
<line x1="38" y1="590.5" x2="411" y2="590.5" stroke="#404040" stroke-width="1" stroke-dasharray="7 2" stroke-dashoffset="0"/>
<line x1="79.5" y1="388" x2="79.5" y2="602" stroke="#b0b0b0" stroke-width="1" stroke-dasharray="4 3" stroke-dashoffset="0"/>
<line x1="179.5" y1="388" x2="179.5" y2="602" stroke="#b0b0b0" stroke-width="1" stroke-dasharray="4 3" stroke-dashoffset="0"/>
<line x1="279.5" y1="388" x2="279.5" y2="602" stroke="#b0b0b0" stroke-width="1" stroke-dasharray="4 3" stroke-dashoffset="0"/>
<line x1="379.5" y1="388" x2="379.5" y2="602" stroke="#b0b0b0" stroke-width="1" stroke-dasharray="4 3" stroke-dashoffset="0"/>
<line x1="472" y1="399.5" x2="866" y2="399.5" stroke="#a8a8a8" stroke-width="1" stroke-dasharray="7 2" stroke-dashoffset="0"/>
<line x1="472" y1="426.5" x2="866" y2="426.5" stroke="#404040" stroke-width="1" stroke-dasharray="7 2" stroke-dashoffset="0"/>
<line x1="472" y1="453.5" x2="866" y2="453.5" stroke="#a8a8a8" stroke-width="1" stroke-dasharray="7 2" stroke-dashoffset="0"/>
<line x1="472" y1="481.5" x2="866" y2="481.5" stroke="#404040" stroke-width="1" stroke-dasharray="7 2" stroke-dashoffset="0"/>
<line x1="472" y1="508.5" x2="866" y2="508.5" stroke="#a8a8a8" stroke-width="1" stroke-dasharray="7 2" stroke-dashoffset="0"/>
<line x1="472" y1="535.5" x2="866" y2="535.5" stroke="#404040" stroke-width="1" stroke-dasharray="7 2" stroke-dashoffset="0"/>
<line x1="472" y1="563.5" x2="866" y2="563.5" stroke="#a8a8a8" stroke-width="1" stroke-dasharray="7 2" stroke-dashoffset="0"/>
<line x1="472" y1="590.5" x2="866" y2="590.5" stroke="#404040" stroke-width="1" stroke-dasharray="7 2" stroke-dashoffset="0"/>
<line x1="539.5" y1="388" x2="539.5" y2="602" stroke="#b0b0b0" stroke-width="1" stroke-dasharray="4 3" stroke-dashoffset="0"/>
<line x1="639.5" y1="388" x2="639.5" y2="602" stroke="#b0b0b0" stroke-width="1" stroke-dasharray="4 3" stroke-dashoffset="0"/>
<line x1="739.5" y1="388" x2="739.5" y2="602" stroke="#b0b0b0" stroke-width="1" stroke-dasharray="4 3" stroke-dashoffset="0"/>
<line x1="839.5" y1="388" x2="839.5" y2="602" stroke="#b0b0b0" stroke-width="1" stroke-dasharray="4 3" stroke-dashoffset="0"/>
<rect x="68" y="368" width="24" height="13" fill="#000"/><text x="80" y="379" font-size="11.5" fill="#ffffff" text-anchor="middle" font-weight="normal" textLength="19" lengthAdjust="spacingAndGlyphs" >0 ps</text>
<rect x="68" y="621" width="24" height="13" fill="#000"/><text x="80" y="632" font-size="11.5" fill="#ffffff" text-anchor="middle" font-weight="normal" textLength="19" lengthAdjust="spacingAndGlyphs" >0 ps</text>
<rect x="164" y="368" width="30" height="13" fill="#000"/><text x="180" y="379" font-size="11.5" fill="#ffffff" text-anchor="middle" font-weight="normal" textLength="25" lengthAdjust="spacingAndGlyphs" >40 ps</text>
<rect x="164" y="621" width="30" height="13" fill="#000"/><text x="180" y="632" font-size="11.5" fill="#ffffff" text-anchor="middle" font-weight="normal" textLength="25" lengthAdjust="spacingAndGlyphs" >40 ps</text>
<rect x="264" y="368" width="30" height="13" fill="#000"/><text x="280" y="379" font-size="11.5" fill="#ffffff" text-anchor="middle" font-weight="normal" textLength="25" lengthAdjust="spacingAndGlyphs" >80 ps</text>
<rect x="264" y="621" width="30" height="13" fill="#000"/><text x="280" y="632" font-size="11.5" fill="#ffffff" text-anchor="middle" font-weight="normal" textLength="25" lengthAdjust="spacingAndGlyphs" >80 ps</text>
<rect x="362" y="368" width="35" height="13" fill="#000"/><text x="380" y="379" font-size="11.5" fill="#ffffff" text-anchor="middle" font-weight="normal" textLength="30" lengthAdjust="spacingAndGlyphs" >120 ps</text>
<rect x="362" y="621" width="35" height="13" fill="#000"/><text x="380" y="632" font-size="11.5" fill="#ffffff" text-anchor="middle" font-weight="normal" textLength="30" lengthAdjust="spacingAndGlyphs" >120 ps</text>
<rect x="527" y="368" width="25" height="13" fill="#000"/><text x="540" y="379" font-size="11.5" fill="#ffffff" text-anchor="middle" font-weight="normal" textLength="20" lengthAdjust="spacingAndGlyphs" >0 Hz</text>
<rect x="527" y="621" width="25" height="13" fill="#000"/><text x="540" y="632" font-size="11.5" fill="#ffffff" text-anchor="middle" font-weight="normal" textLength="20" lengthAdjust="spacingAndGlyphs" >0 Hz</text>
<rect x="624" y="368" width="32" height="13" fill="#000"/><text x="640" y="379" font-size="11.5" fill="#ffffff" text-anchor="middle" font-weight="normal" textLength="27" lengthAdjust="spacingAndGlyphs" >2 THz</text>
<rect x="624" y="621" width="32" height="13" fill="#000"/><text x="640" y="632" font-size="11.5" fill="#ffffff" text-anchor="middle" font-weight="normal" textLength="27" lengthAdjust="spacingAndGlyphs" >2 THz</text>
<rect x="724" y="368" width="32" height="13" fill="#000"/><text x="740" y="379" font-size="11.5" fill="#ffffff" text-anchor="middle" font-weight="normal" textLength="27" lengthAdjust="spacingAndGlyphs" >4 THz</text>
<rect x="724" y="621" width="32" height="13" fill="#000"/><text x="740" y="632" font-size="11.5" fill="#ffffff" text-anchor="middle" font-weight="normal" textLength="27" lengthAdjust="spacingAndGlyphs" >4 THz</text>
<rect x="824" y="368" width="32" height="13" fill="#000"/><text x="840" y="379" font-size="11.5" fill="#ffffff" text-anchor="middle" font-weight="normal" textLength="27" lengthAdjust="spacingAndGlyphs" >6 THz</text>
<rect x="824" y="621" width="32" height="13" fill="#000"/><text x="840" y="632" font-size="11.5" fill="#ffffff" text-anchor="middle" font-weight="normal" textLength="27" lengthAdjust="spacingAndGlyphs" >6 THz</text>
<rect x="41" y="386" width="48" height="13" fill="#000"/><text x="42.7" y="397" font-size="11.5" fill="#ffffff" text-anchor="start" font-weight="normal" textLength="43.5" lengthAdjust="spacingAndGlyphs" >09:02:56</text>
<rect x="360" y="386" width="48" height="13" fill="#000"/><text x="406" y="397" font-size="11.5" fill="#ffffff" text-anchor="end" font-weight="normal" textLength="43.5" lengthAdjust="spacingAndGlyphs" >09:02:56</text>
<rect x="475" y="386" width="48" height="13" fill="#000"/><text x="476.7" y="397" font-size="11.5" fill="#ffffff" text-anchor="start" font-weight="normal" textLength="43.5" lengthAdjust="spacingAndGlyphs" >09:02:56</text>
<rect x="816" y="386" width="48" height="13" fill="#000"/><text x="862" y="397" font-size="11.5" fill="#ffffff" text-anchor="end" font-weight="normal" textLength="43.5" lengthAdjust="spacingAndGlyphs" >09:02:56</text>
<rect x="41" y="440" width="48" height="13" fill="#000"/><text x="42.7" y="451" font-size="11.5" fill="#ffffff" text-anchor="start" font-weight="normal" textLength="43.5" lengthAdjust="spacingAndGlyphs" >09:02:55</text>
<rect x="360" y="440" width="48" height="13" fill="#000"/><text x="406" y="451" font-size="11.5" fill="#ffffff" text-anchor="end" font-weight="normal" textLength="43.5" lengthAdjust="spacingAndGlyphs" >09:02:55</text>
<rect x="475" y="440" width="48" height="13" fill="#000"/><text x="476.7" y="451" font-size="11.5" fill="#ffffff" text-anchor="start" font-weight="normal" textLength="43.5" lengthAdjust="spacingAndGlyphs" >09:02:55</text>
<rect x="816" y="440" width="48" height="13" fill="#000"/><text x="862" y="451" font-size="11.5" fill="#ffffff" text-anchor="end" font-weight="normal" textLength="43.5" lengthAdjust="spacingAndGlyphs" >09:02:55</text>
<rect x="41" y="495" width="48" height="13" fill="#000"/><text x="42.7" y="506" font-size="11.5" fill="#ffffff" text-anchor="start" font-weight="normal" textLength="43.5" lengthAdjust="spacingAndGlyphs" >09:02:54</text>
<rect x="360" y="495" width="48" height="13" fill="#000"/><text x="406" y="506" font-size="11.5" fill="#ffffff" text-anchor="end" font-weight="normal" textLength="43.5" lengthAdjust="spacingAndGlyphs" >09:02:54</text>
<rect x="475" y="495" width="48" height="13" fill="#000"/><text x="476.7" y="506" font-size="11.5" fill="#ffffff" text-anchor="start" font-weight="normal" textLength="43.5" lengthAdjust="spacingAndGlyphs" >09:02:54</text>
<rect x="816" y="495" width="48" height="13" fill="#000"/><text x="862" y="506" font-size="11.5" fill="#ffffff" text-anchor="end" font-weight="normal" textLength="43.5" lengthAdjust="spacingAndGlyphs" >09:02:54</text>
<rect x="41" y="550" width="48" height="13" fill="#000"/><text x="42.7" y="561" font-size="11.5" fill="#ffffff" text-anchor="start" font-weight="normal" textLength="43.5" lengthAdjust="spacingAndGlyphs" >09:02:53</text>
<rect x="360" y="550" width="48" height="13" fill="#000"/><text x="406" y="561" font-size="11.5" fill="#ffffff" text-anchor="end" font-weight="normal" textLength="43.5" lengthAdjust="spacingAndGlyphs" >09:02:53</text>
<rect x="475" y="550" width="48" height="13" fill="#000"/><text x="476.7" y="561" font-size="11.5" fill="#ffffff" text-anchor="start" font-weight="normal" textLength="43.5" lengthAdjust="spacingAndGlyphs" >09:02:53</text>
<rect x="816" y="550" width="48" height="13" fill="#000"/><text x="862" y="561" font-size="11.5" fill="#ffffff" text-anchor="end" font-weight="normal" textLength="43.5" lengthAdjust="spacingAndGlyphs" >09:02:53</text>
<rect x="41" y="604" width="48" height="13" fill="#000"/><text x="42.7" y="615" font-size="11.5" fill="#ffffff" text-anchor="start" font-weight="normal" textLength="43.5" lengthAdjust="spacingAndGlyphs" >09:02:52</text>
<rect x="360" y="604" width="48" height="13" fill="#000"/><text x="406" y="615" font-size="11.5" fill="#ffffff" text-anchor="end" font-weight="normal" textLength="43.5" lengthAdjust="spacingAndGlyphs" >09:02:52</text>
<rect x="475" y="604" width="48" height="13" fill="#000"/><text x="476.7" y="615" font-size="11.5" fill="#ffffff" text-anchor="start" font-weight="normal" textLength="43.5" lengthAdjust="spacingAndGlyphs" >09:02:52</text>
<rect x="816" y="604" width="48" height="13" fill="#000"/><text x="862" y="615" font-size="11.5" fill="#ffffff" text-anchor="end" font-weight="normal" textLength="43.5" lengthAdjust="spacingAndGlyphs" >09:02:52</text>
<circle cx="6.5" cy="14" r="7.8" fill="#e8453c"/><path d="M0.5,10 h10 v2 h-3.5 v5.5 h-2.5 v-5.5 h-4 z" fill="#1c2046"/><text x="8" y="17.5" font-size="4" fill="#1c2046">Hz</text><defs><linearGradient id="gb" x1="0" y1="0" x2="0" y2="1"><stop offset="0" stop-color="#d8d4dc"/><stop offset="0.45" stop-color="#bcb8c4"/><stop offset="0.5" stop-color="#9e9aa8"/><stop offset="1" stop-color="#b4b0bc"/></linearGradient><linearGradient id="gr" x1="0" y1="0" x2="0" y2="1"><stop offset="0" stop-color="#e8a898"/><stop offset="0.45" stop-color="#d87a68"/><stop offset="0.5" stop-color="#c84428"/><stop offset="1" stop-color="#d86a50"/></linearGradient></defs><path d="M800.5,0 V14 Q800.5,18.5 805,18.5 H897 Q901.5,18.5 901.5,14 V0" fill="url(#gb)" stroke="#5a5866" stroke-width="1"/><path d="M855.5,0 V18.5 H897 Q901.5,18.5 901.5,14 V0 z" fill="url(#gr)" stroke="#5a4040" stroke-width="1"/><rect x="828.5" y="0" width="1" height="18" fill="#5a5866"/><rect x="829.5" y="0" width="1" height="18" fill="#e8e8ee" opacity="0.6"/><rect x="809.5" y="9.5" width="11" height="3.5" fill="#fff" stroke="#384060" stroke-width="1"/><rect x="836.5" y="4.5" width="11" height="9" fill="#fff" stroke="#384060" stroke-width="1"/><rect x="839.5" y="7.5" width="5" height="3" fill="#c0c4d0" stroke="#384060" stroke-width="1"/><path d="M875,5 L884,13.5 M884,5 L875,13.5" stroke="#384060" stroke-width="4.2" stroke-linecap="round"/><path d="M875,5 L884,13.5 M884,5 L875,13.5" stroke="#fff" stroke-width="2.4" stroke-linecap="round"/><polygon points="10,37 20,43.5 10,50" fill="#00ff00"/><rect x="32" y="38" width="12" height="12" fill="#007800"/><g transform="translate(61,44)"><circle cx="0" cy="0" r="4" fill="none" stroke="#707070" stroke-width="1.8"/><path d="M-5.5,-4.5 A7,7 0 0 0 -5.5,4.5" fill="none" stroke="#707070" stroke-width="1.8"/><path d="M5.5,-4.5 A7,7 0 0 1 5.5,4.5" fill="none" stroke="#707070" stroke-width="1.8"/></g><rect x="76" y="34" width="1" height="18" fill="#a0a0a0"/><rect x="77" y="34" width="1" height="18" fill="#ffffff"/><polyline points="85.5,48 86.3,43 87.3,40 88.5,39.3 89.7,40 90.7,43 91.6,47.5 93.5,44.5 95.2,43 97,45 98.6,47.8" fill="none" stroke="#8b0000" stroke-width="1.1"/><text x="108.6" y="49" font-size="12" fill="#b4b4b4" textLength="13" lengthAdjust="spacingAndGlyphs">DC</text><rect x="130" y="34" width="1" height="18" fill="#a0a0a0"/><rect x="131" y="34" width="1" height="18" fill="#ffffff"/><g transform="translate(138,37)"><path d="M2.5,0 V13" stroke="#000" stroke-width="1.2"/><path d="M0,2.5 L2.5,0 L5,2.5 M0,10.5 L2.5,13 L5,10.5" fill="none" stroke="#000" stroke-width="1.2"/><path d="M7,0 l3,6 M10,0 l-3,6 M12,0 l1.5,3 l1.5,-3 M13.5,3 v3" stroke="#000" stroke-width="1.1" fill="none"/><path d="M6,10.5 h10 M8.5,8 L6,10.5 L8.5,13 M13.5,8 L16,10.5 L13.5,13" stroke="#000" stroke-width="1.1" fill="none"/></g><g transform="translate(161,42)"><polyline points="2,-3 4,-7 6,-2 8,-6 10,-3 12,-6 14,-4" fill="none" stroke="#ff0000" stroke-width="1.1"/><rect x="3" y="1.2" width="2" height="8.8" fill="#808000"/><polygon points="0,0 1.6,0 1.6,0.8 3,0.8 8,4 8,5.8 3,3.2 1.6,3.2 1.6,6 0,6" fill="#000"/><rect x="9" y="5" width="1.8" height="5" fill="#000"/><rect x="12.2" y="5" width="1.8" height="5" fill="#000"/><path d="M9.3,0 L11.5,3.2 L13.7,0 M9.8,5.2 L11.5,3 L13.2,5.2" fill="none" stroke="#000" stroke-width="1.5"/></g><rect x="184" y="34" width="1" height="18" fill="#a0a0a0"/><rect x="185" y="34" width="1" height="18" fill="#ffffff"/><g transform="translate(192,36)"><path d="M1,3 h5 l1,1 h7 v9 h-13 z" fill="#ffff80" stroke="#808080" stroke-width="1"/><path d="M0.5,6.5 h12 l2,6.5 h-13 z" fill="#f0f080" stroke="#606060" stroke-width="1"/><path d="M14.5,4 v9.5 h-13" fill="none" stroke="#000" stroke-width="1.4"/></g><g transform="translate(215,36)"><rect x="0.5" y="0.5" width="15" height="15" rx="1" fill="#000080" stroke="#0000ff" stroke-width="1.2"/><rect x="2.5" y="1.5" width="11" height="8" rx="1" fill="#ffff00" stroke="#000080" stroke-width="0.6"/><path d="M4,3.5 h8 M4,5.5 h8 M4,7.5 h8" stroke="#707000" stroke-width="0.9"/><rect x="4.5" y="10.5" width="7" height="5" fill="#c8c8c8"/><rect x="6" y="11.5" width="2" height="3.5" fill="#000080"/></g><rect x="238" y="34" width="1" height="18" fill="#a0a0a0"/><rect x="239" y="34" width="1" height="18" fill="#ffffff"/><g transform="translate(246,35)"><polyline points="0,8 1.5,7.5 3,8 4.5,6 6,8 7.5,7.5 9,8 11,4 13,8 14.5,7.5 16,8" fill="none" stroke="#ffff00" stroke-width="1.8"/><polyline points="0,6 1.5,5 3,6 4.5,3.5 6,6 7.5,5.5 9,6 11,1.5 13,6 14.5,5 16,6" fill="none" stroke="#ff0000" stroke-width="1.1"/></g><g transform="translate(246,35)"><polygon points="8,6.5 12.5,11 8,15.5 3.5,11" fill="#00e8f0"/><path d="M8,8 v6 M5,11 h6" stroke="#ff0000" stroke-width="2"/></g><g transform="translate(269,35)"><polyline points="0,8 1.5,7.5 3,8 4.5,6 6,8 7.5,7.5 9,8 11,4 13,8 14.5,7.5 16,8" fill="none" stroke="#ffff00" stroke-width="1.8"/><polyline points="0,6 1.5,5 3,6 4.5,3.5 6,6 7.5,5.5 9,6 11,1.5 13,6 14.5,5 16,6" fill="none" stroke="#ff0000" stroke-width="1.1"/></g><g transform="translate(269,35)"><path d="M0.5,0.5 L9.5,9.5" stroke="#000" stroke-width="1.6"/><path d="M8.5,8.5 L13,11 M8.5,8.5 L11,13 M9.5,9.5 L14.5,13.5 M8,10 L10,14.5 M10,9 L15,11.5" stroke="#000" stroke-width="0.9"/><path d="M0,13 l2,-2 M3,14 l3,-3 M5,15 l2,-2 M1,15.5 l1,-1" stroke="#000" stroke-width="0.9"/><circle cx="1.5" cy="12" r="0.6" fill="#808000"/><circle cx="4.5" cy="11.5" r="0.6" fill="#808000"/><circle cx="6" cy="15" r="0.6" fill="#808000"/><circle cx="1" cy="15.5" r="0.6" fill="#808000"/></g><rect x="292" y="34" width="1" height="18" fill="#a0a0a0"/><rect x="293" y="34" width="1" height="18" fill="#ffffff"/><g transform="translate(300,36)"><polygon points="0,8 8,1 16,5 8,12" fill="#0000ff" stroke="#000" stroke-width="1"/><polygon points="0,8 8,12 16,5 16,8 8,15 0,11" fill="#ffff00" stroke="#000" stroke-width="1"/><text x="6.5" y="9.5" font-size="7" font-weight="bold" fill="#ffff00">?</text></g><rect x="323" y="34" width="1" height="18" fill="#a0a0a0"/><rect x="324" y="34" width="1" height="18" fill="#ffffff"/><g transform="translate(336,37)"><circle cx="5.5" cy="1.8" r="1.5" fill="#0000ff"/><path d="M1.5,5.2 L4.5,4.3 L2.5,11.5 Q2.3,13.2 4.5,12.2" fill="none" stroke="#0000ff" stroke-width="1.9" stroke-linecap="round"/></g><rect x="410" y="33" width="87" height="20" fill="#fff"/><path d="M410.5,52.5 V33.5 H496.5" fill="none" stroke="#8a8a8a" stroke-width="1"/><path d="M411.5,51.5 V34.5 H495.5" fill="none" stroke="#c8c8c8" stroke-width="1"/><path d="M410.5,52.5 H496.5 V33.5" fill="none" stroke="#f8f8f8" stroke-width="1"/><rect x="480" y="35" width="16" height="17" fill="#f0f0f0"/><path d="M480.5,51.5 V35.5 H495.5" fill="none" stroke="#fff"/><path d="M480.5,51.5 H495.5 V35.5" fill="none" stroke="#808080"/><polygon points="485,42 492,42 488.5,46" fill="#000"/><text x="412" y="47.5" font-size="11" fill="#101030">0</text><rect x="507.5" y="30.5" width="26" height="24" fill="#f2f2f2" stroke="#b8b8b8"/><path d="M508.5,53.5 V31.5 H532.5" fill="none" stroke="#fff"/><path d="M519,36 H513 L516.5,40.5 L513,45 H519" fill="none" stroke="#000" stroke-width="1.1"/><path d="M521.5,35 V42 M526,37.5 L522,40 L526.5,42" fill="none" stroke="#000" stroke-width="1.1"/><path d="M513,45.5 H528" stroke="#000" stroke-width="1"/><path d="M521.5,51 V46.5 L526,51 V46.5" fill="none" stroke="#000" stroke-width="1.1"/><path d="M515,47 V51 M517,47 V51" stroke="#000" stroke-width="1"/><circle cx="761.5" cy="42.2" r="12.4" fill="#e8403a"/><g fill="#1c2248"><rect x="775.7" y="37.7" width="17.5" height="3"/><rect x="783" y="37.7" width="4.7" height="8.7"/><path d="M812.6,37.7 H799.5 Q794,37.7 794,42.05 Q794,46.4 799.5,46.4 H812.6 V43.8 H799.5 Q798.2,43.8 798.2,43.1 H812 V41.3 H798.2 Q798.2,40.6 799.5,40.6 H812.6 Z"/><path d="M815.2,37.7 H829.5 Q834.2,37.7 834.2,40.4 Q834.2,42.6 831,43.1 L834.4,46.4 H829.6 L826.5,43.3 H819.4 V46.4 H815.2 Z M819.4,40.5 V41.3 H829 Q830,41.3 830,40.9 Q830,40.5 829,40.5 Z"/><path d="M836.5,37.7 H849.5 Q853.8,37.7 853.8,41 V46.4 H839 Q834.2,46.4 834.2,44.2 Q834.2,42 839,42 H849.6 V41.4 Q849.6,40.4 848.5,40.4 H836.5 Z M839.8,43.6 Q838.6,43.6 838.6,44.2 Q838.6,44.8 839.8,44.8 H849.6 V43.6 Z"/><path d="M853.8,37.7 H858.3 L863.3,43.4 L868.3,37.7 H872.8 L865,46.4 H861.6 Z"/><rect x="874.2" y="37.7" width="5.2" height="8.7" rx="0.8"/><path d="M880.8,37.7 H885.8 V43.6 H898.7 V46.4 H884.3 Q880.8,46.4 880.8,43.4 Z"/></g><g transform="translate(20,96)"><path d="M-2.8,-4.6 A5.3,5.3 0 1 0 2.8,-4.6" fill="none" stroke="#10c010" stroke-width="1.9"/><path d="M0,-6.5 V-0.5" stroke="#10c010" stroke-width="1.9"/></g><rect x="35" y="86" width="1" height="18" fill="#a0a0a0"/><rect x="36" y="86" width="1" height="18" fill="#ffffff"/><g transform="translate(44,91)"><rect x="3" y="1.2" width="2" height="8.8" fill="#808000"/><polygon points="0,0 1.6,0 1.6,0.8 3,0.8 8,4 8,5.8 3,3.2 1.6,3.2 1.6,6 0,6" fill="#000"/><rect x="9" y="5" width="1.8" height="5" fill="#000"/><rect x="12.2" y="5" width="1.8" height="5" fill="#000"/><path d="M9.3,0 L11.5,3.2 L13.7,0 M9.8,5.2 L11.5,3 L13.2,5.2" fill="none" stroke="#000" stroke-width="1.5"/></g><rect x="66" y="86" width="1" height="18" fill="#a0a0a0"/><rect x="67" y="86" width="1" height="18" fill="#ffffff"/><g transform="translate(74,88)"><rect x="0" y="0" width="5" height="10" fill="#ffff00"/><rect x="11" y="0" width="5" height="10" fill="#ffff00"/><path d="M0.5,0 v10 M15.5,0 v10" stroke="#000" stroke-width="1"/><path d="M1,2.5 h3 M1,5 h3 M1,7.5 h3 M12,2.5 h3 M12,5 h3 M12,7.5 h3" stroke="#000" stroke-width="0.8"/><circle cx="8" cy="5" r="2.5" fill="none" stroke="#0000ff" stroke-width="1"/><path d="M5,5 h9" stroke="#0000ff" stroke-width="1"/><rect x="1" y="10.5" width="4" height="2" fill="#a0a0a0"/><rect x="11" y="10.5" width="4" height="2" fill="#a0a0a0"/><rect x="0" y="12.5" width="6" height="2" fill="#ffff00"/><rect x="10" y="12.5" width="6" height="2" fill="#ffff00"/></g><g transform="translate(98,89)"><path d="M6.5,0 V13 M0,6.5 H13" stroke="#000" stroke-width="1.5"/></g><rect x="120" y="86" width="1" height="18" fill="#a0a0a0"/><rect x="121" y="86" width="1" height="18" fill="#ffffff"/><g transform="translate(128,88)"><path d="M0.5,0.5 L9.5,9.5" stroke="#000" stroke-width="1.6"/><path d="M8.5,8.5 L13,11 M8.5,8.5 L11,13 M9.5,9.5 L14.5,13.5 M8,10 L10,14.5 M10,9 L15,11.5" stroke="#000" stroke-width="0.9"/><path d="M0,13 l2,-2 M3,14 l3,-3 M5,15 l2,-2 M1,15.5 l1,-1" stroke="#000" stroke-width="0.9"/><circle cx="1.5" cy="12" r="0.6" fill="#808000"/><circle cx="4.5" cy="11.5" r="0.6" fill="#808000"/><circle cx="6" cy="15" r="0.6" fill="#808000"/><circle cx="1" cy="15.5" r="0.6" fill="#808000"/></g><g transform="translate(150,88)"><path d="M2,11 v-3 M4,11 v-5 M7,11 v-4 M9,11 v-9 M11,11 v-6 M13,11 v-4 M15,11 v-7" stroke="#00e000" stroke-width="1.2"/><path d="M0,11.5 h16" stroke="#00e000" stroke-width="1"/></g><g transform="translate(150,88)"><path d="M0.5,0.5 L9.5,9.5" stroke="#000" stroke-width="1.6"/><path d="M8.5,8.5 L13,11 M8.5,8.5 L11,13 M9.5,9.5 L14.5,13.5 M8,10 L10,14.5 M10,9 L15,11.5" stroke="#000" stroke-width="0.9"/><path d="M0,13 l2,-2 M3,14 l3,-3 M5,15 l2,-2 M1,15.5 l1,-1" stroke="#000" stroke-width="0.9"/><circle cx="1.5" cy="12" r="0.6" fill="#808000"/><circle cx="4.5" cy="11.5" r="0.6" fill="#808000"/><circle cx="6" cy="15" r="0.6" fill="#808000"/><circle cx="1" cy="15.5" r="0.6" fill="#808000"/></g><rect x="174" y="86" width="1" height="18" fill="#a0a0a0"/><rect x="175" y="86" width="1" height="18" fill="#ffffff"/><circle cx="190" cy="96" r="4.9" fill="none" stroke="#800000" stroke-width="2.2"/><rect x="205" y="86" width="1" height="18" fill="#a0a0a0"/><rect x="206" y="86" width="1" height="18" fill="#ffffff"/><g transform="translate(213,88)"><rect x="5" y="0.5" width="11" height="9" fill="#000080"/><rect x="6" y="2.5" width="9" height="6" fill="#ffffff"/><path d="M7,4 h2 M10,4 h2 M13,4 h1 M7,6 h2 M10,6 h2" stroke="#ff0000" stroke-width="1"/><rect x="12" y="5" width="3" height="3" fill="#00c0ff"/><rect x="5.5" y="1" width="10" height="1.5" fill="#ffff00"/><rect x="0.5" y="5.5" width="11" height="10" fill="#ffffff" stroke="#0000ff" stroke-width="1.2"/><rect x="1" y="6" width="10" height="3" fill="#ffff00"/><path d="M2,10.5 h2 M5,10.5 h2 M8,10.5 h2 M2,12.5 h2 M5,12.5 h2 M8,12.5 h2" stroke="#000" stroke-width="1"/></g><g transform="translate(16,114)"><g shape-rendering="crispEdges"><rect x="0" y="0" width="16" height="7" fill="#808080"/><rect x="0" y="6" width="16" height="1" fill="#ffff00"/><rect x="1" y="3" width="1" height="3" fill="#ffff00"/><rect x="3" y="5" width="1" height="1" fill="#ffff00"/><rect x="5" y="4" width="1" height="2" fill="#ffff00"/><rect x="7" y="2" width="1" height="4" fill="#ffff00"/><rect x="9" y="4" width="1" height="2" fill="#ffff00"/><rect x="11" y="3" width="1" height="3" fill="#ffff00"/><rect x="13" y="5" width="1" height="1" fill="#ffff00"/><rect x="14" y="1" width="1" height="5" fill="#ffff00"/><rect x="0" y="7" width="16" height="1" fill="#ff0000"/></g><text x="2" y="14.5" font-size="8.5" font-weight="bold" fill="#ff0000" textLength="12" lengthAdjust="spacingAndGlyphs">OFF</text></g><g transform="translate(16,136)"><g shape-rendering="crispEdges"><rect x="0" y="0" width="16" height="8" fill="#808080"/><rect x="1" y="3" width="1" height="4" fill="#ffff00"/><rect x="4" y="4" width="1" height="3" fill="#ffff00"/><rect x="7" y="2" width="1" height="5" fill="#ffff00"/><rect x="10" y="4" width="1" height="3" fill="#ffff00"/><rect x="13" y="1" width="1" height="6" fill="#ffff00"/></g><polyline points="0,7.5 2,5 4,7.5 6,4.5 8,7.5 10,5 12,7.5 14,3.5 16,7.5" fill="none" stroke="#ff0000" stroke-width="1"/><text x="2" y="14.5" font-size="8.5" font-weight="bold" fill="#ff0000" textLength="12" lengthAdjust="spacingAndGlyphs">OFF</text></g><rect x="15" y="157" width="19" height="1" fill="#a0a0a0"/><rect x="15" y="158" width="19" height="1" fill="#ffffff"/><g transform="translate(16,166)"><path d="M0,6.5 h14" stroke="#0000ff" stroke-width="1.2"/><path d="M9.5,2 v8" stroke="#0000ff" stroke-width="1.2"/><path d="M8,0.5 h1 M10,0.5 h1 M13,6.5 h1 M15,6.5 h1" stroke="#00e0ff" stroke-width="1.2"/></g><g transform="translate(16,166)"><path d="M0.5,0.5 L9.5,9.5" stroke="#000" stroke-width="1.6"/><path d="M8.5,8.5 L13,11 M8.5,8.5 L11,13 M9.5,9.5 L14.5,13.5 M8,10 L10,14.5 M10,9 L15,11.5" stroke="#000" stroke-width="0.9"/><path d="M0,13 l2,-2 M3,14 l3,-3 M5,15 l2,-2 M1,15.5 l1,-1" stroke="#000" stroke-width="0.9"/><circle cx="1.5" cy="12" r="0.6" fill="#808000"/><circle cx="4.5" cy="11.5" r="0.6" fill="#808000"/><circle cx="6" cy="15" r="0.6" fill="#808000"/><circle cx="1" cy="15.5" r="0.6" fill="#808000"/></g><rect x="15" y="187" width="19" height="1" fill="#a0a0a0"/><rect x="15" y="188" width="19" height="1" fill="#ffffff"/><g transform="translate(17,199)"><rect x="3" y="1.2" width="2" height="8.8" fill="#808000"/><polygon points="0,0 1.6,0 1.6,0.8 3,0.8 8,4 8,5.8 3,3.2 1.6,3.2 1.6,6 0,6" fill="#000"/><rect x="9" y="5" width="1.8" height="5" fill="#000"/><rect x="12.2" y="5" width="1.8" height="5" fill="#000"/><path d="M9.3,0 L11.5,3.2 L13.7,0 M9.8,5.2 L11.5,3 L13.2,5.2" fill="none" stroke="#000" stroke-width="1.5"/></g><rect x="15" y="218" width="19" height="1" fill="#a0a0a0"/><rect x="15" y="219" width="19" height="1" fill="#ffffff"/><g transform="translate(16,228)"><path d="M4.5,13.5 L2,10.5 Q-0.5,6.5 3,3.5 Q7,0.5 11,3 L12.5,4.5" fill="none" stroke="#a0a0a0" stroke-width="3.6" stroke-linejoin="round"/><polygon points="7.5,6.5 16,7 15.5,0" fill="#a0a0a0"/></g><g transform="translate(16,249)"><path d="M11.5,14 L14,11 Q16.5,7 13,4 Q9,1 5,3.5 L3.5,5" fill="none" stroke="#a0a0a0" stroke-width="3.6" stroke-linejoin="round"/><polygon points="0.5,0.5 0,7.5 8.5,7" fill="#a0a0a0"/></g><g transform="translate(416,114)"><g shape-rendering="crispEdges"><path d="M0.5,0.5 h6 l3,3 v8 h-9 z" fill="#eef4ff" stroke="#8080c0" stroke-width="1"/><rect x="2" y="5" width="4" height="1" fill="#7070b8"/><rect x="2" y="7" width="4" height="1" fill="#7070b8"/><rect x="2" y="9" width="3" height="1" fill="#7070b8"/><path d="M5.5,4.5 h6 l3,3 v8 h-9 z" fill="#f4f8ff" stroke="#8080c0" stroke-width="1"/><rect x="7" y="9" width="6" height="1" fill="#6060b0"/><rect x="7" y="11" width="6" height="1" fill="#6060b0"/><rect x="7" y="13" width="6" height="1" fill="#6060b0"/></g></g><rect x="415" y="135" width="19" height="1" fill="#a0a0a0"/><rect x="415" y="136" width="19" height="1" fill="#ffffff"/><g transform="translate(416,144)"><path d="M4,0.5 h9 l-2.5,5 h-9 z" fill="#ffffff" stroke="#000" stroke-width="1"/><path d="M0.5,6.5 L3,5 h11.5 v4 l-2.5,4.5 h-11.5 z" fill="#a0a0a0" stroke="#000" stroke-width="1"/><path d="M0.5,6.5 h12 v7" fill="none" stroke="#000" stroke-width="1"/><rect x="2" y="9" width="8" height="2" fill="#606060"/></g><rect x="415" y="165" width="19" height="1" fill="#a0a0a0"/><rect x="415" y="166" width="19" height="1" fill="#ffffff"/><g transform="translate(416,173)"><rect x="0.5" y="0.5" width="15" height="15" rx="1" fill="#000080" stroke="#0000ff" stroke-width="1.2"/><rect x="2" y="1.5" width="12" height="7.5" fill="#000"/><rect x="2" y="7.5" width="12" height="1.5" fill="#ffff00"/><path d="M3.5,8 v-3 M5.5,8 v-2 M7.5,8 v-4 M9.5,8 v-2 M11.5,8 v-5 M13,8 v-2" stroke="#ffff00" stroke-width="1"/><rect x="4.5" y="10.5" width="7" height="5" fill="#c8c8c8"/><rect x="6" y="11.5" width="2" height="3.5" fill="#000080"/></g><g transform="translate(416,196)"><path d="M13.2,3.5 A6.5,6.5 0 1 0 13.2,12" fill="none" stroke="#0000ff" stroke-width="2"/><path d="M3.5,8 h10" stroke="#0000ff" stroke-width="1.6"/><polyline points="10,4.5 13.5,8 10,11.5" fill="none" stroke="#0000ff" stroke-width="1.6"/></g><rect x="415" y="218" width="19" height="1" fill="#a0a0a0"/><rect x="415" y="219" width="19" height="1" fill="#ffffff"/><g transform="translate(416,229)"><path d="M0.5,3.5 h3 l1,-2 h4 l1,2 h3 v8 h-12 z" fill="#c8c8c8" stroke="#000" stroke-width="1"/><path d="M12.5,3.5 l2,-1.5 v8 l-2,1.5" fill="#a0a0a0" stroke="#000" stroke-width="1"/><circle cx="6" cy="7.5" r="2.5" fill="#fff" stroke="#000" stroke-width="1"/><rect x="9" y="4.5" width="2" height="1.5" fill="#000"/></g><g transform="translate(416,249)"><path d="M0.5,0.5 L9.5,9.5" stroke="#000" stroke-width="1.6"/><path d="M8.5,8.5 L13,11 M8.5,8.5 L11,13 M9.5,9.5 L14.5,13.5 M8,10 L10,14.5 M10,9 L15,11.5" stroke="#000" stroke-width="0.9"/><path d="M0,13 l2,-2 M3,14 l3,-3 M5,15 l2,-2 M1,15.5 l1,-1" stroke="#000" stroke-width="0.9"/><circle cx="1.5" cy="12" r="0.6" fill="#808000"/><circle cx="4.5" cy="11.5" r="0.6" fill="#808000"/><circle cx="6" cy="15" r="0.6" fill="#808000"/><circle cx="1" cy="15.5" r="0.6" fill="#808000"/></g><g transform="translate(17,370)"><g shape-rendering="crispEdges"><rect x="0" y="7" width="15" height="1" fill="#000"/><rect x="1" y="0" width="1" height="7" fill="#ff0000"/><rect x="6" y="4" width="1" height="3" fill="#ff0000"/><rect x="9" y="2" width="1" height="5" fill="#ff0000"/><rect x="12" y="1" width="1" height="6" fill="#ff0000"/><rect x="3" y="8" width="1" height="6" fill="#0000ff"/><rect x="5" y="8" width="1" height="3" fill="#0000ff"/><rect x="8" y="8" width="1" height="4" fill="#0000ff"/><rect x="10" y="8" width="1" height="3" fill="#0000ff"/></g></g><g transform="translate(17,394)"><rect x="3" y="1.2" width="2" height="8.8" fill="#808000"/><polygon points="0,0 1.6,0 1.6,0.8 3,0.8 8,4 8,5.8 3,3.2 1.6,3.2 1.6,6 0,6" fill="#000"/><rect x="9" y="5" width="1.8" height="5" fill="#000"/><rect x="12.2" y="5" width="1.8" height="5" fill="#000"/><path d="M9.3,0 L11.5,3.2 L13.7,0 M9.8,5.2 L11.5,3 L13.2,5.2" fill="none" stroke="#000" stroke-width="1.5"/></g><g transform="translate(416,369)"><g shape-rendering="crispEdges"><path d="M0.5,0.5 h6 l3,3 v8 h-9 z" fill="#eef4ff" stroke="#8080c0" stroke-width="1"/><rect x="2" y="5" width="4" height="1" fill="#7070b8"/><rect x="2" y="7" width="4" height="1" fill="#7070b8"/><rect x="2" y="9" width="3" height="1" fill="#7070b8"/><path d="M5.5,4.5 h6 l3,3 v8 h-9 z" fill="#f4f8ff" stroke="#8080c0" stroke-width="1"/><rect x="7" y="9" width="6" height="1" fill="#6060b0"/><rect x="7" y="11" width="6" height="1" fill="#6060b0"/><rect x="7" y="13" width="6" height="1" fill="#6060b0"/></g></g><g transform="translate(416,391)"><rect x="0.5" y="0.5" width="15" height="15" rx="1" fill="#000080" stroke="#0000ff" stroke-width="1.2"/><rect x="2" y="1.5" width="12" height="7.5" fill="#000"/><rect x="2" y="7.5" width="12" height="1.5" fill="#ffff00"/><path d="M3.5,8 v-3 M5.5,8 v-2 M7.5,8 v-4 M9.5,8 v-2 M11.5,8 v-5 M13,8 v-2" stroke="#ffff00" stroke-width="1"/><rect x="4.5" y="10.5" width="7" height="5" fill="#c8c8c8"/><rect x="6" y="11.5" width="2" height="3.5" fill="#000080"/></g><g transform="translate(450,114)"><g shape-rendering="crispEdges"><rect x="0" y="0" width="16" height="7" fill="#808080"/><rect x="0" y="6" width="16" height="1" fill="#ffff00"/><rect x="1" y="3" width="1" height="3" fill="#ffff00"/><rect x="3" y="5" width="1" height="1" fill="#ffff00"/><rect x="5" y="4" width="1" height="2" fill="#ffff00"/><rect x="7" y="2" width="1" height="4" fill="#ffff00"/><rect x="9" y="4" width="1" height="2" fill="#ffff00"/><rect x="11" y="3" width="1" height="3" fill="#ffff00"/><rect x="13" y="5" width="1" height="1" fill="#ffff00"/><rect x="14" y="1" width="1" height="5" fill="#ffff00"/><rect x="0" y="7" width="16" height="1" fill="#ff0000"/></g><text x="2" y="14.5" font-size="8.5" font-weight="bold" fill="#ff0000" textLength="12" lengthAdjust="spacingAndGlyphs">OFF</text></g><g transform="translate(450,136)"><g shape-rendering="crispEdges"><rect x="0" y="0" width="16" height="8" fill="#808080"/><rect x="1" y="3" width="1" height="4" fill="#ffff00"/><rect x="4" y="4" width="1" height="3" fill="#ffff00"/><rect x="7" y="2" width="1" height="5" fill="#ffff00"/><rect x="10" y="4" width="1" height="3" fill="#ffff00"/><rect x="13" y="1" width="1" height="6" fill="#ffff00"/></g><polyline points="0,7.5 2,5 4,7.5 6,4.5 8,7.5 10,5 12,7.5 14,3.5 16,7.5" fill="none" stroke="#ff0000" stroke-width="1"/><text x="2" y="14.5" font-size="8.5" font-weight="bold" fill="#ff0000" textLength="12" lengthAdjust="spacingAndGlyphs">OFF</text></g><rect x="449" y="157" width="19" height="1" fill="#a0a0a0"/><rect x="449" y="158" width="19" height="1" fill="#ffffff"/><g transform="translate(450,166)"><path d="M0,6.5 h14" stroke="#0000ff" stroke-width="1.2"/><path d="M9.5,2 v8" stroke="#0000ff" stroke-width="1.2"/><path d="M8,0.5 h1 M10,0.5 h1 M13,6.5 h1 M15,6.5 h1" stroke="#00e0ff" stroke-width="1.2"/></g><g transform="translate(450,166)"><path d="M0.5,0.5 L9.5,9.5" stroke="#000" stroke-width="1.6"/><path d="M8.5,8.5 L13,11 M8.5,8.5 L11,13 M9.5,9.5 L14.5,13.5 M8,10 L10,14.5 M10,9 L15,11.5" stroke="#000" stroke-width="0.9"/><path d="M0,13 l2,-2 M3,14 l3,-3 M5,15 l2,-2 M1,15.5 l1,-1" stroke="#000" stroke-width="0.9"/><circle cx="1.5" cy="12" r="0.6" fill="#808000"/><circle cx="4.5" cy="11.5" r="0.6" fill="#808000"/><circle cx="6" cy="15" r="0.6" fill="#808000"/><circle cx="1" cy="15.5" r="0.6" fill="#808000"/></g><rect x="449" y="187" width="19" height="1" fill="#a0a0a0"/><rect x="449" y="188" width="19" height="1" fill="#ffffff"/><g transform="translate(451,199)"><rect x="3" y="1.2" width="2" height="8.8" fill="#808000"/><polygon points="0,0 1.6,0 1.6,0.8 3,0.8 8,4 8,5.8 3,3.2 1.6,3.2 1.6,6 0,6" fill="#000"/><rect x="9" y="5" width="1.8" height="5" fill="#000"/><rect x="12.2" y="5" width="1.8" height="5" fill="#000"/><path d="M9.3,0 L11.5,3.2 L13.7,0 M9.8,5.2 L11.5,3 L13.2,5.2" fill="none" stroke="#000" stroke-width="1.5"/></g><rect x="449" y="218" width="19" height="1" fill="#a0a0a0"/><rect x="449" y="219" width="19" height="1" fill="#ffffff"/><g transform="translate(450,228)"><path d="M4.5,13.5 L2,10.5 Q-0.5,6.5 3,3.5 Q7,0.5 11,3 L12.5,4.5" fill="none" stroke="#a0a0a0" stroke-width="3.6" stroke-linejoin="round"/><polygon points="7.5,6.5 16,7 15.5,0" fill="#a0a0a0"/></g><g transform="translate(450,249)"><path d="M11.5,14 L14,11 Q16.5,7 13,4 Q9,1 5,3.5 L3.5,5" fill="none" stroke="#1060d8" stroke-width="3.6" stroke-linejoin="round"/><polygon points="0.5,0.5 0,7.5 8.5,7" fill="#1060d8"/></g><g transform="translate(872,114)"><g shape-rendering="crispEdges"><path d="M0.5,0.5 h6 l3,3 v8 h-9 z" fill="#eef4ff" stroke="#8080c0" stroke-width="1"/><rect x="2" y="5" width="4" height="1" fill="#7070b8"/><rect x="2" y="7" width="4" height="1" fill="#7070b8"/><rect x="2" y="9" width="3" height="1" fill="#7070b8"/><path d="M5.5,4.5 h6 l3,3 v8 h-9 z" fill="#f4f8ff" stroke="#8080c0" stroke-width="1"/><rect x="7" y="9" width="6" height="1" fill="#6060b0"/><rect x="7" y="11" width="6" height="1" fill="#6060b0"/><rect x="7" y="13" width="6" height="1" fill="#6060b0"/></g></g><rect x="871" y="135" width="19" height="1" fill="#a0a0a0"/><rect x="871" y="136" width="19" height="1" fill="#ffffff"/><g transform="translate(872,144)"><path d="M4,0.5 h9 l-2.5,5 h-9 z" fill="#ffffff" stroke="#000" stroke-width="1"/><path d="M0.5,6.5 L3,5 h11.5 v4 l-2.5,4.5 h-11.5 z" fill="#a0a0a0" stroke="#000" stroke-width="1"/><path d="M0.5,6.5 h12 v7" fill="none" stroke="#000" stroke-width="1"/><rect x="2" y="9" width="8" height="2" fill="#606060"/></g><rect x="871" y="165" width="19" height="1" fill="#a0a0a0"/><rect x="871" y="166" width="19" height="1" fill="#ffffff"/><g transform="translate(872,173)"><rect x="0.5" y="0.5" width="15" height="15" rx="1" fill="#000080" stroke="#0000ff" stroke-width="1.2"/><rect x="2" y="1.5" width="12" height="7.5" fill="#000"/><rect x="2" y="7.5" width="12" height="1.5" fill="#ffff00"/><path d="M3.5,8 v-3 M5.5,8 v-2 M7.5,8 v-4 M9.5,8 v-2 M11.5,8 v-5 M13,8 v-2" stroke="#ffff00" stroke-width="1"/><rect x="4.5" y="10.5" width="7" height="5" fill="#c8c8c8"/><rect x="6" y="11.5" width="2" height="3.5" fill="#000080"/></g><g transform="translate(872,196)"><path d="M13.2,3.5 A6.5,6.5 0 1 0 13.2,12" fill="none" stroke="#0000ff" stroke-width="2"/><path d="M3.5,8 h10" stroke="#0000ff" stroke-width="1.6"/><polyline points="10,4.5 13.5,8 10,11.5" fill="none" stroke="#0000ff" stroke-width="1.6"/></g><rect x="871" y="218" width="19" height="1" fill="#a0a0a0"/><rect x="871" y="219" width="19" height="1" fill="#ffffff"/><g transform="translate(872,229)"><path d="M0.5,3.5 h3 l1,-2 h4 l1,2 h3 v8 h-12 z" fill="#c8c8c8" stroke="#000" stroke-width="1"/><path d="M12.5,3.5 l2,-1.5 v8 l-2,1.5" fill="#a0a0a0" stroke="#000" stroke-width="1"/><circle cx="6" cy="7.5" r="2.5" fill="#fff" stroke="#000" stroke-width="1"/><rect x="9" y="4.5" width="2" height="1.5" fill="#000"/></g><g transform="translate(872,249)"><path d="M0.5,0.5 L9.5,9.5" stroke="#000" stroke-width="1.6"/><path d="M8.5,8.5 L13,11 M8.5,8.5 L11,13 M9.5,9.5 L14.5,13.5 M8,10 L10,14.5 M10,9 L15,11.5" stroke="#000" stroke-width="0.9"/><path d="M0,13 l2,-2 M3,14 l3,-3 M5,15 l2,-2 M1,15.5 l1,-1" stroke="#000" stroke-width="0.9"/><circle cx="1.5" cy="12" r="0.6" fill="#808000"/><circle cx="4.5" cy="11.5" r="0.6" fill="#808000"/><circle cx="6" cy="15" r="0.6" fill="#808000"/><circle cx="1" cy="15.5" r="0.6" fill="#808000"/></g><g transform="translate(451,370)"><g shape-rendering="crispEdges"><rect x="0" y="7" width="15" height="1" fill="#000"/><rect x="1" y="0" width="1" height="7" fill="#ff0000"/><rect x="6" y="4" width="1" height="3" fill="#ff0000"/><rect x="9" y="2" width="1" height="5" fill="#ff0000"/><rect x="12" y="1" width="1" height="6" fill="#ff0000"/><rect x="3" y="8" width="1" height="6" fill="#0000ff"/><rect x="5" y="8" width="1" height="3" fill="#0000ff"/><rect x="8" y="8" width="1" height="4" fill="#0000ff"/><rect x="10" y="8" width="1" height="3" fill="#0000ff"/></g></g><g transform="translate(451,394)"><rect x="3" y="1.2" width="2" height="8.8" fill="#808000"/><polygon points="0,0 1.6,0 1.6,0.8 3,0.8 8,4 8,5.8 3,3.2 1.6,3.2 1.6,6 0,6" fill="#000"/><rect x="9" y="5" width="1.8" height="5" fill="#000"/><rect x="12.2" y="5" width="1.8" height="5" fill="#000"/><path d="M9.3,0 L11.5,3.2 L13.7,0 M9.8,5.2 L11.5,3 L13.2,5.2" fill="none" stroke="#000" stroke-width="1.5"/></g><g transform="translate(872,369)"><g shape-rendering="crispEdges"><path d="M0.5,0.5 h6 l3,3 v8 h-9 z" fill="#eef4ff" stroke="#8080c0" stroke-width="1"/><rect x="2" y="5" width="4" height="1" fill="#7070b8"/><rect x="2" y="7" width="4" height="1" fill="#7070b8"/><rect x="2" y="9" width="3" height="1" fill="#7070b8"/><path d="M5.5,4.5 h6 l3,3 v8 h-9 z" fill="#f4f8ff" stroke="#8080c0" stroke-width="1"/><rect x="7" y="9" width="6" height="1" fill="#6060b0"/><rect x="7" y="11" width="6" height="1" fill="#6060b0"/><rect x="7" y="13" width="6" height="1" fill="#6060b0"/></g></g><g transform="translate(872,391)"><rect x="0.5" y="0.5" width="15" height="15" rx="1" fill="#000080" stroke="#0000ff" stroke-width="1.2"/><rect x="2" y="1.5" width="12" height="7.5" fill="#000"/><rect x="2" y="7.5" width="12" height="1.5" fill="#ffff00"/><path d="M3.5,8 v-3 M5.5,8 v-2 M7.5,8 v-4 M9.5,8 v-2 M11.5,8 v-5 M13,8 v-2" stroke="#ffff00" stroke-width="1"/><rect x="4.5" y="10.5" width="7" height="5" fill="#c8c8c8"/><rect x="6" y="11.5" width="2" height="3.5" fill="#000080"/></g>
</svg>
</body></html>
